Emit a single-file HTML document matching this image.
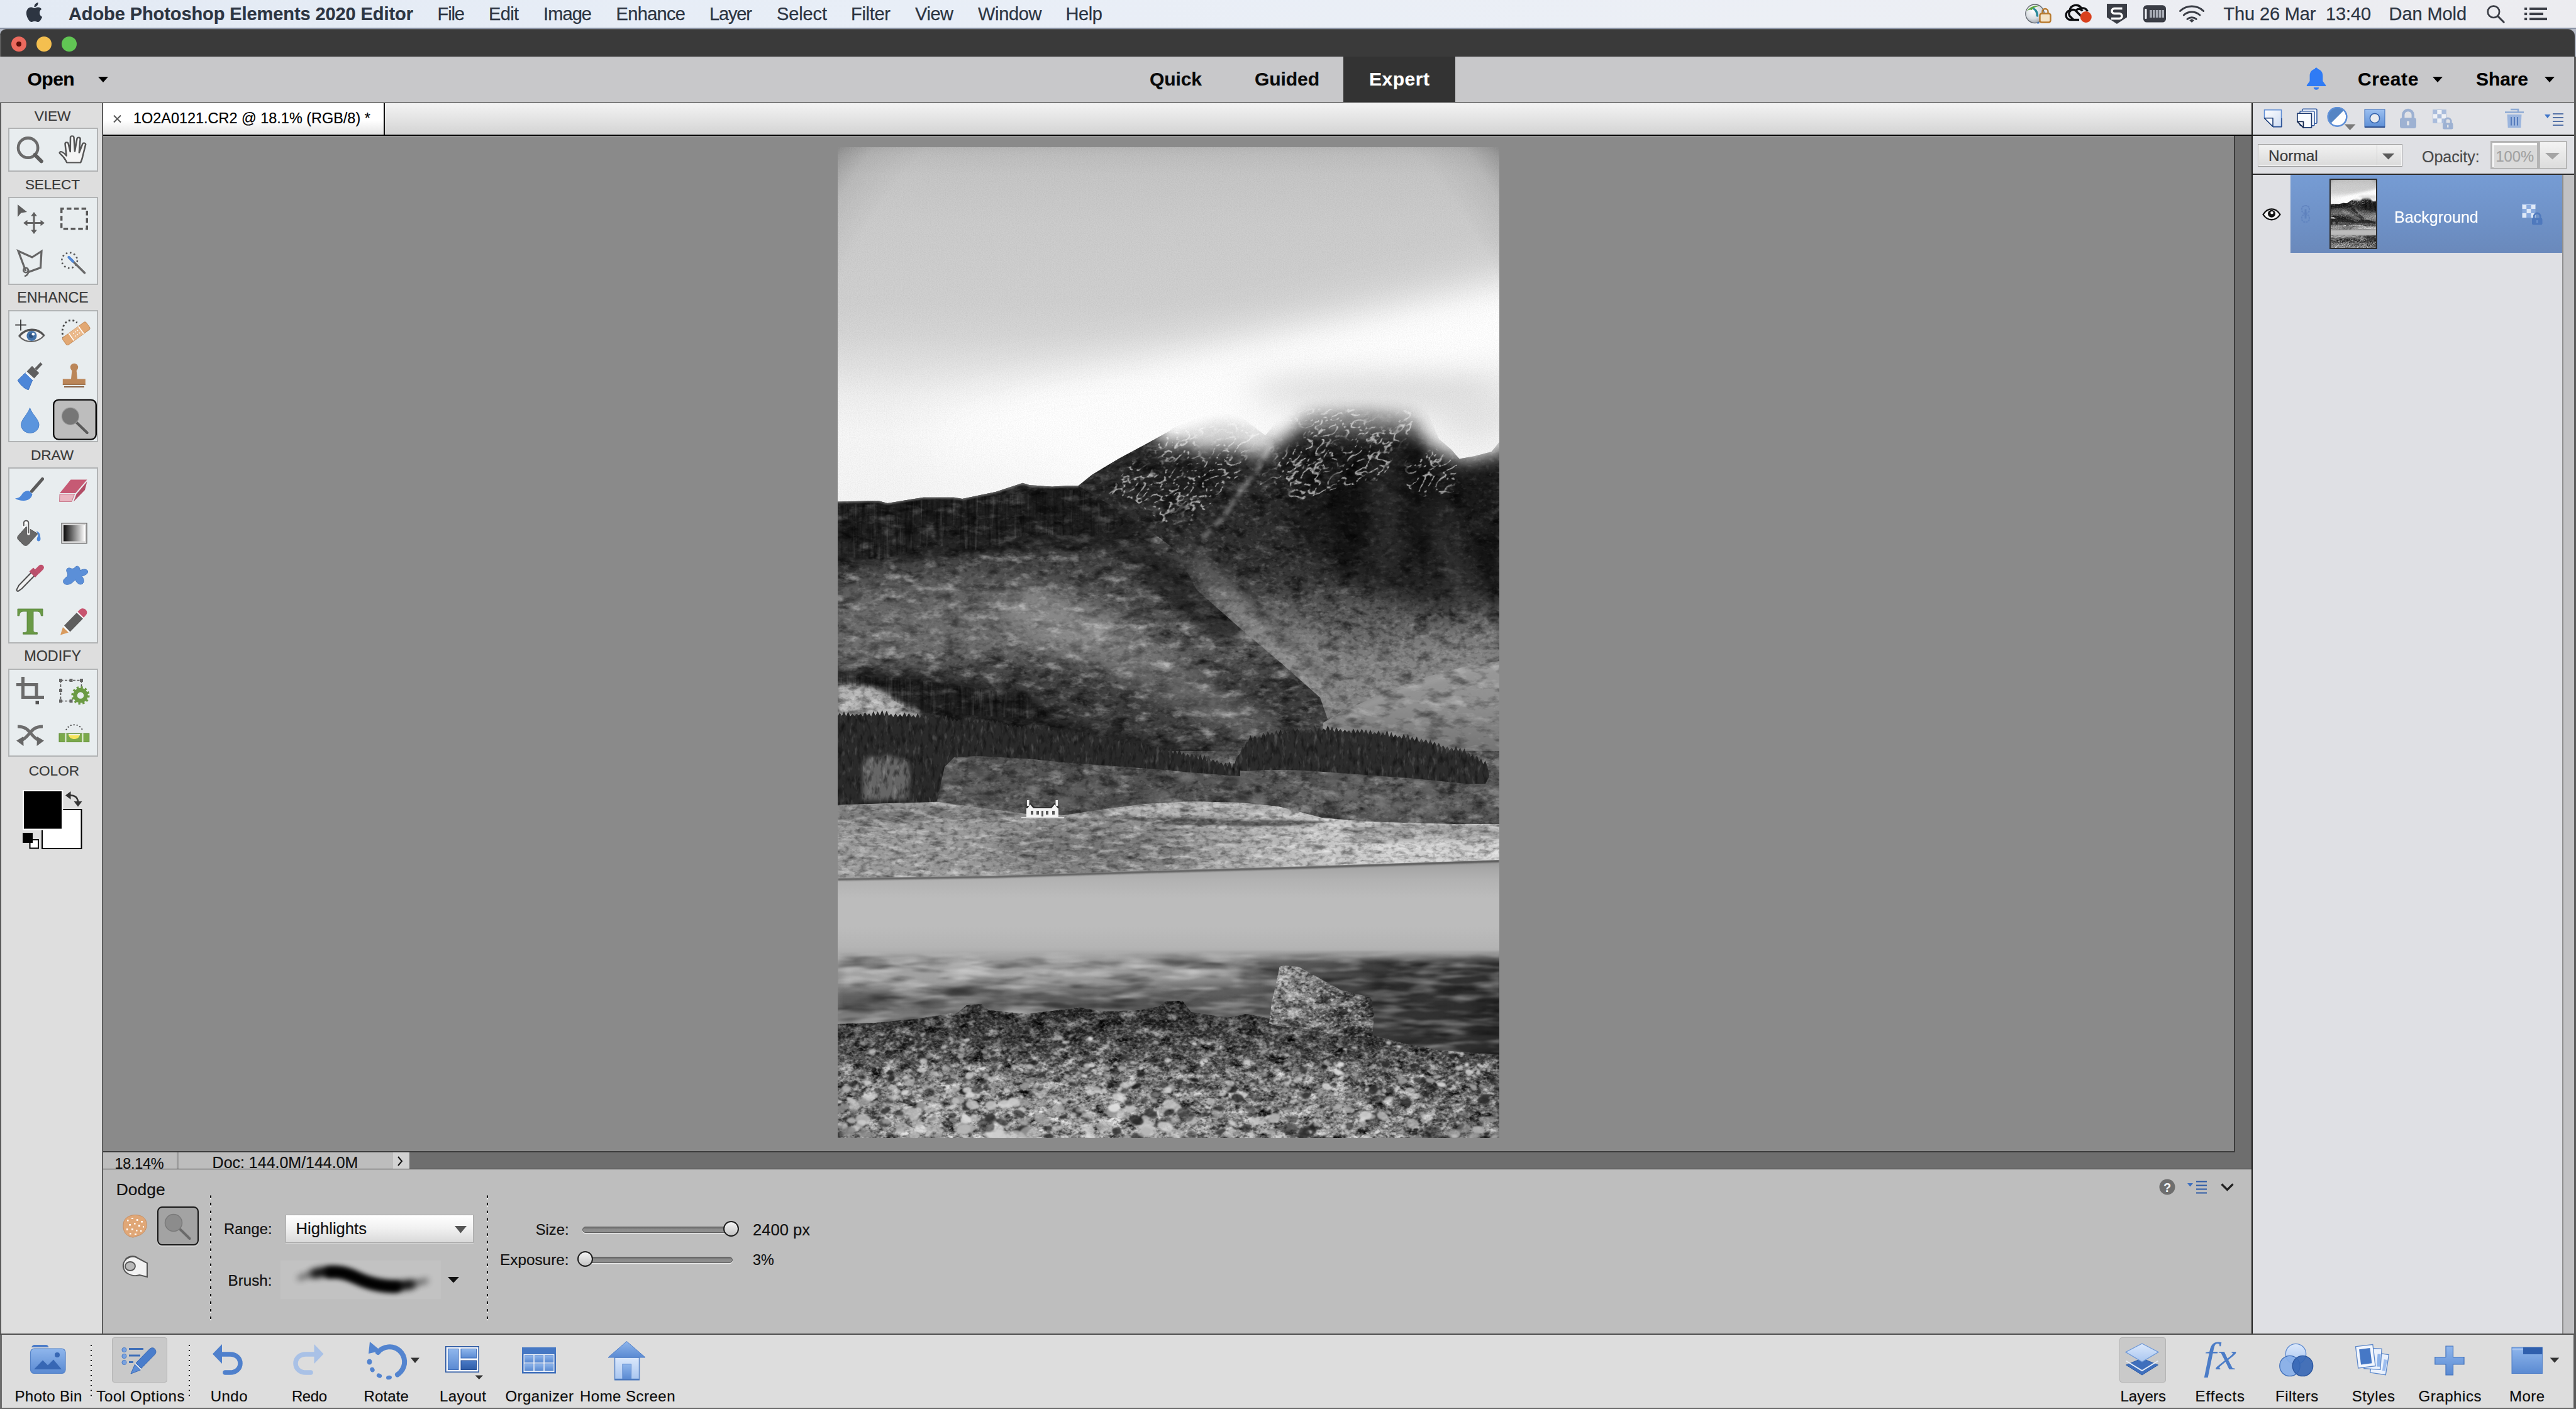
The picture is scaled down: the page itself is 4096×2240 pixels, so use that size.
<!DOCTYPE html>
<html><head><meta charset="utf-8"><title>Photoshop Elements</title>
<style>
html,body{margin:0;padding:0;}
body{width:4096px;height:2240px;overflow:hidden;position:relative;background:#dcdcdc;font-family:"Liberation Sans",sans-serif;}
.a{position:absolute;display:block;}
.t{position:absolute;white-space:nowrap;-webkit-text-stroke:0.2px;}
</style></head><body>
<!-- chrome -->
<div class="a" style="left:0px;top:0px;width:4096px;height:44px;background:linear-gradient(90deg,#e3eaf4 0%,#e8eef7 35%,#eceff5 70%,#ececf0 100%);"></div>
<svg class="a" style="left:38.9px;top:4px;" width="31" height="31" viewBox="0 0 24 24"><path fill="#2d3542" d="M12.152 6.896c-.948 0-2.415-1.078-3.960-1.040-2.040.027-3.910 1.183-4.961 3.014-2.117 3.675-.546 9.103 1.519 12.090 1.013 1.454 2.208 3.090 3.792 3.039 1.520-.065 2.090-.987 3.935-.987 1.831 0 2.350.987 3.960.948 1.637-.026 2.676-1.480 3.676-2.948 1.156-1.688 1.636-3.325 1.662-3.415-.039-.013-3.182-1.221-3.220-4.857-.026-3.040 2.480-4.494 2.597-4.559-1.429-2.090-3.623-2.324-4.390-2.376-2-.156-3.675 1.090-4.610 1.090zM15.530 3.830c.843-1.012 1.400-2.427 1.245-3.830-1.207.052-2.662.805-3.532 1.818-.780.896-1.454 2.338-1.273 3.714 1.338.104 2.715-.688 3.559-1.701"/></svg>
<div class="t" style="left:109.0px;top:7.9px;font-size:29.00px;line-height:29.00px;font-weight:700;color:#2d3542;letter-spacing:-0.09px;">Adobe Photoshop Elements 2020 Editor</div>
<div class="t" style="left:695.6px;top:7.8px;font-size:29.00px;line-height:29.00px;font-weight:400;color:#2d3542;letter-spacing:-1.11px;-webkit-text-stroke:0.25px #2d3542;">File</div>
<div class="t" style="left:777.0px;top:7.8px;font-size:29.00px;line-height:29.00px;font-weight:400;color:#2d3542;letter-spacing:-0.66px;-webkit-text-stroke:0.25px #2d3542;">Edit</div>
<div class="t" style="left:864.0px;top:7.8px;font-size:29.00px;line-height:29.00px;font-weight:400;color:#2d3542;letter-spacing:-0.90px;-webkit-text-stroke:0.25px #2d3542;">Image</div>
<div class="t" style="left:979.6px;top:7.8px;font-size:29.00px;line-height:29.00px;font-weight:400;color:#2d3542;letter-spacing:-0.68px;-webkit-text-stroke:0.25px #2d3542;">Enhance</div>
<div class="t" style="left:1128.0px;top:7.8px;font-size:29.00px;line-height:29.00px;font-weight:400;color:#2d3542;letter-spacing:-1.14px;-webkit-text-stroke:0.25px #2d3542;">Layer</div>
<div class="t" style="left:1235.0px;top:7.8px;font-size:29.00px;line-height:29.00px;font-weight:400;color:#2d3542;letter-spacing:-0.12px;-webkit-text-stroke:0.25px #2d3542;">Select</div>
<div class="t" style="left:1353.0px;top:7.8px;font-size:29.00px;line-height:29.00px;font-weight:400;color:#2d3542;letter-spacing:-0.29px;-webkit-text-stroke:0.25px #2d3542;">Filter</div>
<div class="t" style="left:1455.0px;top:7.8px;font-size:29.00px;line-height:29.00px;font-weight:400;color:#2d3542;letter-spacing:-0.44px;-webkit-text-stroke:0.25px #2d3542;">View</div>
<div class="t" style="left:1555.0px;top:7.8px;font-size:29.00px;line-height:29.00px;font-weight:400;color:#2d3542;letter-spacing:-0.33px;-webkit-text-stroke:0.25px #2d3542;">Window</div>
<div class="t" style="left:1694.5px;top:7.8px;font-size:29.00px;line-height:29.00px;font-weight:400;color:#2d3542;letter-spacing:-0.38px;-webkit-text-stroke:0.25px #2d3542;">Help</div>
<div class="t" style="left:3535.5px;top:7.8px;font-size:29.00px;line-height:29.00px;font-weight:400;color:#2d3542;letter-spacing:-0.15px;-webkit-text-stroke:0.25px #2d3542;">Thu 26 Mar  13:40</div>
<div class="t" style="left:3798.6px;top:7.8px;font-size:29.00px;line-height:29.00px;font-weight:400;color:#2d3542;letter-spacing:-0.10px;-webkit-text-stroke:0.25px #2d3542;">Dan Mold</div>
<svg class="a" style="left:3200px;top:0px;" width="896" height="46" viewBox="3200 0 896 46"><defs><radialGradient id="glb" cx=".4" cy=".35" r=".7"><stop offset="0" stop-color="#ffffff"/><stop offset=".6" stop-color="#d9dde2"/><stop offset="1" stop-color="#9aa0a8"/></radialGradient></defs><circle cx="3235.600" cy="21.800" r="14.800" fill="url(#glb)" stroke="#5f646b" stroke-width="1.300"/><path d="M3222.500 18c5-7 14-11 22-8-6-.5-11 2-14 6-3-1-6 0-8 2z" fill="#5aa63a"/><path d="M3233 12c6 2 9 8 8 15l-3.500-1c.5-5-1.500-9-5-11z" fill="#2b8a9a"/><path d="M3240 34l3 3-3.500 1z" fill="#3b7fd6"/><rect x="3243.500" y="21.500" width="17" height="14" rx="3" fill="#f3e3c8" stroke="#b87a2e" stroke-width="2.400"/><path d="M3247.500 21v-2.500a4.500 4.500 0 0 1 9 0V21" fill="none" stroke="#b87a2e" stroke-width="2.400"/><path d="M3292 31.500a7.500 7.500 0 0 1-1-14.800 10 10 0 0 1 18.500-3.500 8.500 8.500 0 0 1 10 5" fill="none" stroke="#0c0d10" stroke-width="3.400"/><path d="M3297 31.500l-6-6a6.500 6.500 0 0 1 9-9l10 10M3301 16.500a6 6 0 0 1 10 1" fill="none" stroke="#0c0d10" stroke-width="3.400" stroke-linejoin="round"/><path d="M3292 31.500h14" stroke="#0c0d10" stroke-width="3.400"/><circle cx="3316.800" cy="27" r="9" fill="#d9411e"/><path d="M3350 6h32v21.500l-16 10.500-16-10.500z" fill="#3a3d45"/><path d="M3374.500 13.500h-12.500a4 4 0 0 0 0 8h8a4 4 0 0 1 0 8h-13" fill="none" stroke="#fff" stroke-width="3.600"/><rect x="3408" y="8.200" width="36" height="27.400" rx="5.500" fill="#3a3d45"/><rect x="3410.500" y="14" width="3" height="16" rx="1" fill="#f2f4f8"/><rect x="3418.2" y="16" width="3.600" height="12" fill="#a9adb6"/><rect x="3423" y="16" width="3.600" height="12" fill="#a9adb6"/><rect x="3427.8" y="16" width="3.600" height="12" fill="#a9adb6"/><rect x="3432.6" y="16" width="3.600" height="12" fill="#a9adb6"/><rect x="3437.4" y="16" width="3.600" height="12" fill="#a9adb6"/><g fill="none" stroke="#3a3d45" stroke-width="3" stroke-linecap="round"><path d="M3466.500 17.500a27 27 0 0 1 37.200 0"/><path d="M3472.300 24a19 19 0 0 1 25.600 0"/><path d="M3478 30.300a11 11 0 0 1 14.200 0"/></g><path d="M3481.200 32.300l3.900-2.300 3.900 2.300-3.900 3.700z" fill="#3a3d45"/><circle cx="3964.900" cy="18.800" r="9.200" fill="none" stroke="#3a3d45" stroke-width="2.700"/><path d="M3971.600 25.600l9.600 9.700" stroke="#3a3d45" stroke-width="3" stroke-linecap="round"/><rect x="4014" y="12" width="4.200" height="3.900" fill="#3a3d45"/><rect x="4022" y="12" width="28" height="3.900" fill="#3a3d45"/><rect x="4014" y="20.2" width="4.200" height="3.900" fill="#3a3d45"/><rect x="4022" y="20.2" width="22" height="3.900" fill="#3a3d45"/><rect x="4014" y="28.2" width="4.200" height="3.900" fill="#3a3d45"/><rect x="4022" y="28.2" width="28" height="3.900" fill="#3a3d45"/></svg>
<div class="a" style="left:0px;top:44px;width:4096px;height:46px;background:linear-gradient(#8b94a5 0,#8b94a5 2px,#b4b9c6 2px);"></div>
<div class="a" style="left:0px;top:46px;width:4094px;height:44px;background:#3a3a3a;border-radius:10px 11px 0 0;border-top:1px solid #5a5a5a;box-sizing:border-box;"></div>
<div class="a" style="left:4093px;top:90px;width:3px;height:2150px;background:#5c5c5c;"></div>
<div class="a" style="left:18px;top:58px;width:24px;height:24px;border-radius:50%;background:#ec6a5e;"></div>
<div class="a" style="left:26px;top:66px;width:8px;height:8px;border-radius:50%;background:#5c0f0a;"></div>
<div class="a" style="left:58px;top:58px;width:24px;height:24px;border-radius:50%;background:#f4bf4f;"></div>
<div class="a" style="left:98px;top:58px;width:24px;height:24px;border-radius:50%;background:#61c554;"></div>
<div class="a" style="left:0px;top:56px;width:2px;height:2184px;background:#5c5c5c;"></div>
<div class="a" style="left:0px;top:90px;width:4093px;height:72px;background:#c8c8ca;"></div>
<div class="a" style="left:0px;top:162px;width:4093px;height:2px;background:#7c7c7c;"></div>
<div class="t" style="left:43.4px;top:111.1px;font-size:30.00px;line-height:30.00px;font-weight:700;color:#000;letter-spacing:-0.46px;">Open</div>
<svg class="a" style="left:156px;top:121.5px;" width="16" height="9" viewBox="0 0 16 9"><path d="M0 0h16l-8 9z" fill="#000"/></svg>
<div class="t" style="left:1828.0px;top:111.1px;font-size:30.00px;line-height:30.00px;font-weight:700;color:#0a0a0a;letter-spacing:-0.09px;">Quick</div>
<div class="t" style="left:1995.0px;top:111.1px;font-size:30.00px;line-height:30.00px;font-weight:700;color:#0a0a0a;letter-spacing:-0.07px;">Guided</div>
<div class="a" style="left:2136px;top:90px;width:178px;height:72px;background:#333333;"></div>
<div class="t" style="left:2177.0px;top:111.1px;font-size:30.00px;line-height:30.00px;font-weight:700;color:#fff;letter-spacing:0.53px;">Expert</div>
<div class="t" style="left:3749.0px;top:111.1px;font-size:30.00px;line-height:30.00px;font-weight:700;color:#000;letter-spacing:0.60px;">Create</div>
<svg class="a" style="left:3868px;top:121.5px;" width="16" height="9" viewBox="0 0 16 9"><path d="M0 0h16l-8 9z" fill="#000"/></svg>
<div class="t" style="left:3937.0px;top:111.1px;font-size:30.00px;line-height:30.00px;font-weight:700;color:#000;letter-spacing:-0.09px;">Share</div>
<svg class="a" style="left:4046px;top:121.5px;" width="16" height="9" viewBox="0 0 16 9"><path d="M0 0h16l-8 9z" fill="#000"/></svg>
<svg class="a" style="left:3664px;top:106px;" width="38" height="38" viewBox="0 0 38 38"><path fill="#2f7bf5" d="M19 1.500c1.400 0 2.400 1 2.400 2.300 5 1.200 8 5.200 8 10.700v8.500l4.600 6.200c.6.800.1 1.800-.9 1.800H4.900c-1 0-1.500-1-.9-1.800L8.600 23v-8.500c0-5.500 3-9.500 8-10.700C16.600 2.500 17.600 1.500 19 1.500zM14.800 33h8.400c0 2.200-1.900 3.800-4.200 3.800s-4.200-1.600-4.200-3.800z"/></svg>
<div class="a" style="left:164px;top:164px;width:3416px;height:50px;background:linear-gradient(#f3f3f3,#e2e2e2 55%,#d3d3d3);"></div>
<div class="a" style="left:164px;top:164px;width:446px;height:50px;background:linear-gradient(#ffffff 0%,#ffffff 55%,#e4e4e4 100%);"></div>
<div class="a" style="left:610px;top:164px;width:2px;height:50px;background:#111;"></div>
<div class="a" style="left:164px;top:214px;width:3416px;height:2px;background:#000;"></div>
<svg class="a" style="left:179.5px;top:182.5px;" width="13" height="12" viewBox="0 0 13 12"><path d="M1 .5l11 11M12 .5L1 11.500" stroke="#555" stroke-width="2" fill="none"/></svg>
<div class="t" style="left:212.0px;top:176.8px;font-size:23.45px;line-height:23.45px;font-weight:400;color:#000;letter-spacing:0.00px;">1O2A0121.CR2 @ 18.1% (RGB/8) *</div>
<div class="a" style="left:164px;top:216px;width:3388px;height:1614px;background:#8a8a8a;"></div>
<div class="a" style="left:164px;top:216px;width:3388px;height:2px;background:#969696;"></div>
<div class="a" style="left:3552px;top:216px;width:2px;height:1616px;background:#3c3c3c;"></div>
<div class="a" style="left:3554px;top:216px;width:26px;height:1642px;background:#6e6e6e;"></div>
<div class="a" style="left:164px;top:1830px;width:3390px;height:2px;background:#3c3c3c;"></div>
<div class="a" style="left:164px;top:1832px;width:3416px;height:26px;background:#6e6e6e;"></div>
<div class="a" style="left:164px;top:1858px;width:3416px;height:1px;background:#2e2e2e;"></div>
<!-- left -->
<div class="a" style="left:2px;top:164px;width:160px;height:1956px;background:#dedede;"></div>
<div class="a" style="left:162px;top:164px;width:2px;height:1956px;background:#5e5e5e;"></div>
<div class="t" style="left:54.7px;top:173.2px;font-size:22.74px;line-height:22.74px;font-weight:400;color:#3a3a3a;letter-spacing:-0.08px;">VIEW</div>
<div class="t" style="left:39.9px;top:283.4px;font-size:22.61px;line-height:22.61px;font-weight:400;color:#3a3a3a;letter-spacing:-0.17px;">SELECT</div>
<div class="t" style="left:27.3px;top:462.4px;font-size:23.19px;line-height:23.19px;font-weight:400;color:#3a3a3a;letter-spacing:-0.00px;">ENHANCE</div>
<div class="t" style="left:49.0px;top:713.3px;font-size:22.61px;line-height:22.61px;font-weight:400;color:#3a3a3a;letter-spacing:-0.07px;">DRAW</div>
<div class="t" style="left:38.3px;top:1032.4px;font-size:23.32px;line-height:23.32px;font-weight:400;color:#3a3a3a;letter-spacing:0.00px;">MODIFY</div>
<div class="t" style="left:45.8px;top:1215.2px;font-size:22.55px;line-height:22.55px;font-weight:400;color:#3a3a3a;letter-spacing:-0.00px;">COLOR</div>
<div class="a" style="left:12.5px;top:202.5px;width:143px;height:70.5px;box-sizing:border-box;background:#e8edef;border:2px solid #b2b4b5;"></div>
<div class="a" style="left:12.5px;top:312.5px;width:143px;height:140.1px;box-sizing:border-box;background:#e8edef;border:2px solid #b2b4b5;"></div>
<div class="a" style="left:12.5px;top:493.2px;width:143px;height:209.6px;box-sizing:border-box;background:#e8edef;border:2px solid #b2b4b5;"></div>
<div class="a" style="left:12.5px;top:742.7px;width:143px;height:280.2px;box-sizing:border-box;background:#e8edef;border:2px solid #b2b4b5;"></div>
<div class="a" style="left:12.5px;top:1062.8px;width:143px;height:140.5px;box-sizing:border-box;background:#e8edef;border:2px solid #b2b4b5;"></div>
<svg class="a" style="left:0px;top:164px;" width="164" height="1236" viewBox="0 164 164 1236"><circle cx="44.6" cy="235" r="15.6" fill="none" stroke="#6b6b6b" stroke-width="4.6"/><path d="M55.500 246.200L65.800 256.300" stroke="#5d5d5d" stroke-width="6" stroke-linecap="round"/><g transform="translate(116 0) scale(1.15 1) translate(-112.500 0)"><path d="M104 258.500c-1.500-4.500-5-10-9.500-14.500-1.300-1.600.600-3.600 2.600-2.600 2.400 1.300 4.600 3.600 6.400 6.200l-1.800-18.500c-.3-3.200 3.700-3.700 4.400-.6l2.700 12.700.2-22.400c0-3.300 4.500-3.400 4.800-.1l1.300 21.900 3-19.900c.5-3.100 4.700-2.600 4.500.6l-1.500 21.400 4.600-13.600c1-2.900 4.900-1.800 4.200 1.200-1.500 7-3.200 14.500-4.300 19.900-.6 3-1.500 5.700-2.600 8.300z" fill="#f4f4f4" stroke="#555" stroke-width="2.200" stroke-linejoin="round"/></g><path d="M28 325v20l5.500-6.500 9.500-1.500z" fill="#5e5e5e"/><path d="M54 340v29M39.500 354.500h29" stroke="#666" stroke-width="3.200"/><path d="M54 337l-4.800 6.500h9.600zM54 372l-4.800-6.500h9.600zM37 354.500l6.500-4.800v9.600zM71 354.500l-6.500-4.800v9.600z" fill="#5e5e5e"/><rect x="97.700" y="331.800" width="40.600" height="32" fill="none" stroke="#585858" stroke-width="3.400" stroke-dasharray="7.500 4.300" stroke-dashoffset="3.500"/><path d="M41 431l-12-32 22 10 15-9.500-1.500 26-20.500 7.500" fill="none" stroke="#666" stroke-width="3.200" stroke-linejoin="miter"/><circle cx="41" cy="429.500" r="3.800" fill="none" stroke="#666" stroke-width="2.600"/><path d="M44.500 427.500c2.500 5-1 11-5.500 11.500" fill="none" stroke="#666" stroke-width="2.600"/><circle cx="110.600" cy="414" r="12.300" fill="none" stroke="#555" stroke-width="2.600" stroke-dasharray="2.600 3.840"/><path d="M113 412.500L134.500 433.800" stroke="#6a6a6a" stroke-width="3.600" stroke-linecap="round"/><path d="M109.500 409l6.500 6.500" stroke="#4f86d6" stroke-width="4.200" stroke-linecap="round"/><path d="M33 508v17.500M24.200 516.700h17.600" stroke="#333" stroke-width="1.800"/><path d="M30.600 534.500c10-13 29-14 39.400-1-10.500 12-29 13-39.400 1z" fill="#f3f3f3" stroke="#666" stroke-width="2.200"/><path d="M30.600 534.500c10-13 29-14 39.400-1" fill="none" stroke="#555" stroke-width="3.400"/><circle cx="50.400" cy="534" r="8" fill="#4272a8"/><circle cx="49.500" cy="533.800" r="3.500" fill="#2c4f7d"/><circle cx="52.800" cy="531.300" r="2.300" fill="#fff"/><path d="M101.500 538c-4-8-3-20 4-26 5-4 12-3.500 17 1" fill="none" stroke="#444" stroke-width="2.800" stroke-dasharray="2.800 3.600"/><g transform="rotate(-36 121.200 530.200)"><rect x="98.200" y="523" width="46" height="14.400" rx="3" fill="#e2a873" stroke="#c68e5a" stroke-width="1"/><rect x="112.200" y="523" width="18" height="14.400" fill="#eab98b"/><path d="M111.700 523v14.400M130.700 523v14.400" stroke="#fff" stroke-width="1.600"/><path d="M117 527.500h1.600M121 527.500h1.600M125 527.500h1.600M117 532.500h1.600M121 532.500h1.600M125 532.500h1.600" stroke="#fff" stroke-width="1.600"/></g><path d="M28.200 604.500l12.200-11.800 11.500 11-6.700 16c-7-2-13-8-17-15.200z" fill="#4c86d8" stroke="#3a6fbd" stroke-width="1"/><path d="M42.600 590.500l8.400-8.700 11.200 11.200-7.800 8.600z" fill="#5f5f5f"/><path d="M55.300 585.500l9-9.500 3.200 3.200-9 9.500z" fill="#5f5f5f"/><path d="M40.800 592.500l11.400 11" stroke="#fff" stroke-width="1.600"/><circle cx="118" cy="584" r="6.200" fill="#bb8658"/><path d="M114.500 588h7l1.500 14.500h12.800v9h-36v-9h13.200z" fill="#bb8658"/><path d="M102 615h32" stroke="#7b5230" stroke-width="1.800"/><path d="M99.800 611.200h36" stroke="#8e6138" stroke-width="1.200"/><path d="M47.500 648.500c4 11 14.500 18.500 14.500 27a14.200 13 0 0 1-28.400 0c0-8.500 10-16 13.900-27z" fill="#5b95dd" stroke="#4a80c8" stroke-width="1"/><rect x="85.200" y="635.600" width="67.600" height="63" rx="8" fill="#bdbdbd" stroke="#0c0c0c" stroke-width="2.400"/><path d="M121 671l17.600 17" stroke="#5a5a5a" stroke-width="4.200" stroke-linecap="round"/><circle cx="111.900" cy="661.800" r="13.600" fill="#767676" stroke="#9a9a9a" stroke-width="1.200"/><defs><linearGradient id="lgGrad" x1="0" x2="1"><stop offset="0" stop-color="#0a0a0a"/><stop offset="1" stop-color="#fff"/></linearGradient></defs><path d="M67.500 761.500L50.500 781" stroke="#5b5b5b" stroke-width="5" stroke-linecap="round"/><path d="M46.500 780.500l5 5c-1 7-8 11-14.500 10.500-5 0-9.500-1.500-13-3.500 5-.5 8.500-2.500 10.500-6 2.500-4.500 7-7 12-6z" fill="#4e88d9"/><path d="M112.500 762.500h26L120 784h-25z" fill="#c65a74"/><path d="M95 785.500h23.500L114 797.500H94.500z" fill="#eab6c1" stroke="#c87b8e" stroke-width="1"/><path d="M121.500 785.500L138.500 765.500l-3.500 13.500-18 18.500z" fill="#b24d66"/><path d="M41.600 837.500L60 848.500 45.500 865c-2.500 2.800-5.500 3.200-8.500 1l-7.500-7.500c-2.500-2.500-2.300-5 0-7.500z" fill="#686868" stroke="#585858" stroke-width="1"/><path d="M45.400 848.500v-14.500a3.800 3.800 0 0 0-7.600 0v3" fill="none" stroke="#fff" stroke-width="4.600" stroke-linecap="round"/><path d="M45.400 847v-15.500a3.800 3.800 0 0 0-7.600 0v4" fill="none" stroke="#595959" stroke-width="2" stroke-linecap="round"/><path d="M57.400 844.200c4.500 1.300 6.500 4.200 6.500 8 .3 2.800 1.400 5.300-.4 7.300-1.800 1.700-4.600.9-4.900-1.800-.3-2.500 1.700-4.200 1.800-6.700.1-2.600-1-4.800-3-6.800z" fill="#4e88d9"/><rect x="98" y="831.700" width="40" height="32" fill="#d8d8d8" stroke="#6f6f6f" stroke-width="1.400"/><rect x="101" y="835" width="34" height="25.500" fill="url(#lgGrad)"/><path d="M27 936.500c-1.500 1.500.5 4.500 2.500 3l5.500-4 20.500-21-5-5-20.500 21z" fill="#f2f2f2" stroke="#4e4e4e" stroke-width="2"/><path d="M46.500 908.500l6.500-6 9 9-6 6.500z" fill="#b8506b"/><path d="M55.500 905.500l6.500-6.500a4.500 4.500 0 0 1 6.500 6.500L62 912z" fill="#c0506c"/><path d="M121 900.500c4-1.500 6 2 6.500 6.500 4-2.500 10.500-3 12 1 1 4-4 6.500-9.500 8 3.500 4 4.500 9.500 1 12-4.500 3-9-1.500-11.500-6.500-3.500 4.500-9 9-15 7.500-5-1.500-5.500-7 .5-11 3-2.500 3.500-5 1.500-8.500-2.500-4.500 1.500-8 6-6 2.500 1.500 4.500 1 8.500-3z" fill="#5b8fd8" stroke="#4a7cc4" stroke-width="1"/><path d="M28 968h40v11h-2.600c-.8-5-2.400-7-7.400-7h-5v30c0 2.600 1.400 3.600 6.400 3.600v2.600H36.600v-2.600c5 0 6.400-1 6.400-3.600v-30h-5c-5 0-6.600 2-7.400 7H28z" fill="#6a9a46" stroke="#55803a" stroke-width=".8"/><path d="M96 1009.500l4-12.500 9 8.500z" fill="#d99b5e"/><path d="M102 994.500l20-20.500 10 9.500-20.500 21z" fill="#5e5e5e"/><path d="M123.500 972.500l3.500-3.500c3-2.500 7-2 9.500.5s2.500 6 0 8.500l-3.500 4z" fill="#c8546f"/><path d="M100.800 996l9.700 9.200M122.600 973.200l10.200 9.800" stroke="#fff" stroke-width="1.500"/><path d="M36.500 1076v32.500H70M26 1088.500h32v19" fill="none" stroke="#6a6a6a" stroke-width="5"/><rect x="56.500" y="1114" width="5.500" height="5.500" fill="#555"/><path d="M96.500 1081.500h33M96.500 1081.500v33M96.500 1114.500h18M129.500 1081.500v10" stroke="#555" stroke-width="1.600" stroke-dasharray="4 2.500" fill="none"/><g fill="#666"><rect x="94" y="1079" width="5" height="5"/><rect x="110.500" y="1079" width="5" height="5"/><rect x="127" y="1079" width="5" height="5"/><rect x="94" y="1095" width="5" height="5"/><rect x="94" y="1112" width="5" height="5"/><rect x="110.500" y="1112" width="5" height="5"/></g><circle cx="128" cy="1105.600" r="8.500" fill="none" stroke="#6b9a44" stroke-width="6.500"/><circle cx="128" cy="1105.600" r="12.600" fill="none" stroke="#6b9a44" stroke-width="4" stroke-dasharray="3.300 3.300"/><path d="M28 1155c13 0 17 6 22 12s8 9 14 11" fill="none" stroke="#6d6d6d" stroke-width="5"/><path d="M68 1155c-13 0-17 6-22 12s-8 9-14 11" fill="none" stroke="#6d6d6d" stroke-width="5"/><path d="M70 1177.500l-11.500 8.500.5-15zM26 1177.500l11.500 8.500-.5-15z" fill="#666"/><rect x="94" y="1166" width="47.800" height="13.400" fill="#7aa94b" stroke="#5e8a38" stroke-width="1"/><path d="M104.500 1165.500v14.500M131.500 1165.500v14.500" stroke="#e6eedd" stroke-width="2"/><path d="M109 1168h18c-1 5-5 7-9 7s-8-2-9-7z" fill="#f6e45a"/><path d="M109 1168h18" stroke="#fff" stroke-width="1.600"/><path d="M105 1160.500c5-11 21-11 26 0" fill="none" stroke="#333" stroke-width="1.800" stroke-dasharray="1.800 3.200"/><rect x="67" y="1287" width="62.500" height="62" fill="#fff" stroke="#000" stroke-width="2"/><rect x="36" y="1256" width="64.300" height="63.700" fill="#fff"/><rect x="38" y="1258" width="60" height="59.500" fill="#000"/><rect x="47.500" y="1335" width="13.500" height="13.500" fill="#fff" stroke="#000" stroke-width="2"/><rect x="36" y="1324" width="16" height="16" fill="#000"/><path d="M109.500 1264.500c9-1 14.500 3 14.500 11" fill="none" stroke="#333" stroke-width="2.600"/><path d="M104 1264.500l8.500-6.500v13zM124 1282.500l-6.500-8.500h13z" fill="#333"/></svg>
<!-- photo -->
<svg class="a" style="left:1332px;top:234px" width="1052" height="1575" viewBox="0 0 1052 1575"><symbol id="photo" viewBox="0 0 1052 1575" preserveAspectRatio="none"><defs><clipPath id="pclip"><rect x="0" y="0" width="1052" height="1575"/></clipPath><linearGradient id="skyg" x1="0" y1="0" x2="0" y2="620" gradientUnits="userSpaceOnUse"><stop offset="0" stop-color="#b6b6b6"/><stop offset="0.02" stop-color="#bebebe"/><stop offset="0.07" stop-color="#c6c6c6"/><stop offset="0.2" stop-color="#cccccc"/><stop offset="0.4" stop-color="#d0d0d0"/><stop offset="0.48" stop-color="#d6d6d6"/><stop offset="0.56" stop-color="#e2e2e2"/><stop offset="0.64" stop-color="#f0f0f0"/><stop offset="0.74" stop-color="#f8f8f8"/><stop offset="0.88" stop-color="#f6f6f6"/><stop offset="1" stop-color="#f0f0f0"/></linearGradient><filter id="b40" filterUnits="userSpaceOnUse" x="-300" y="-300" width="1652" height="2175"><feGaussianBlur stdDeviation="40"/></filter><filter id="b25" filterUnits="userSpaceOnUse" x="-300" y="-300" width="1652" height="2175"><feGaussianBlur stdDeviation="25"/></filter><filter id="b14" filterUnits="userSpaceOnUse" x="-300" y="-300" width="1652" height="2175"><feGaussianBlur stdDeviation="14"/></filter><filter id="b6" filterUnits="userSpaceOnUse" x="-300" y="-300" width="1652" height="2175"><feGaussianBlur stdDeviation="6"/></filter><filter id="b3" filterUnits="userSpaceOnUse" x="-300" y="-300" width="1652" height="2175"><feGaussianBlur stdDeviation="3"/></filter><filter id="b1" filterUnits="userSpaceOnUse" x="-300" y="-300" width="1652" height="2175"><feGaussianBlur stdDeviation="1.2"/></filter><radialGradient id="vig" cx="0.5" cy="0.5" r="0.72"><stop offset="0.86" stop-color="#000" stop-opacity="0"/><stop offset="0.93" stop-color="#000" stop-opacity="0.060"/><stop offset="0.97" stop-color="#000" stop-opacity="0.180"/><stop offset="1" stop-color="#000" stop-opacity="0.320"/></radialGradient><mask id="fogm" maskUnits="userSpaceOnUse" x="0" y="0" width="1052" height="1575"><rect width="1052" height="1575" fill="#fff"/><path d="M505 436L538 428 575 416 613 408 650 416 690 428 710 408 731 388 800 384 860 385 902 389 945 396 965 440 1000 455 1060 440" fill="none" stroke="#000" stroke-width="84" stroke-linejoin="round" filter="url(#b14)"/><path d="M560 466L620 458 690 476" fill="none" stroke="#000" stroke-width="40" filter="url(#b14)" opacity=".8"/><path d="M740 440L920 440" fill="none" stroke="#000" stroke-width="30" filter="url(#b14)" opacity=".45"/></mask><filter id="nzMtn" x="0" y="0" width="100%" height="100%" color-interpolation-filters="sRGB"><feTurbulence type="fractalNoise" baseFrequency="0.035 0.060" numOctaves="5" seed="3" result="n"/><feColorMatrix in="n" type="matrix" values="0 0 0 0 0  0 0 0 0 0  0 0 0 0 0  1.8 0 0 0 -0.9" result="d"/><feColorMatrix in="n" type="matrix" values="0 0 0 0 1  0 0 0 0 1  0 0 0 0 1  0 0.8 0 0 -0.5" result="l"/><feMerge result="m"><feMergeNode in="d"/><feMergeNode in="l"/></feMerge><feComposite in="m" in2="SourceGraphic" operator="in"/></filter><filter id="nzMtnF" x="0" y="0" width="100%" height="100%" color-interpolation-filters="sRGB"><feTurbulence type="fractalNoise" baseFrequency="0.11 0.16" numOctaves="3" seed="8" result="n"/><feColorMatrix in="n" type="matrix" values="0 0 0 0 0  0 0 0 0 0  0 0 0 0 0  1.4 0 0 0 -0.66" result="d"/><feColorMatrix in="n" type="matrix" values="0 0 0 0 1  0 0 0 0 1  0 0 0 0 1  0 0.8 0 0 -0.44" result="l"/><feMerge result="m"><feMergeNode in="d"/><feMergeNode in="l"/></feMerge><feComposite in="m" in2="SourceGraphic" operator="in"/></filter><filter id="nzSnow" x="0" y="0" width="100%" height="100%" color-interpolation-filters="sRGB"><feTurbulence type="turbulence" baseFrequency="0.05 0.085" numOctaves="2" seed="11" result="n"/><feColorMatrix in="n" type="matrix" values="0 0 0 0 1  0 0 0 0 1  0 0 0 0 1  0 -9 0 0 1.55" result="v"/><feTurbulence type="fractalNoise" baseFrequency="0.02" numOctaves="2" seed="4" result="m"/><feColorMatrix in="m" type="matrix" values="0 0 0 0 1  0 0 0 0 1  0 0 0 0 1  5 0 0 0 -1.5" result="mm"/><feComposite in="v" in2="mm" operator="in" result="vv"/><feComposite in="vv" in2="SourceGraphic" operator="in"/></filter><filter id="nzHill" x="0" y="0" width="100%" height="100%" color-interpolation-filters="sRGB"><feTurbulence type="fractalNoise" baseFrequency="0.030 0.065" numOctaves="5" seed="21" result="n"/><feColorMatrix in="n" type="matrix" values="0 0 0 0 0  0 0 0 0 0  0 0 0 0 0  1.8 0 0 0 -0.88" result="d"/><feColorMatrix in="n" type="matrix" values="0 0 0 0 1  0 0 0 0 1  0 0 0 0 1  0 1.3 0 0 -0.7" result="l"/><feMerge result="m"><feMergeNode in="d"/><feMergeNode in="l"/></feMerge><feComposite in="m" in2="SourceGraphic" operator="in"/></filter><filter id="nzForest" x="0" y="0" width="100%" height="100%" color-interpolation-filters="sRGB"><feTurbulence type="fractalNoise" baseFrequency="0.16 0.06" numOctaves="3" seed="5" result="n"/><feColorMatrix in="n" type="matrix" values="0 0 0 0 0  0 0 0 0 0  0 0 0 0 0  1.5 0 0 0 -0.7" result="d"/><feColorMatrix in="n" type="matrix" values="0 0 0 0 1  0 0 0 0 1  0 0 0 0 1  0 0.7 0 0 -0.4" result="l"/><feMerge result="m"><feMergeNode in="d"/><feMergeNode in="l"/></feMerge><feComposite in="m" in2="SourceGraphic" operator="in"/></filter><filter id="nzGrass" x="0" y="0" width="100%" height="100%" color-interpolation-filters="sRGB"><feTurbulence type="fractalNoise" baseFrequency="0.035 0.12" numOctaves="4" seed="31" result="n"/><feColorMatrix in="n" type="matrix" values="0 0 0 0 0  0 0 0 0 0  0 0 0 0 0  1.3 0 0 0 -0.7" result="d"/><feColorMatrix in="n" type="matrix" values="0 0 0 0 1  0 0 0 0 1  0 0 0 0 1  0 1.3 0 0 -0.64" result="l"/><feMerge result="m"><feMergeNode in="d"/><feMergeNode in="l"/></feMerge><feComposite in="m" in2="SourceGraphic" operator="in"/></filter><filter id="nzWater" x="0" y="0" width="100%" height="100%" color-interpolation-filters="sRGB"><feTurbulence type="fractalNoise" baseFrequency="0.012 0.075" numOctaves="3" seed="41" result="n"/><feColorMatrix in="n" type="matrix" values="0 0 0 0 0  0 0 0 0 0  0 0 0 0 0  1.3 0 0 0 -0.62" result="d"/><feColorMatrix in="n" type="matrix" values="0 0 0 0 1  0 0 0 0 1  0 0 0 0 1  0 1.2 0 0 -0.56" result="l"/><feMerge result="m"><feMergeNode in="d"/><feMergeNode in="l"/></feMerge><feGaussianBlur in="m" stdDeviation="1.2" result="m"/><feComposite in="m" in2="SourceGraphic" operator="in"/></filter><filter id="nzRock" x="0" y="0" width="100%" height="100%" color-interpolation-filters="sRGB"><feTurbulence type="fractalNoise" baseFrequency="0.042 0.070" numOctaves="4" seed="52" result="n"/><feColorMatrix in="n" type="matrix" values="0 0 0 0 0  0 0 0 0 0  0 0 0 0 0  2.6 0 0 0 -1.2" result="d"/><feColorMatrix in="n" type="matrix" values="0 0 0 0 1  0 0 0 0 1  0 0 0 0 1  0 2.5 0 0 -1.2" result="l"/><feMerge result="m"><feMergeNode in="d"/><feMergeNode in="l"/></feMerge><feComposite in="m" in2="SourceGraphic" operator="in"/></filter><filter id="nzRockF" x="0" y="0" width="100%" height="100%" color-interpolation-filters="sRGB"><feTurbulence type="fractalNoise" baseFrequency="0.18 0.24" numOctaves="2" seed="57" result="n"/><feColorMatrix in="n" type="matrix" values="0 0 0 0 0  0 0 0 0 0  0 0 0 0 0  1.6 0 0 0 -0.7" result="d"/><feColorMatrix in="n" type="matrix" values="0 0 0 0 1  0 0 0 0 1  0 0 0 0 1  0 1.5 0 0 -0.68" result="l"/><feMerge result="m"><feMergeNode in="d"/><feMergeNode in="l"/></feMerge><feComposite in="m" in2="SourceGraphic" operator="in"/></filter><filter id="nzCliff" x="0" y="0" width="100%" height="100%" color-interpolation-filters="sRGB"><feTurbulence type="fractalNoise" baseFrequency="0.16 0.012" numOctaves="3" seed="77" result="n"/><feColorMatrix in="n" type="matrix" values="0 0 0 0 0  0 0 0 0 0  0 0 0 0 0  2.6 0 0 0 -1.2" result="d"/><feColorMatrix in="n" type="matrix" values="0 0 0 0 1  0 0 0 0 1  0 0 0 0 1  0 1 0 0 -0.6" result="l"/><feMerge result="m"><feMergeNode in="d"/><feMergeNode in="l"/></feMerge><feComposite in="m" in2="SourceGraphic" operator="in"/></filter><filter id="nzSky" x="0" y="0" width="100%" height="100%" color-interpolation-filters="sRGB"><feTurbulence type="fractalNoise" baseFrequency="0.7" numOctaves="1" seed="61" result="n"/><feColorMatrix in="n" type="matrix" values="0 0 0 0 0  0 0 0 0 0  0 0 0 0 0  0.1 0 0 0 -0.035" result="d"/><feColorMatrix in="n" type="matrix" values="0 0 0 0 1  0 0 0 0 1  0 0 0 0 1  0 0.1 0 0 -0.035" result="l"/><feMerge result="m"><feMergeNode in="d"/><feMergeNode in="l"/></feMerge><feComposite in="m" in2="SourceGraphic" operator="in"/></filter></defs><g clip-path="url(#pclip)"><rect x="0" y="0" width="1052" height="640" fill="url(#skyg)"/><path d="M150 500L1150 270" stroke="#fff" stroke-width="150" filter="url(#b40)" fill="none"/><path d="M280 462L1150 262" stroke="#fff" stroke-width="84" filter="url(#b25)" fill="none"/><ellipse cx="420" cy="490" rx="230" ry="70" fill="#fff" filter="url(#b40)" opacity=".95"/><ellipse cx="120" cy="545" rx="260" ry="60" fill="#f6f6f6" filter="url(#b40)" opacity=".7"/><ellipse cx="850" cy="388" rx="200" ry="26" fill="#c4c4c4" filter="url(#b25)" opacity=".6"/><ellipse cx="1015" cy="430" rx="60" ry="40" fill="#dcdcdc" filter="url(#b25)" opacity=".6"/><rect x="0" y="0" width="1052" height="640" filter="url(#nzSky)" fill="#000"/><defs><linearGradient id="mtng" x1="0" y1="415" x2="0" y2="960" gradientUnits="userSpaceOnUse"><stop offset="0" stop-color="#2a2a2a"/><stop offset="0.25" stop-color="#2c2c2c"/><stop offset="0.42" stop-color="#323232"/><stop offset="0.51" stop-color="#3c3c3c"/><stop offset="0.57" stop-color="#565656"/><stop offset="0.66" stop-color="#6a6a6a"/><stop offset="0.8" stop-color="#747474"/><stop offset="1" stop-color="#686868"/></linearGradient><linearGradient id="ridgeg" x1="0" y1="535" x2="0" y2="960" gradientUnits="userSpaceOnUse"><stop offset="0" stop-color="#343434"/><stop offset="0.16" stop-color="#383838"/><stop offset="0.27" stop-color="#444"/><stop offset="0.45" stop-color="#525252"/><stop offset="0.62" stop-color="#5c5c5c"/><stop offset="0.72" stop-color="#444"/><stop offset="0.84" stop-color="#3c3c3c"/><stop offset="1" stop-color="#4a4a4a"/></linearGradient><linearGradient id="rhillg" x1="0" y1="817" x2="0" y2="960" gradientUnits="userSpaceOnUse"><stop offset="0" stop-color="#9a9a9a"/><stop offset="0.5" stop-color="#8e8e8e"/><stop offset="1" stop-color="#747474"/></linearGradient><clipPath id="cMtn"><path d="M379 541L404.600 520.500 447 495 490 472 526 452 538 444 575 430 613 420 640 428 680 458 690 446 708.700 420 731 398 800 393 860 394 902 398 932 404 944 436 956 464 975 480 988.500 495.500 1013 491 1039.600 484 1052 468.800V1000H379Z"/></clipPath><clipPath id="cRidge"><path d="M0 563.600L64 562 79 566 136 556.700 185 556.700 198 559 251 548 283 537.600 294 533.700 304.500 537 341 539.700 366 538 383 538.600 481 598 537 640 571 704 639 764 705 820 767 875 779 909 779 1000H0Z"/></clipPath><clipPath id="cSnow"><path d="M478 486L540 452 640 436 672 452 640 520 600 560 560 600 520 600 470 560 430 550Z"/><path d="M690 462L725 415 920 418 900 480 860 530 800 540 740 560 700 560 670 540Z"/><path d="M900 500L950 478 985 505 980 548 930 556 905 540Z"/></clipPath></defs><g mask="url(#fogm)"><path d="M379 541L404.600 520.500 447 495 490 472 526 452 538 444 575 430 613 420 640 428 680 458 690 446 708.700 420 731 398 800 393 860 394 902 398 932 404 944 436 956 464 975 480 988.500 495.500 1013 491 1039.600 484 1052 468.800V1000H379Z" fill="url(#mtng)"/><g clip-path="url(#cMtn)"><rect x="379" y="400" width="673" height="600" fill="#000" filter="url(#nzMtn)"/><rect x="379" y="400" width="673" height="600" fill="#000" filter="url(#nzMtnF)" opacity=".7"/><path d="M690 470L760 425 935 420 990 500 1052 475V730L960 745 840 705 740 640Z" fill="#000" opacity=".38" filter="url(#b14)"/><path d="M780 560L830 470 850 600 800 700ZM880 520L920 450 960 560 930 680Z" fill="#000" opacity=".32" filter="url(#b6)"/><path d="M842 520L900 470 905 620 862 720Z" fill="#fff" opacity=".06" filter="url(#b14)"/><path d="M470 500L560 470 640 470 600 560 520 600Z" fill="#000" opacity=".25" filter="url(#b14)"/><path d="M560 650L700 740 820 800 960 770 1052 780V870L900 885 790 910 700 835 600 745Z" fill="#fff" opacity=".14" filter="url(#b14)"/><path d="M548 634C590 680 640 740 700 800S760 870 790 900" fill="none" stroke="#fff" stroke-width="26" opacity=".13" filter="url(#b14)"/><path d="M640 700L770 842" fill="none" stroke="#000" stroke-width="14" opacity=".22" filter="url(#b6)"/><path d="M940 560L990 700 1052 800" fill="none" stroke="#fff" stroke-width="40" opacity=".07" filter="url(#b14)"/><path d="M1015 640L1052 590V770Z" fill="#000" opacity=".35" filter="url(#b6)"/><g clip-path="url(#cSnow)" opacity=".62"><g transform="rotate(-30 700 500)"><rect x="300" y="200" width="800" height="600" fill="#fff" filter="url(#nzSnow)"/></g></g><path d="M690 470L668 512 640 548 612 590 580 622" fill="none" stroke="#e8e8e8" stroke-width="6" opacity=".45" filter="url(#b3)" stroke-dasharray="30 6 18 8 40 5"/></g></g><path d="M0 563.600L64 562 79 566 136 556.700 185 556.700 198 559 251 548 283 537.600 294 533.700 304.500 537 341 539.700 366 538 383 538.600 481 598 537 640 571 704 639 764 705 820 767 875 779 909 779 1000H0Z" fill="url(#ridgeg)"/><g clip-path="url(#cRidge)"><path d="M0 850L60 858 130 897 128 910 0 910Z" fill="#b4b4b4" filter="url(#b3)"/><rect x="0" y="530" width="790" height="470" fill="#000" filter="url(#nzHill)"/><rect x="0" y="530" width="790" height="470" fill="#000" filter="url(#nzMtnF)" opacity=".6"/><path d="M0 555L300 538 383 534 500 606 440 640 300 636 150 655 0 668Z" fill="#000" opacity=".42" filter="url(#b6)"/><path d="M0 700L200 680 380 700 470 760 380 800 200 805 0 815Z" fill="#fff" opacity=".13" filter="url(#b14)"/><path d="M0 828L120 838 300 866 345 905 600 960 640 990 200 990 140 900 60 858 0 848Z" fill="#000" opacity=".46" filter="url(#b6)"/><path d="M300 690L440 750 580 840 720 930 620 930 470 860 330 790 250 740Z" fill="#fff" opacity=".2" filter="url(#b14)"/><path d="M440 640L520 646 655 772 600 782 520 720Z" fill="#000" opacity=".42" filter="url(#b6)"/><path d="M0 570L300 550 383 544 460 596 420 618 300 616 220 640 150 632 70 656 0 650Z" fill="#000" filter="url(#nzCliff)" opacity=".5"/><path d="M0 838L120 846 300 872 340 905 300 908 120 898 60 862 0 852Z" fill="#000" filter="url(#nzCliff)" opacity=".5"/><path d="M0 563.600L64 562 79 566 136 556.700 185 556.700 198 559 251 548 283 537.600 294 533.700 304.500 537 341 539.700 366 538 383 538.600" fill="none" stroke="#8c8c8c" stroke-width="5" opacity=".55" filter="url(#b1)"/></g><path d="M772 915L800 898 850 876 900 855 940 841 1000 825 1052 817V1000H772Z" fill="url(#rhillg)"/><path d="M800 905L900 862 1000 832 1052 826" fill="none" stroke="#a8a8a8" stroke-width="5" opacity=".6" filter="url(#b3)"/><path d="M772 915L800 898 850 876 900 855 940 841 1000 825 1052 817V1000H772Z" fill="#000" filter="url(#nzHill)" opacity=".7"/><path d="M0 960H1052V1080H0Z" fill="#545454"/><path d="M170 1018L230 1010 290 1022 292 1062 170 1060Z" fill="#666" opacity=".8" filter="url(#b3)"/><path d="M700 1010L900 1016 1052 1030V1060L700 1050Z" fill="#6a6a6a" opacity=".6" filter="url(#b6)"/><path d="M0 960H1052V1080H0Z" fill="#000" filter="url(#nzHill)" opacity=".8"/><path d="M0 960H1052V1080H0Z" fill="#000" filter="url(#nzMtnF)" opacity=".7"/><g filter="url(#b3)"><ellipse cx="455.6" cy="1034.6" rx="6.1" ry="5.4" fill="rgb(108,108,108)" opacity="0.39"/><ellipse cx="345.9" cy="993.9" rx="8.1" ry="4.1" fill="rgb(129,129,129)" opacity="0.43"/><ellipse cx="889.3" cy="1044.8" rx="9.8" ry="5.6" fill="rgb(118,118,118)" opacity="0.51"/><ellipse cx="512.6" cy="1032.0" rx="16.6" ry="10.4" fill="rgb(123,123,123)" opacity="0.46"/><ellipse cx="255.9" cy="1055.9" rx="6.2" ry="4.6" fill="rgb(105,105,105)" opacity="0.39"/><ellipse cx="819.7" cy="1026.9" rx="9.3" ry="4.7" fill="rgb(118,118,118)" opacity="0.37"/><ellipse cx="195.8" cy="997.0" rx="7.1" ry="3.9" fill="rgb(126,126,126)" opacity="0.47"/><ellipse cx="668.9" cy="1051.2" rx="9.2" ry="5.0" fill="rgb(115,115,115)" opacity="0.52"/><ellipse cx="311.7" cy="1021.8" rx="12.0" ry="7.3" fill="rgb(135,135,135)" opacity="0.57"/><ellipse cx="397.4" cy="1043.7" rx="6.3" ry="5.3" fill="rgb(110,110,110)" opacity="0.47"/><ellipse cx="788.2" cy="1026.3" rx="11.6" ry="7.2" fill="rgb(111,111,111)" opacity="0.39"/><ellipse cx="295.4" cy="993.9" rx="11.9" ry="7.1" fill="rgb(134,134,134)" opacity="0.33"/><ellipse cx="1046.8" cy="1021.7" rx="15.0" ry="10.1" fill="rgb(112,112,112)" opacity="0.41"/><ellipse cx="641.8" cy="1012.9" rx="11.3" ry="9.6" fill="rgb(127,127,127)" opacity="0.30"/><ellipse cx="918.1" cy="1005.6" rx="9.3" ry="6.8" fill="rgb(114,114,114)" opacity="0.54"/><ellipse cx="214.3" cy="1020.6" rx="9.6" ry="6.1" fill="rgb(105,105,105)" opacity="0.62"/><ellipse cx="768.4" cy="1030.0" rx="9.8" ry="6.8" fill="rgb(114,114,114)" opacity="0.43"/><ellipse cx="670.6" cy="1042.8" rx="9.1" ry="7.7" fill="rgb(131,131,131)" opacity="0.49"/><ellipse cx="442.8" cy="1051.3" rx="6.2" ry="3.8" fill="rgb(116,116,116)" opacity="0.44"/><ellipse cx="936.5" cy="1016.2" rx="12.3" ry="9.0" fill="rgb(134,134,134)" opacity="0.46"/><ellipse cx="826.6" cy="1008.3" rx="7.8" ry="6.2" fill="rgb(132,132,132)" opacity="0.58"/><ellipse cx="555.4" cy="1003.2" rx="13.3" ry="9.0" fill="rgb(135,135,135)" opacity="0.59"/><ellipse cx="224.5" cy="995.6" rx="16.0" ry="10.9" fill="rgb(105,105,105)" opacity="0.53"/><ellipse cx="319.8" cy="1060.6" rx="14.3" ry="9.2" fill="rgb(96,96,96)" opacity="0.47"/><ellipse cx="788.2" cy="999.3" rx="14.4" ry="10.9" fill="rgb(96,96,96)" opacity="0.64"/><ellipse cx="593.7" cy="990.3" rx="6.6" ry="5.6" fill="rgb(102,102,102)" opacity="0.52"/><ellipse cx="939.8" cy="1052.3" rx="16.6" ry="10.1" fill="rgb(116,116,116)" opacity="0.58"/><ellipse cx="866.6" cy="1041.1" rx="10.0" ry="6.1" fill="rgb(134,134,134)" opacity="0.57"/><ellipse cx="937.5" cy="1028.5" rx="9.2" ry="4.8" fill="rgb(114,114,114)" opacity="0.44"/><ellipse cx="667.1" cy="1036.5" rx="13.5" ry="9.9" fill="rgb(134,134,134)" opacity="0.32"/><ellipse cx="397.9" cy="1040.0" rx="9.7" ry="6.5" fill="rgb(115,115,115)" opacity="0.37"/><ellipse cx="812.3" cy="1025.4" rx="6.7" ry="5.8" fill="rgb(129,129,129)" opacity="0.46"/><ellipse cx="357.5" cy="1038.7" rx="12.1" ry="6.6" fill="rgb(114,114,114)" opacity="0.63"/><ellipse cx="877.1" cy="1058.9" rx="12.3" ry="8.8" fill="rgb(115,115,115)" opacity="0.47"/><ellipse cx="626.1" cy="1058.1" rx="14.1" ry="9.5" fill="rgb(112,112,112)" opacity="0.40"/><ellipse cx="823.2" cy="1001.7" rx="10.3" ry="5.5" fill="rgb(108,108,108)" opacity="0.49"/><ellipse cx="380.8" cy="1020.4" rx="14.3" ry="7.7" fill="rgb(104,104,104)" opacity="0.53"/><ellipse cx="636.4" cy="1003.8" rx="12.9" ry="7.6" fill="rgb(100,100,100)" opacity="0.37"/><ellipse cx="601.6" cy="1005.2" rx="12.9" ry="6.7" fill="rgb(107,107,107)" opacity="0.44"/><ellipse cx="892.8" cy="1046.2" rx="10.3" ry="7.4" fill="rgb(113,113,113)" opacity="0.39"/><ellipse cx="370.8" cy="1042.9" rx="11.3" ry="7.0" fill="rgb(108,108,108)" opacity="0.42"/><ellipse cx="856.0" cy="1032.4" rx="8.7" ry="4.9" fill="rgb(137,137,137)" opacity="0.58"/><ellipse cx="950.3" cy="1002.7" rx="12.0" ry="8.1" fill="rgb(123,123,123)" opacity="0.59"/><ellipse cx="943.4" cy="1026.6" rx="11.4" ry="10.1" fill="rgb(107,107,107)" opacity="0.36"/><ellipse cx="409.3" cy="1013.5" rx="9.7" ry="8.2" fill="rgb(115,115,115)" opacity="0.52"/><ellipse cx="321.5" cy="1059.1" rx="16.1" ry="8.3" fill="rgb(112,112,112)" opacity="0.30"/><ellipse cx="785.5" cy="1010.0" rx="12.4" ry="6.6" fill="rgb(130,130,130)" opacity="0.46"/><ellipse cx="627.1" cy="1058.0" rx="15.3" ry="7.8" fill="rgb(118,118,118)" opacity="0.62"/><ellipse cx="644.4" cy="994.0" rx="12.3" ry="10.7" fill="rgb(126,126,126)" opacity="0.51"/><ellipse cx="171.6" cy="1002.4" rx="15.5" ry="12.1" fill="rgb(100,100,100)" opacity="0.46"/><ellipse cx="872.4" cy="1043.3" rx="6.3" ry="3.7" fill="rgb(100,100,100)" opacity="0.34"/><ellipse cx="978.4" cy="995.8" rx="7.2" ry="4.5" fill="rgb(120,120,120)" opacity="0.59"/><ellipse cx="306.7" cy="1007.7" rx="7.3" ry="4.0" fill="rgb(97,97,97)" opacity="0.61"/><ellipse cx="1025.7" cy="1003.3" rx="10.7" ry="7.7" fill="rgb(100,100,100)" opacity="0.56"/><ellipse cx="851.7" cy="1060.7" rx="6.9" ry="5.6" fill="rgb(109,109,109)" opacity="0.52"/><ellipse cx="634.9" cy="1044.0" rx="7.8" ry="6.2" fill="rgb(135,135,135)" opacity="0.56"/><ellipse cx="663.0" cy="1002.0" rx="9.2" ry="5.9" fill="rgb(103,103,103)" opacity="0.46"/><ellipse cx="1018.9" cy="1012.9" rx="14.4" ry="10.1" fill="rgb(98,98,98)" opacity="0.48"/><ellipse cx="865.5" cy="1049.1" rx="8.4" ry="5.5" fill="rgb(135,135,135)" opacity="0.48"/><ellipse cx="985.1" cy="992.7" rx="8.1" ry="6.2" fill="rgb(119,119,119)" opacity="0.58"/><ellipse cx="234.8" cy="1032.8" rx="13.9" ry="8.9" fill="rgb(47,47,47)" opacity="0.49"/><ellipse cx="440.7" cy="1041.7" rx="13.9" ry="7.7" fill="rgb(52,52,52)" opacity="0.51"/><ellipse cx="375.1" cy="1000.3" rx="6.2" ry="5.1" fill="rgb(44,44,44)" opacity="0.54"/><ellipse cx="564.3" cy="1045.6" rx="6.7" ry="4.2" fill="rgb(30,30,30)" opacity="0.56"/><ellipse cx="948.8" cy="1009.4" rx="9.0" ry="5.8" fill="rgb(45,45,45)" opacity="0.49"/><ellipse cx="478.5" cy="1025.8" rx="7.5" ry="6.6" fill="rgb(48,48,48)" opacity="0.40"/><ellipse cx="570.0" cy="1053.0" rx="6.3" ry="4.0" fill="rgb(31,31,31)" opacity="0.41"/><ellipse cx="919.9" cy="1000.6" rx="6.5" ry="4.4" fill="rgb(31,31,31)" opacity="0.56"/><ellipse cx="646.9" cy="1029.8" rx="13.3" ry="8.7" fill="rgb(33,33,33)" opacity="0.54"/><ellipse cx="610.5" cy="1058.4" rx="6.6" ry="4.5" fill="rgb(45,45,45)" opacity="0.32"/><ellipse cx="438.5" cy="1012.3" rx="8.9" ry="8.0" fill="rgb(36,36,36)" opacity="0.53"/><ellipse cx="612.7" cy="1054.1" rx="13.7" ry="11.1" fill="rgb(43,43,43)" opacity="0.60"/><ellipse cx="181.7" cy="1036.2" rx="7.6" ry="5.6" fill="rgb(40,40,40)" opacity="0.36"/><ellipse cx="920.7" cy="1051.2" rx="7.7" ry="4.8" fill="rgb(44,44,44)" opacity="0.37"/><ellipse cx="693.4" cy="1048.3" rx="12.2" ry="8.7" fill="rgb(45,45,45)" opacity="0.57"/><ellipse cx="506.6" cy="997.4" rx="13.0" ry="9.8" fill="rgb(40,40,40)" opacity="0.51"/><ellipse cx="434.8" cy="1024.6" rx="7.4" ry="4.5" fill="rgb(51,51,51)" opacity="0.44"/><ellipse cx="962.4" cy="1027.1" rx="9.1" ry="7.2" fill="rgb(30,30,30)" opacity="0.41"/><ellipse cx="243.4" cy="1003.5" rx="10.5" ry="6.8" fill="rgb(31,31,31)" opacity="0.46"/><ellipse cx="361.5" cy="1061.0" rx="11.8" ry="9.3" fill="rgb(51,51,51)" opacity="0.48"/><ellipse cx="226.0" cy="997.7" rx="6.3" ry="3.2" fill="rgb(49,49,49)" opacity="0.57"/><ellipse cx="644.4" cy="1042.6" rx="12.9" ry="10.2" fill="rgb(48,48,48)" opacity="0.54"/><ellipse cx="636.1" cy="1003.7" rx="6.9" ry="4.2" fill="rgb(42,42,42)" opacity="0.32"/><ellipse cx="1017.3" cy="1050.5" rx="8.4" ry="7.0" fill="rgb(30,30,30)" opacity="0.49"/><ellipse cx="300.6" cy="1061.1" rx="11.4" ry="9.1" fill="rgb(47,47,47)" opacity="0.40"/><ellipse cx="921.4" cy="996.6" rx="11.4" ry="7.8" fill="rgb(32,32,32)" opacity="0.60"/><ellipse cx="385.5" cy="1040.4" rx="6.9" ry="5.7" fill="rgb(47,47,47)" opacity="0.43"/><ellipse cx="782.6" cy="1048.1" rx="12.3" ry="7.6" fill="rgb(43,43,43)" opacity="0.39"/><ellipse cx="936.6" cy="999.0" rx="12.0" ry="8.0" fill="rgb(33,33,33)" opacity="0.47"/><ellipse cx="626.6" cy="1009.4" rx="12.0" ry="7.4" fill="rgb(46,46,46)" opacity="0.52"/></g><path d="M0 904L0.0 904.3 3.3 899.3 6.7 904.0 10.0 897.1 13.3 904.5 16.7 897.7 20.0 904.7 23.3 900.7 26.7 904.4 30.0 900.8 33.3 903.6 36.7 900.4 40.0 905.0 43.3 898.0 46.7 903.7 50.0 899.9 53.3 905.0 56.7 896.5 60.0 903.8 63.6 896.9 67.1 903.4 70.7 894.7 74.2 904.2 77.8 895.8 81.3 904.2 84.9 900.7 88.4 906.0 92.0 900.0 95.6 905.8 99.1 901.2 102.7 905.7 106.2 898.5 109.8 905.5 113.3 899.4 116.9 906.1 120.4 902.9 124.0 906.9 127.2 899.4 130.5 907.8 133.8 902.4 137.0 907.8 140.2 902.1 143.5 909.3 146.8 900.5 150.0 909.6 153.2 904.7 156.5 910.9 159.8 903.5 163.0 910.3 166.2 902.8 169.5 910.6 172.8 901.8 176.0 912.5 179.3 906.0 182.7 912.4 186.0 908.2 189.3 913.2 192.7 909.4 196.0 913.5 199.3 905.1 202.7 913.4 206.0 904.8 209.3 914.4 212.7 906.4 216.0 914.6 219.3 907.6 222.7 916.0 226.0 906.4 229.3 915.9 232.7 909.2 236.0 916.4 239.6 912.6 243.1 918.0 246.7 909.8 250.2 917.6 253.8 909.7 257.3 919.3 260.9 913.5 264.4 919.9 268.0 916.9 271.6 920.2 275.1 916.9 278.7 922.5 282.2 918.6 285.8 922.5 289.3 919.2 292.9 924.7 296.4 918.5 300.0 924.9 303.3 921.3 306.5 926.5 309.8 919.0 313.1 927.2 316.4 918.0 319.6 927.0 322.9 922.2 326.2 928.7 329.5 922.4 332.7 927.9 336.0 919.3 339.3 928.8 342.5 925.1 345.8 930.1 349.1 925.4 352.4 930.3 355.6 923.9 358.9 931.4 362.2 928.4 365.5 932.4 368.7 926.7 372.0 933.4 375.3 923.9 378.7 934.4 382.0 927.9 385.3 934.4 388.7 928.0 392.0 937.1 395.3 927.7 398.7 938.3 402.0 929.1 405.3 938.6 408.7 933.4 412.0 940.3 415.3 936.4 418.7 940.3 422.0 937.8 425.3 941.7 428.7 938.1 432.0 942.6 435.3 938.4 438.7 944.0 442.0 941.7 445.3 945.6 448.7 942.3 452.0 947.7 455.4 944.0 458.8 947.7 462.2 941.6 465.5 949.5 468.9 945.3 472.3 950.4 475.7 946.0 479.1 953.5 482.5 944.2 485.8 953.9 489.2 948.1 492.6 954.5 496.0 951.9 499.4 956.2 502.8 951.7 506.2 957.4 509.5 949.9 512.9 960.4 516.3 956.5 519.7 960.1 523.1 954.6 526.5 961.3 529.8 955.9 533.2 964.6 536.6 957.4 540.0 965.4 543.3 956.7 546.7 966.3 550.0 962.1 553.3 968.7 556.7 964.3 560.0 970.2 563.3 963.5 566.7 970.7 570.0 966.4 573.3 973.7 576.7 964.8 580.0 974.9 583.3 966.1 586.7 976.4 590.0 967.8 593.3 977.5 596.7 973.2 600.0 978.1 603.3 974.2 606.7 980.6 610.0 978.3 613.3 983.4 616.7 978.8 620.0 984.9 623.3 976.3 626.7 988.0 630.0 978.4 633.3 988.7 636.7 980.3 640.0 990.0L640 1000 600 997 560 994 520 990 480 987 440 984 400 981 360 978 330 975 300 972 260 970 220 968 185 970 170 985 164 1012 158 1040 120 1043 0 1045Z" fill="#2a2a2a"/><path d="M628 990L628.0 990.7 634.0 970.5 640.0 963.7 643.2 954.1 646.5 954.0 649.8 946.0 653.0 944.2 656.4 934.7 659.8 943.4 663.2 935.1 666.7 941.1 670.1 936.7 673.5 939.4 676.9 930.5 680.3 937.0 683.8 928.5 687.2 935.1 690.6 929.9 694.0 934.8 697.3 926.9 700.7 933.9 704.0 925.7 707.3 933.2 710.7 926.3 714.0 931.6 717.3 927.5 720.7 931.8 724.0 923.1 727.3 929.8 730.7 924.1 734.0 929.4 737.5 924.6 741.0 930.3 744.5 924.2 748.0 930.1 751.5 924.4 755.0 928.1 758.5 919.6 762.0 928.7 765.5 922.5 769.0 928.2 772.5 924.5 776.0 927.2 779.4 918.9 782.8 927.7 786.1 921.4 789.5 929.8 792.9 922.0 796.2 928.5 799.6 924.9 803.0 930.1 806.4 926.2 809.8 929.7 813.1 927.1 816.5 931.8 819.9 924.5 823.2 931.3 826.6 925.5 830.0 931.2 833.4 924.6 836.8 931.8 840.1 925.5 843.5 933.9 846.9 925.8 850.2 933.6 853.6 929.9 857.0 933.3 860.3 927.1 863.6 936.0 866.9 930.3 870.2 935.2 873.6 926.5 876.9 937.9 880.2 929.4 883.5 938.2 886.8 933.5 890.1 938.7 893.4 935.7 896.8 940.2 900.1 932.6 903.4 940.2 906.7 933.0 910.0 942.7 913.6 937.1 917.2 943.7 920.9 937.3 924.5 946.5 928.1 940.3 931.8 946.3 935.4 940.9 939.0 948.7 942.4 941.2 945.8 950.2 949.2 945.3 952.6 952.2 955.9 947.1 959.3 954.6 962.7 951.1 966.1 956.7 969.5 952.8 972.9 958.5 976.3 955.1 979.7 959.7 983.1 951.8 986.4 960.9 989.8 954.2 993.2 963.1 996.6 955.8 1000.0 965.9 1003.3 962.1 1006.6 968.9 1009.9 965.2 1013.2 973.1 1016.5 966.4 1019.8 976.9 1023.1 971.9 1026.4 981.3 1029.7 974.9 1033.0 985.0L1036 1000 1030 1012 1000 1012 960 1008 920 1004 880 1001 840 998 800 995 760 992 720 990 680 990 650 992Z" fill="#2c2c2c"/><path d="M0 904L0.0 904.3 3.3 899.3 6.7 904.0 10.0 897.1 13.3 904.5 16.7 897.7 20.0 904.7 23.3 900.7 26.7 904.4 30.0 900.8 33.3 903.6 36.7 900.4 40.0 905.0 43.3 898.0 46.7 903.7 50.0 899.9 53.3 905.0 56.7 896.5 60.0 903.8 63.6 896.9 67.1 903.4 70.7 894.7 74.2 904.2 77.8 895.8 81.3 904.2 84.9 900.7 88.4 906.0 92.0 900.0 95.6 905.8 99.1 901.2 102.7 905.7 106.2 898.5 109.8 905.5 113.3 899.4 116.9 906.1 120.4 902.9 124.0 906.9 127.2 899.4 130.5 907.8 133.8 902.4 137.0 907.8 140.2 902.1 143.5 909.3 146.8 900.5 150.0 909.6 153.2 904.7 156.5 910.9 159.8 903.5 163.0 910.3 166.2 902.8 169.5 910.6 172.8 901.8 176.0 912.5 179.3 906.0 182.7 912.4 186.0 908.2 189.3 913.2 192.7 909.4 196.0 913.5 199.3 905.1 202.7 913.4 206.0 904.8 209.3 914.4 212.7 906.4 216.0 914.6 219.3 907.6 222.7 916.0 226.0 906.4 229.3 915.9 232.7 909.2 236.0 916.4 239.6 912.6 243.1 918.0 246.7 909.8 250.2 917.6 253.8 909.7 257.3 919.3 260.9 913.5 264.4 919.9 268.0 916.9 271.6 920.2 275.1 916.9 278.7 922.5 282.2 918.6 285.8 922.5 289.3 919.2 292.9 924.7 296.4 918.5 300.0 924.9 303.3 921.3 306.5 926.5 309.8 919.0 313.1 927.2 316.4 918.0 319.6 927.0 322.9 922.2 326.2 928.7 329.5 922.4 332.7 927.9 336.0 919.3 339.3 928.8 342.5 925.1 345.8 930.1 349.1 925.4 352.4 930.3 355.6 923.9 358.9 931.4 362.2 928.4 365.5 932.4 368.7 926.7 372.0 933.4 375.3 923.9 378.7 934.4 382.0 927.9 385.3 934.4 388.7 928.0 392.0 937.1 395.3 927.7 398.7 938.3 402.0 929.1 405.3 938.6 408.7 933.4 412.0 940.3 415.3 936.4 418.7 940.3 422.0 937.8 425.3 941.7 428.7 938.1 432.0 942.6 435.3 938.4 438.7 944.0 442.0 941.7 445.3 945.6 448.7 942.3 452.0 947.7 455.4 944.0 458.8 947.7 462.2 941.6 465.5 949.5 468.9 945.3 472.3 950.4 475.7 946.0 479.1 953.5 482.5 944.2 485.8 953.9 489.2 948.1 492.6 954.5 496.0 951.9 499.4 956.2 502.8 951.7 506.2 957.4 509.5 949.9 512.9 960.4 516.3 956.5 519.7 960.1 523.1 954.6 526.5 961.3 529.8 955.9 533.2 964.6 536.6 957.4 540.0 965.4 543.3 956.7 546.7 966.3 550.0 962.1 553.3 968.7 556.7 964.3 560.0 970.2 563.3 963.5 566.7 970.7 570.0 966.4 573.3 973.7 576.7 964.8 580.0 974.9 583.3 966.1 586.7 976.4 590.0 967.8 593.3 977.5 596.7 973.2 600.0 978.1 603.3 974.2 606.7 980.6 610.0 978.3 613.3 983.4 616.7 978.8 620.0 984.9 623.3 976.3 626.7 988.0 630.0 978.4 633.3 988.7 636.7 980.3 640.0 990.0L640 1000 600 997 560 994 520 990 480 987 440 984 400 981 360 978 330 975 300 972 260 970 220 968 185 970 170 985 164 1012 158 1040 120 1043 0 1045Z" fill="#000" filter="url(#nzForest)" opacity=".8"/><path d="M628 990L628.0 990.7 634.0 970.5 640.0 963.7 643.2 954.1 646.5 954.0 649.8 946.0 653.0 944.2 656.4 934.7 659.8 943.4 663.2 935.1 666.7 941.1 670.1 936.7 673.5 939.4 676.9 930.5 680.3 937.0 683.8 928.5 687.2 935.1 690.6 929.9 694.0 934.8 697.3 926.9 700.7 933.9 704.0 925.7 707.3 933.2 710.7 926.3 714.0 931.6 717.3 927.5 720.7 931.8 724.0 923.1 727.3 929.8 730.7 924.1 734.0 929.4 737.5 924.6 741.0 930.3 744.5 924.2 748.0 930.1 751.5 924.4 755.0 928.1 758.5 919.6 762.0 928.7 765.5 922.5 769.0 928.2 772.5 924.5 776.0 927.2 779.4 918.9 782.8 927.7 786.1 921.4 789.5 929.8 792.9 922.0 796.2 928.5 799.6 924.9 803.0 930.1 806.4 926.2 809.8 929.7 813.1 927.1 816.5 931.8 819.9 924.5 823.2 931.3 826.6 925.5 830.0 931.2 833.4 924.6 836.8 931.8 840.1 925.5 843.5 933.9 846.9 925.8 850.2 933.6 853.6 929.9 857.0 933.3 860.3 927.1 863.6 936.0 866.9 930.3 870.2 935.2 873.6 926.5 876.9 937.9 880.2 929.4 883.5 938.2 886.8 933.5 890.1 938.7 893.4 935.7 896.8 940.2 900.1 932.6 903.4 940.2 906.7 933.0 910.0 942.7 913.6 937.1 917.2 943.7 920.9 937.3 924.5 946.5 928.1 940.3 931.8 946.3 935.4 940.9 939.0 948.7 942.4 941.2 945.8 950.2 949.2 945.3 952.6 952.2 955.9 947.1 959.3 954.6 962.7 951.1 966.1 956.7 969.5 952.8 972.9 958.5 976.3 955.1 979.7 959.7 983.1 951.8 986.4 960.9 989.8 954.2 993.2 963.1 996.6 955.8 1000.0 965.9 1003.3 962.1 1006.6 968.9 1009.9 965.2 1013.2 973.1 1016.5 966.4 1019.8 976.9 1023.1 971.9 1026.4 981.3 1029.7 974.9 1033.0 985.0L1036 1000 1030 1012 1000 1012 960 1008 920 1004 880 1001 840 998 800 995 760 992 720 990 680 990 650 992Z" fill="#000" filter="url(#nzForest)" opacity=".8"/><path d="M40 978L52 968 66 972 80 966 96 972 112 975 114 1000 112 1036 40 1038Z" fill="#666" filter="url(#b3)"/><path d="M40 978L52 968 66 972 80 966 96 972 112 975 114 1000 112 1036 40 1038Z" fill="#000" filter="url(#nzForest)" opacity=".9"/><defs><linearGradient id="grassg" x1="0" y1="0" x2="1052" y2="0" gradientUnits="userSpaceOnUse"><stop offset="0" stop-color="#9c9c9c"/><stop offset="0.22" stop-color="#989898"/><stop offset="0.4" stop-color="#8c8c8c"/><stop offset="0.55" stop-color="#9e9e9e"/><stop offset="0.7" stop-color="#bebebe"/><stop offset="0.84" stop-color="#d2d2d2"/><stop offset="1" stop-color="#cecece"/></linearGradient><linearGradient id="waterg" x1="0" y1="1135" x2="0" y2="1460" gradientUnits="userSpaceOnUse"><stop offset="0" stop-color="#989898"/><stop offset="0.03" stop-color="#a6a6a6"/><stop offset="0.09" stop-color="#b2b2b2"/><stop offset="0.18" stop-color="#bcbcbc"/><stop offset="0.32" stop-color="#bcbcbc"/><stop offset="0.42" stop-color="#b4b4b4"/><stop offset="0.47" stop-color="#a8a8a8"/><stop offset="0.51" stop-color="#969696"/><stop offset="0.58" stop-color="#909090"/><stop offset="0.66" stop-color="#808080"/><stop offset="0.72" stop-color="#767676"/><stop offset="0.8" stop-color="#868686"/><stop offset="1" stop-color="#767676"/></linearGradient><linearGradient id="wdarkR" x1="0" y1="0" x2="1052" y2="0" gradientUnits="userSpaceOnUse"><stop offset="0" stop-color="#2a2a2a" stop-opacity="0"/><stop offset="0.4" stop-color="#2a2a2a" stop-opacity="0.12"/><stop offset="0.68" stop-color="#2a2a2a" stop-opacity="0.55"/><stop offset="0.85" stop-color="#262626" stop-opacity="0.85"/><stop offset="1" stop-color="#242424" stop-opacity="0.92"/></linearGradient><linearGradient id="wdarkV" x1="0" y1="1276" x2="0" y2="1460" gradientUnits="userSpaceOnUse"><stop offset="0" stop-color="#fff" stop-opacity="0"/><stop offset="0.12" stop-color="#fff" stop-opacity="1"/><stop offset="1" stop-color="#fff" stop-opacity="1"/></linearGradient><linearGradient id="rockg" x1="0" y1="1360" x2="0" y2="1575" gradientUnits="userSpaceOnUse"><stop offset="0" stop-color="#484848"/><stop offset="0.25" stop-color="#545454"/><stop offset="0.5" stop-color="#707070"/><stop offset="0.75" stop-color="#8c8c8c"/><stop offset="1" stop-color="#969696"/></linearGradient><linearGradient id="rockshade" x1="0" y1="1360" x2="0" y2="1575" gradientUnits="userSpaceOnUse"><stop offset="0" stop-color="#000" stop-opacity="0.4"/><stop offset="0.3" stop-color="#000" stop-opacity="0.26"/><stop offset="0.5" stop-color="#000" stop-opacity="0.06"/><stop offset="1" stop-color="#000" stop-opacity="0"/></linearGradient><linearGradient id="brockg" x1="700" y1="1305" x2="850" y2="1415" gradientUnits="userSpaceOnUse"><stop offset="0" stop-color="#a8a8a8"/><stop offset="0.3" stop-color="#868686"/><stop offset="0.6" stop-color="#555"/><stop offset="1" stop-color="#2f2f2f"/></linearGradient><mask id="wdm" maskUnits="userSpaceOnUse" x="0" y="1130" width="1052" height="340"><rect x="0" y="1130" width="1052" height="340" fill="url(#wdarkV)"/></mask><clipPath id="cGrass"><path d="M0 1046L80 1043 160 1041 240 1052 300 1060 360 1062 426 1052 490 1044 560 1040 640 1042 700 1048 770 1066 840 1072 900 1074 980 1076 1052 1076V1136L750 1146 500 1153 250 1161 0 1165Z"/></clipPath><clipPath id="cWater"><path d="M0 1162L250 1158 500 1150 750 1143 1052 1133V1460H0Z"/></clipPath><clipPath id="cRocks"><path d="M0 1394L60 1392 130 1385 192 1375 205 1364 228 1362 240 1372 300 1378 350 1372 383 1367 420 1374 480 1372 511 1366 522 1358 548 1357 562 1375 620 1384 650 1378 681 1384 700 1390 852 1412 900 1425 960 1436 1052 1443V1575H0Z"/></clipPath></defs><path d="M0 1046L80 1043 160 1041 240 1052 300 1060 360 1062 426 1052 490 1044 560 1040 640 1042 700 1048 770 1066 840 1072 900 1074 980 1076 1052 1076V1136L750 1146 500 1153 250 1161 0 1165Z" fill="url(#grassg)"/><g clip-path="url(#cGrass)"><path d="M426 1052L490 1044 560 1040 640 1042 700 1048 770 1066 700 1066 560 1062 440 1062Z" fill="#b4b4b4" opacity=".9" filter="url(#b1)"/><path d="M440 1066L560 1066 700 1070 790 1072 700 1080 540 1078Z" fill="#484848" opacity=".8" filter="url(#b1)"/><path d="M250 1092L400 1085 560 1095 560 1140 400 1148 260 1140Z" fill="#5e5e5e" opacity=".5" filter="url(#b14)"/><path d="M0 1046L240 1052 300 1062 200 1072 0 1074Z" fill="#6a6a6a" opacity=".6" filter="url(#b3)"/><path d="M820 1076L1052 1078V1098L820 1104Z" fill="#6c6c6c" opacity=".5" filter="url(#b3)"/><rect x="0" y="1030" width="1052" height="140" fill="#000" filter="url(#nzGrass)"/><rect x="0" y="1030" width="1052" height="140" fill="#000" filter="url(#nzMtnF)" opacity=".6"/></g><path d="M299 1050L306 1042 313 1049 338 1049 345 1042 352 1050V1053H299Z" fill="#303030"/><rect x="300" y="1051" width="51" height="14" fill="#f2f2f2"/><path d="M302 1051L306 1045 311 1051ZM340 1051L345 1045 350 1051Z" fill="#f2f2f2"/><rect x="301" y="1038" width="3.500" height="9" fill="#eee"/><rect x="346.500" y="1038" width="3.500" height="9" fill="#eee"/><path d="M307 1055h4v6h-4zM316 1055h4v6h-4zM324 1055h3v9h-3zM331 1055h4v6h-4zM341 1055h4v6h-4z" fill="#555"/><path d="M292 1066H360" stroke="#dcdcdc" stroke-width="2"/><path d="M0 1162L250 1158 500 1150 750 1143 1052 1133V1460H0Z" fill="url(#waterg)"/><g clip-path="url(#cWater)"><g mask="url(#wdm)"><rect x="0" y="1130" width="1052" height="340" fill="url(#wdarkR)"/><path d="M0 1342L200 1340 520 1346 640 1356 520 1368 200 1364 0 1368Z" fill="#3e3e3e" opacity=".5" filter="url(#b6)"/><path d="M10 1302L300 1296 640 1300 640 1330 300 1328 10 1336Z" fill="#b4b4b4" opacity=".5" filter="url(#b6)"/><path d="M860 1272L1052 1250V1276L890 1296Z" fill="#b0b0b0" opacity=".5" filter="url(#b6)"/><rect x="0" y="1280" width="1052" height="182" fill="#000" filter="url(#nzWater)"/></g><path d="M0 1164L250 1160 500 1152 750 1145 1052 1135" fill="none" stroke="#3f3f3f" stroke-width="3.500" opacity=".75" filter="url(#b1)"/></g><path d="M0 1394L60 1392 130 1385 192 1375 205 1364 228 1362 240 1372 300 1378 350 1372 383 1367 420 1374 480 1372 511 1366 522 1358 548 1357 562 1375 620 1384 650 1378 681 1384 700 1390 852 1412 900 1425 960 1436 1052 1443V1575H0Z" fill="url(#rockg)"/><g clip-path="url(#cRocks)"><path d="M0 1490L300 1470 520 1500 520 1575H0Z" fill="#a6a6a6" opacity=".5" filter="url(#b14)"/><path d="M820 1420L1052 1445V1575H860Z" fill="#3e3e3e" opacity=".45" filter="url(#b14)"/><rect x="0" y="1350" width="1052" height="225" fill="#000" filter="url(#nzRock)"/><rect x="0" y="1350" width="1052" height="225" fill="#000" filter="url(#nzRockF)" opacity=".85"/><rect x="0" y="1350" width="1052" height="225" fill="url(#rockshade)"/><g filter="url(#b1)"><ellipse cx="655.3" cy="1528.5" rx="8.6" ry="6.7" fill="rgb(57,57,57)" opacity="0.51" transform="rotate(12 655.3 1528.5)"/><ellipse cx="489.8" cy="1564.8" rx="8.7" ry="6.6" fill="rgb(54,54,54)" opacity="0.85" transform="rotate(-19 489.8 1564.8)"/><ellipse cx="400.6" cy="1413.4" rx="2.8" ry="2.0" fill="rgb(35,35,35)" opacity="0.87" transform="rotate(-5 400.6 1413.4)"/><ellipse cx="805.5" cy="1423.7" rx="5.2" ry="2.6" fill="rgb(32,32,32)" opacity="0.55" transform="rotate(6 805.5 1423.7)"/><ellipse cx="1022.9" cy="1396.0" rx="4.2" ry="3.3" fill="rgb(34,34,34)" opacity="0.62" transform="rotate(-17 1022.9 1396.0)"/><ellipse cx="1011.5" cy="1492.1" rx="6.7" ry="3.5" fill="rgb(36,36,36)" opacity="0.89" transform="rotate(22 1011.5 1492.1)"/><ellipse cx="940.2" cy="1448.8" rx="4.0" ry="2.0" fill="rgb(28,28,28)" opacity="0.63" transform="rotate(-18 940.2 1448.8)"/><ellipse cx="859.9" cy="1500.5" rx="6.5" ry="4.5" fill="rgb(46,46,46)" opacity="0.83" transform="rotate(-22 859.9 1500.5)"/><ellipse cx="505.7" cy="1451.8" rx="4.6" ry="3.2" fill="rgb(25,25,25)" opacity="0.88" transform="rotate(-22 505.7 1451.8)"/><ellipse cx="376.2" cy="1467.8" rx="5.4" ry="3.2" fill="rgb(24,24,24)" opacity="0.68" transform="rotate(-6 376.2 1467.8)"/><ellipse cx="744.6" cy="1507.3" rx="8.9" ry="4.4" fill="rgb(53,53,53)" opacity="0.64" transform="rotate(-13 744.6 1507.3)"/><ellipse cx="373.2" cy="1489.4" rx="7.2" ry="3.5" fill="rgb(47,47,47)" opacity="0.84" transform="rotate(12 373.2 1489.4)"/><ellipse cx="38.5" cy="1565.2" rx="4.5" ry="2.5" fill="rgb(33,33,33)" opacity="0.64" transform="rotate(6 38.5 1565.2)"/><ellipse cx="972.3" cy="1493.1" rx="4.7" ry="2.6" fill="rgb(29,29,29)" opacity="0.75" transform="rotate(-16 972.3 1493.1)"/><ellipse cx="758.6" cy="1450.7" rx="4.6" ry="3.2" fill="rgb(62,62,62)" opacity="0.71" transform="rotate(-21 758.6 1450.7)"/><ellipse cx="427.0" cy="1437.7" rx="4.8" ry="3.5" fill="rgb(50,50,50)" opacity="0.56" transform="rotate(-2 427.0 1437.7)"/><ellipse cx="1030.0" cy="1509.9" rx="8.0" ry="4.6" fill="rgb(60,60,60)" opacity="0.88" transform="rotate(-15 1030.0 1509.9)"/><ellipse cx="663.2" cy="1536.8" rx="4.2" ry="2.5" fill="rgb(50,50,50)" opacity="0.62" transform="rotate(-18 663.2 1536.8)"/><ellipse cx="476.7" cy="1574.9" rx="10.5" ry="8.3" fill="rgb(55,55,55)" opacity="0.78" transform="rotate(-2 476.7 1574.9)"/><ellipse cx="334.2" cy="1444.3" rx="4.4" ry="3.4" fill="rgb(58,58,58)" opacity="0.88" transform="rotate(-19 334.2 1444.3)"/><ellipse cx="659.6" cy="1484.9" rx="4.7" ry="2.2" fill="rgb(59,59,59)" opacity="0.85" transform="rotate(-11 659.6 1484.9)"/><ellipse cx="380.1" cy="1536.5" rx="8.7" ry="6.0" fill="rgb(43,43,43)" opacity="0.65" transform="rotate(8 380.1 1536.5)"/><ellipse cx="741.1" cy="1445.6" rx="4.5" ry="3.2" fill="rgb(42,42,42)" opacity="0.88" transform="rotate(10 741.1 1445.6)"/><ellipse cx="357.8" cy="1427.2" rx="5.5" ry="3.4" fill="rgb(44,44,44)" opacity="0.77" transform="rotate(14 357.8 1427.2)"/><ellipse cx="487.0" cy="1542.0" rx="8.0" ry="5.8" fill="rgb(46,46,46)" opacity="0.80" transform="rotate(-8 487.0 1542.0)"/><ellipse cx="871.3" cy="1458.0" rx="6.5" ry="4.9" fill="rgb(47,47,47)" opacity="0.88" transform="rotate(9 871.3 1458.0)"/><ellipse cx="545.1" cy="1490.3" rx="3.8" ry="2.8" fill="rgb(54,54,54)" opacity="0.61" transform="rotate(22 545.1 1490.3)"/><ellipse cx="82.9" cy="1515.8" rx="5.8" ry="3.9" fill="rgb(57,57,57)" opacity="0.77" transform="rotate(22 82.9 1515.8)"/><ellipse cx="442.7" cy="1507.3" rx="7.8" ry="5.2" fill="rgb(25,25,25)" opacity="0.58" transform="rotate(11 442.7 1507.3)"/><ellipse cx="616.9" cy="1507.3" rx="4.2" ry="3.0" fill="rgb(26,26,26)" opacity="0.89" transform="rotate(-16 616.9 1507.3)"/><ellipse cx="1030.7" cy="1424.8" rx="5.6" ry="2.8" fill="rgb(54,54,54)" opacity="0.58" transform="rotate(23 1030.7 1424.8)"/><ellipse cx="37.5" cy="1478.8" rx="4.7" ry="3.2" fill="rgb(39,39,39)" opacity="0.79" transform="rotate(5 37.5 1478.8)"/><ellipse cx="393.5" cy="1458.1" rx="7.1" ry="5.3" fill="rgb(59,59,59)" opacity="0.65" transform="rotate(18 393.5 1458.1)"/><ellipse cx="37.9" cy="1505.4" rx="3.6" ry="2.3" fill="rgb(61,61,61)" opacity="0.62" transform="rotate(-8 37.9 1505.4)"/><ellipse cx="369.9" cy="1418.2" rx="3.5" ry="2.3" fill="rgb(53,53,53)" opacity="0.56" transform="rotate(2 369.9 1418.2)"/><ellipse cx="626.9" cy="1496.5" rx="8.5" ry="6.7" fill="rgb(46,46,46)" opacity="0.83" transform="rotate(5 626.9 1496.5)"/><ellipse cx="696.1" cy="1463.7" rx="4.1" ry="3.2" fill="rgb(44,44,44)" opacity="0.75" transform="rotate(2 696.1 1463.7)"/><ellipse cx="937.6" cy="1462.7" rx="4.7" ry="2.5" fill="rgb(48,48,48)" opacity="0.65" transform="rotate(-10 937.6 1462.7)"/><ellipse cx="899.4" cy="1423.6" rx="4.4" ry="3.1" fill="rgb(40,40,40)" opacity="0.67" transform="rotate(-10 899.4 1423.6)"/><ellipse cx="335.7" cy="1572.2" rx="7.7" ry="4.2" fill="rgb(31,31,31)" opacity="0.76" transform="rotate(-1 335.7 1572.2)"/><ellipse cx="1010.8" cy="1439.2" rx="2.4" ry="1.2" fill="rgb(54,54,54)" opacity="0.71" transform="rotate(-5 1010.8 1439.2)"/><ellipse cx="288.0" cy="1563.3" rx="9.6" ry="5.2" fill="rgb(33,33,33)" opacity="0.79" transform="rotate(-12 288.0 1563.3)"/><ellipse cx="300.6" cy="1483.6" rx="8.2" ry="5.2" fill="rgb(31,31,31)" opacity="0.51" transform="rotate(18 300.6 1483.6)"/><ellipse cx="132.6" cy="1445.8" rx="5.5" ry="3.7" fill="rgb(25,25,25)" opacity="0.69" transform="rotate(12 132.6 1445.8)"/><ellipse cx="379.8" cy="1529.1" rx="7.3" ry="3.4" fill="rgb(53,53,53)" opacity="0.77" transform="rotate(-12 379.8 1529.1)"/><ellipse cx="113.2" cy="1518.7" rx="4.4" ry="2.7" fill="rgb(62,62,62)" opacity="0.73" transform="rotate(15 113.2 1518.7)"/><ellipse cx="745.0" cy="1508.8" rx="6.0" ry="4.6" fill="rgb(49,49,49)" opacity="0.77" transform="rotate(-6 745.0 1508.8)"/><ellipse cx="757.0" cy="1556.8" rx="7.1" ry="5.1" fill="rgb(24,24,24)" opacity="0.78" transform="rotate(-10 757.0 1556.8)"/><ellipse cx="455.3" cy="1446.5" rx="5.9" ry="4.5" fill="rgb(54,54,54)" opacity="0.78" transform="rotate(-18 455.3 1446.5)"/><ellipse cx="934.9" cy="1570.1" rx="8.0" ry="4.8" fill="rgb(27,27,27)" opacity="0.53" transform="rotate(2 934.9 1570.1)"/><ellipse cx="242.0" cy="1542.5" rx="9.0" ry="6.2" fill="rgb(51,51,51)" opacity="0.89" transform="rotate(-24 242.0 1542.5)"/><ellipse cx="1050.2" cy="1521.2" rx="3.5" ry="2.6" fill="rgb(31,31,31)" opacity="0.78" transform="rotate(-14 1050.2 1521.2)"/><ellipse cx="141.6" cy="1447.6" rx="6.5" ry="3.3" fill="rgb(50,50,50)" opacity="0.82" transform="rotate(6 141.6 1447.6)"/><ellipse cx="70.7" cy="1433.4" rx="4.5" ry="3.1" fill="rgb(41,41,41)" opacity="0.52" transform="rotate(12 70.7 1433.4)"/><ellipse cx="605.2" cy="1528.6" rx="9.2" ry="4.5" fill="rgb(44,44,44)" opacity="0.77" transform="rotate(-3 605.2 1528.6)"/><ellipse cx="514.9" cy="1458.6" rx="5.7" ry="4.4" fill="rgb(42,42,42)" opacity="0.56" transform="rotate(-18 514.9 1458.6)"/><ellipse cx="664.2" cy="1486.1" rx="7.9" ry="5.1" fill="rgb(40,40,40)" opacity="0.53" transform="rotate(6 664.2 1486.1)"/><ellipse cx="247.9" cy="1544.9" rx="5.5" ry="4.4" fill="rgb(47,47,47)" opacity="0.68" transform="rotate(15 247.9 1544.9)"/><ellipse cx="409.1" cy="1418.6" rx="2.0" ry="1.1" fill="rgb(26,26,26)" opacity="0.54" transform="rotate(4 409.1 1418.6)"/><ellipse cx="131.3" cy="1501.9" rx="4.4" ry="3.3" fill="rgb(44,44,44)" opacity="0.54" transform="rotate(-1 131.3 1501.9)"/><ellipse cx="558.3" cy="1492.6" rx="5.1" ry="3.8" fill="rgb(51,51,51)" opacity="0.77" transform="rotate(22 558.3 1492.6)"/><ellipse cx="234.7" cy="1415.9" rx="5.6" ry="3.8" fill="rgb(32,32,32)" opacity="0.78" transform="rotate(16 234.7 1415.9)"/><ellipse cx="395.4" cy="1545.4" rx="5.6" ry="4.3" fill="rgb(48,48,48)" opacity="0.65" transform="rotate(10 395.4 1545.4)"/><ellipse cx="760.3" cy="1459.5" rx="3.9" ry="2.6" fill="rgb(47,47,47)" opacity="0.71" transform="rotate(23 760.3 1459.5)"/><ellipse cx="623.4" cy="1498.2" rx="7.3" ry="4.3" fill="rgb(26,26,26)" opacity="0.57" transform="rotate(-20 623.4 1498.2)"/><ellipse cx="205.8" cy="1483.2" rx="7.9" ry="5.4" fill="rgb(51,51,51)" opacity="0.69" transform="rotate(-8 205.8 1483.2)"/><ellipse cx="936.0" cy="1506.5" rx="5.7" ry="3.5" fill="rgb(33,33,33)" opacity="0.76" transform="rotate(-20 936.0 1506.5)"/><ellipse cx="74.9" cy="1551.4" rx="9.9" ry="6.1" fill="rgb(31,31,31)" opacity="0.61" transform="rotate(3 74.9 1551.4)"/><ellipse cx="169.9" cy="1446.7" rx="3.4" ry="2.1" fill="rgb(47,47,47)" opacity="0.63" transform="rotate(-23 169.9 1446.7)"/><ellipse cx="62.0" cy="1398.9" rx="3.3" ry="2.4" fill="rgb(44,44,44)" opacity="0.62" transform="rotate(-17 62.0 1398.9)"/><ellipse cx="709.5" cy="1526.3" rx="4.4" ry="2.3" fill="rgb(38,38,38)" opacity="0.76" transform="rotate(-24 709.5 1526.3)"/><ellipse cx="649.7" cy="1559.1" rx="8.9" ry="6.1" fill="rgb(47,47,47)" opacity="0.61" transform="rotate(-16 649.7 1559.1)"/><ellipse cx="770.4" cy="1524.2" rx="4.3" ry="2.3" fill="rgb(26,26,26)" opacity="0.76" transform="rotate(9 770.4 1524.2)"/><ellipse cx="453.0" cy="1570.6" rx="3.9" ry="1.8" fill="rgb(50,50,50)" opacity="0.57" transform="rotate(14 453.0 1570.6)"/><ellipse cx="35.0" cy="1545.4" rx="9.4" ry="6.1" fill="rgb(28,28,28)" opacity="0.59" transform="rotate(22 35.0 1545.4)"/><ellipse cx="845.0" cy="1411.6" rx="3.6" ry="2.5" fill="rgb(55,55,55)" opacity="0.66" transform="rotate(7 845.0 1411.6)"/><ellipse cx="63.3" cy="1441.0" rx="4.0" ry="2.2" fill="rgb(26,26,26)" opacity="0.88" transform="rotate(-22 63.3 1441.0)"/><ellipse cx="204.6" cy="1520.2" rx="7.3" ry="3.8" fill="rgb(44,44,44)" opacity="0.82" transform="rotate(-13 204.6 1520.2)"/><ellipse cx="91.3" cy="1572.3" rx="5.1" ry="2.4" fill="rgb(63,63,63)" opacity="0.51" transform="rotate(12 91.3 1572.3)"/><ellipse cx="567.7" cy="1482.6" rx="5.9" ry="3.4" fill="rgb(24,24,24)" opacity="0.87" transform="rotate(6 567.7 1482.6)"/><ellipse cx="323.6" cy="1475.8" rx="7.1" ry="3.7" fill="rgb(43,43,43)" opacity="0.69" transform="rotate(-19 323.6 1475.8)"/><ellipse cx="820.5" cy="1442.4" rx="4.0" ry="2.0" fill="rgb(54,54,54)" opacity="0.60" transform="rotate(2 820.5 1442.4)"/><ellipse cx="88.7" cy="1472.2" rx="5.6" ry="3.0" fill="rgb(39,39,39)" opacity="0.52" transform="rotate(-22 88.7 1472.2)"/><ellipse cx="210.2" cy="1446.5" rx="4.0" ry="1.9" fill="rgb(44,44,44)" opacity="0.65" transform="rotate(-4 210.2 1446.5)"/><ellipse cx="809.3" cy="1395.0" rx="2.6" ry="2.0" fill="rgb(25,25,25)" opacity="0.68" transform="rotate(-18 809.3 1395.0)"/><ellipse cx="859.3" cy="1513.0" rx="9.1" ry="6.4" fill="rgb(41,41,41)" opacity="0.54" transform="rotate(10 859.3 1513.0)"/><ellipse cx="847.1" cy="1496.1" rx="4.8" ry="2.7" fill="rgb(55,55,55)" opacity="0.77" transform="rotate(-18 847.1 1496.1)"/><ellipse cx="300.4" cy="1406.4" rx="4.5" ry="2.9" fill="rgb(27,27,27)" opacity="0.89" transform="rotate(-24 300.4 1406.4)"/><ellipse cx="869.5" cy="1473.5" rx="4.0" ry="3.1" fill="rgb(57,57,57)" opacity="0.67" transform="rotate(-24 869.5 1473.5)"/><ellipse cx="381.3" cy="1454.5" rx="2.5" ry="1.6" fill="rgb(30,30,30)" opacity="0.61" transform="rotate(16 381.3 1454.5)"/><ellipse cx="637.4" cy="1508.5" rx="4.0" ry="2.8" fill="rgb(51,51,51)" opacity="0.55" transform="rotate(-3 637.4 1508.5)"/><ellipse cx="333.6" cy="1559.7" rx="7.1" ry="4.3" fill="rgb(34,34,34)" opacity="0.71" transform="rotate(-3 333.6 1559.7)"/><ellipse cx="1020.1" cy="1502.3" rx="3.6" ry="2.7" fill="rgb(27,27,27)" opacity="0.58" transform="rotate(-4 1020.1 1502.3)"/><ellipse cx="1.1" cy="1558.6" rx="5.4" ry="3.8" fill="rgb(53,53,53)" opacity="0.59" transform="rotate(-7 1.1 1558.6)"/><ellipse cx="291.5" cy="1431.2" rx="4.5" ry="2.6" fill="rgb(39,39,39)" opacity="0.65" transform="rotate(13 291.5 1431.2)"/><ellipse cx="850.9" cy="1541.6" rx="8.1" ry="6.2" fill="rgb(55,55,55)" opacity="0.66" transform="rotate(-22 850.9 1541.6)"/><ellipse cx="150.5" cy="1544.7" rx="7.0" ry="3.2" fill="rgb(30,30,30)" opacity="0.80" transform="rotate(-17 150.5 1544.7)"/><ellipse cx="296.1" cy="1560.8" rx="9.7" ry="6.9" fill="rgb(54,54,54)" opacity="0.85" transform="rotate(-1 296.1 1560.8)"/><ellipse cx="655.5" cy="1539.1" rx="6.0" ry="2.7" fill="rgb(61,61,61)" opacity="0.75" transform="rotate(1 655.5 1539.1)"/><ellipse cx="855.6" cy="1399.0" rx="4.0" ry="2.7" fill="rgb(56,56,56)" opacity="0.69" transform="rotate(1 855.6 1399.0)"/><ellipse cx="739.9" cy="1466.8" rx="7.6" ry="5.6" fill="rgb(59,59,59)" opacity="0.77" transform="rotate(21 739.9 1466.8)"/><ellipse cx="564.6" cy="1538.8" rx="5.9" ry="3.9" fill="rgb(57,57,57)" opacity="0.58" transform="rotate(9 564.6 1538.8)"/><ellipse cx="301.3" cy="1399.9" rx="4.4" ry="2.9" fill="rgb(50,50,50)" opacity="0.62" transform="rotate(18 301.3 1399.9)"/><ellipse cx="977.5" cy="1444.4" rx="5.5" ry="2.6" fill="rgb(43,43,43)" opacity="0.86" transform="rotate(13 977.5 1444.4)"/><ellipse cx="723.4" cy="1545.9" rx="8.8" ry="5.8" fill="rgb(57,57,57)" opacity="0.54" transform="rotate(-15 723.4 1545.9)"/><ellipse cx="127.4" cy="1456.6" rx="6.2" ry="3.7" fill="rgb(48,48,48)" opacity="0.65" transform="rotate(23 127.4 1456.6)"/><ellipse cx="789.8" cy="1490.1" rx="4.0" ry="2.8" fill="rgb(44,44,44)" opacity="0.54" transform="rotate(-9 789.8 1490.1)"/><ellipse cx="724.6" cy="1494.6" rx="7.0" ry="4.1" fill="rgb(37,37,37)" opacity="0.62" transform="rotate(19 724.6 1494.6)"/><ellipse cx="838.9" cy="1538.5" rx="4.0" ry="3.1" fill="rgb(50,50,50)" opacity="0.81" transform="rotate(-21 838.9 1538.5)"/><ellipse cx="236.3" cy="1406.3" rx="3.8" ry="2.8" fill="rgb(50,50,50)" opacity="0.67" transform="rotate(19 236.3 1406.3)"/><ellipse cx="447.5" cy="1490.2" rx="8.0" ry="4.4" fill="rgb(62,62,62)" opacity="0.86" transform="rotate(-11 447.5 1490.2)"/><ellipse cx="347.9" cy="1470.9" rx="3.4" ry="1.9" fill="rgb(60,60,60)" opacity="0.57" transform="rotate(3 347.9 1470.9)"/><ellipse cx="200.2" cy="1502.0" rx="6.8" ry="4.7" fill="rgb(27,27,27)" opacity="0.88" transform="rotate(11 200.2 1502.0)"/><ellipse cx="144.9" cy="1488.5" rx="3.2" ry="1.7" fill="rgb(48,48,48)" opacity="0.87" transform="rotate(-2 144.9 1488.5)"/><ellipse cx="241.0" cy="1520.4" rx="8.6" ry="5.3" fill="rgb(36,36,36)" opacity="0.77" transform="rotate(-20 241.0 1520.4)"/><ellipse cx="117.4" cy="1455.4" rx="4.2" ry="3.0" fill="rgb(52,52,52)" opacity="0.79" transform="rotate(4 117.4 1455.4)"/><ellipse cx="858.8" cy="1539.7" rx="8.4" ry="6.5" fill="rgb(64,64,64)" opacity="0.85" transform="rotate(23 858.8 1539.7)"/><ellipse cx="915.7" cy="1460.8" rx="6.5" ry="3.4" fill="rgb(35,35,35)" opacity="0.68" transform="rotate(-9 915.7 1460.8)"/><ellipse cx="715.9" cy="1528.7" rx="3.9" ry="2.3" fill="rgb(48,48,48)" opacity="0.50" transform="rotate(2 715.9 1528.7)"/><ellipse cx="1031.3" cy="1568.2" rx="4.8" ry="2.2" fill="rgb(45,45,45)" opacity="0.88" transform="rotate(-6 1031.3 1568.2)"/><ellipse cx="75.9" cy="1531.8" rx="8.2" ry="4.5" fill="rgb(54,54,54)" opacity="0.90" transform="rotate(-19 75.9 1531.8)"/><ellipse cx="790.0" cy="1430.2" rx="3.5" ry="1.8" fill="rgb(29,29,29)" opacity="0.73" transform="rotate(20 790.0 1430.2)"/><ellipse cx="311.4" cy="1455.7" rx="6.5" ry="4.1" fill="rgb(50,50,50)" opacity="0.89" transform="rotate(-22 311.4 1455.7)"/><ellipse cx="285.2" cy="1524.6" rx="4.2" ry="3.3" fill="rgb(51,51,51)" opacity="0.89" transform="rotate(3 285.2 1524.6)"/><ellipse cx="569.5" cy="1464.5" rx="7.2" ry="3.5" fill="rgb(29,29,29)" opacity="0.50" transform="rotate(-7 569.5 1464.5)"/><ellipse cx="805.7" cy="1460.0" rx="2.5" ry="1.4" fill="rgb(48,48,48)" opacity="0.85" transform="rotate(-2 805.7 1460.0)"/><ellipse cx="82.5" cy="1569.9" rx="5.3" ry="3.9" fill="rgb(57,57,57)" opacity="0.53" transform="rotate(-24 82.5 1569.9)"/><ellipse cx="293.7" cy="1566.9" rx="9.0" ry="5.7" fill="rgb(49,49,49)" opacity="0.81" transform="rotate(-22 293.7 1566.9)"/><ellipse cx="526.2" cy="1549.8" rx="10.3" ry="7.0" fill="rgb(61,61,61)" opacity="0.51" transform="rotate(6 526.2 1549.8)"/><ellipse cx="25.1" cy="1533.5" rx="6.2" ry="4.7" fill="rgb(48,48,48)" opacity="0.51" transform="rotate(16 25.1 1533.5)"/><ellipse cx="858.1" cy="1425.0" rx="3.4" ry="1.9" fill="rgb(28,28,28)" opacity="0.90" transform="rotate(-15 858.1 1425.0)"/><ellipse cx="228.0" cy="1470.9" rx="4.0" ry="2.5" fill="rgb(64,64,64)" opacity="0.55" transform="rotate(-11 228.0 1470.9)"/><ellipse cx="178.0" cy="1477.4" rx="3.1" ry="1.8" fill="rgb(33,33,33)" opacity="0.58" transform="rotate(20 178.0 1477.4)"/><ellipse cx="19.4" cy="1544.1" rx="10.3" ry="6.8" fill="rgb(39,39,39)" opacity="0.53" transform="rotate(-18 19.4 1544.1)"/><ellipse cx="383.8" cy="1506.4" rx="3.1" ry="2.3" fill="rgb(32,32,32)" opacity="0.80" transform="rotate(-21 383.8 1506.4)"/><ellipse cx="392.3" cy="1534.5" rx="4.4" ry="2.8" fill="rgb(59,59,59)" opacity="0.54" transform="rotate(24 392.3 1534.5)"/><ellipse cx="116.8" cy="1510.8" rx="5.4" ry="3.1" fill="rgb(61,61,61)" opacity="0.68" transform="rotate(-1 116.8 1510.8)"/><ellipse cx="916.1" cy="1568.7" rx="4.9" ry="2.2" fill="rgb(48,48,48)" opacity="0.55" transform="rotate(-24 916.1 1568.7)"/><ellipse cx="506.2" cy="1522.0" rx="3.3" ry="2.4" fill="rgb(56,56,56)" opacity="0.79" transform="rotate(-4 506.2 1522.0)"/><ellipse cx="248.3" cy="1450.2" rx="6.1" ry="3.3" fill="rgb(46,46,46)" opacity="0.81" transform="rotate(10 248.3 1450.2)"/><ellipse cx="586.8" cy="1474.1" rx="3.2" ry="1.6" fill="rgb(60,60,60)" opacity="0.71" transform="rotate(20 586.8 1474.1)"/><ellipse cx="750.3" cy="1563.7" rx="10.9" ry="8.7" fill="rgb(34,34,34)" opacity="0.74" transform="rotate(-10 750.3 1563.7)"/><ellipse cx="717.9" cy="1511.0" rx="3.4" ry="1.8" fill="rgb(30,30,30)" opacity="0.87" transform="rotate(6 717.9 1511.0)"/><ellipse cx="314.8" cy="1494.3" rx="7.7" ry="3.8" fill="rgb(55,55,55)" opacity="0.50" transform="rotate(-7 314.8 1494.3)"/><ellipse cx="594.1" cy="1497.0" rx="3.2" ry="2.3" fill="rgb(33,33,33)" opacity="0.65" transform="rotate(-19 594.1 1497.0)"/><ellipse cx="358.5" cy="1541.7" rx="6.9" ry="3.4" fill="rgb(40,40,40)" opacity="0.83" transform="rotate(-19 358.5 1541.7)"/><ellipse cx="658.3" cy="1465.0" rx="5.7" ry="3.1" fill="rgb(52,52,52)" opacity="0.87" transform="rotate(-12 658.3 1465.0)"/><ellipse cx="879.8" cy="1501.9" rx="6.4" ry="4.9" fill="rgb(31,31,31)" opacity="0.50" transform="rotate(-7 879.8 1501.9)"/><ellipse cx="45.5" cy="1543.3" rx="7.0" ry="5.3" fill="rgb(61,61,61)" opacity="0.66" transform="rotate(-23 45.5 1543.3)"/><ellipse cx="434.1" cy="1490.6" rx="5.4" ry="3.5" fill="rgb(31,31,31)" opacity="0.78" transform="rotate(2 434.1 1490.6)"/><ellipse cx="756.6" cy="1501.5" rx="3.2" ry="2.3" fill="rgb(57,57,57)" opacity="0.86" transform="rotate(-10 756.6 1501.5)"/><ellipse cx="758.3" cy="1407.5" rx="4.1" ry="3.1" fill="rgb(43,43,43)" opacity="0.60" transform="rotate(-19 758.3 1407.5)"/><ellipse cx="314.2" cy="1395.3" rx="4.2" ry="2.6" fill="rgb(53,53,53)" opacity="0.65" transform="rotate(20 314.2 1395.3)"/><ellipse cx="690.1" cy="1564.8" rx="6.1" ry="4.1" fill="rgb(33,33,33)" opacity="0.64" transform="rotate(-2 690.1 1564.8)"/><ellipse cx="83.2" cy="1471.5" rx="5.8" ry="4.0" fill="rgb(32,32,32)" opacity="0.87" transform="rotate(-16 83.2 1471.5)"/><ellipse cx="178.6" cy="1485.4" rx="8.0" ry="4.6" fill="rgb(51,51,51)" opacity="0.61" transform="rotate(-24 178.6 1485.4)"/><ellipse cx="519.4" cy="1491.5" rx="8.0" ry="5.2" fill="rgb(50,50,50)" opacity="0.72" transform="rotate(8 519.4 1491.5)"/><ellipse cx="264.4" cy="1451.4" rx="5.3" ry="2.7" fill="rgb(57,57,57)" opacity="0.61" transform="rotate(-4 264.4 1451.4)"/><ellipse cx="662.1" cy="1510.3" rx="9.0" ry="4.4" fill="rgb(45,45,45)" opacity="0.54" transform="rotate(13 662.1 1510.3)"/><ellipse cx="916.0" cy="1446.2" rx="5.8" ry="2.9" fill="rgb(58,58,58)" opacity="0.65" transform="rotate(14 916.0 1446.2)"/><ellipse cx="669.4" cy="1525.3" rx="5.0" ry="3.0" fill="rgb(30,30,30)" opacity="0.62" transform="rotate(-9 669.4 1525.3)"/><ellipse cx="307.9" cy="1455.7" rx="7.2" ry="4.3" fill="rgb(28,28,28)" opacity="0.57" transform="rotate(-22 307.9 1455.7)"/><ellipse cx="992.5" cy="1537.3" rx="9.6" ry="6.0" fill="rgb(50,50,50)" opacity="0.53" transform="rotate(-20 992.5 1537.3)"/><ellipse cx="443.6" cy="1564.1" rx="7.8" ry="5.3" fill="rgb(44,44,44)" opacity="0.87" transform="rotate(9 443.6 1564.1)"/><ellipse cx="995.2" cy="1478.9" rx="3.3" ry="2.3" fill="rgb(58,58,58)" opacity="0.54" transform="rotate(-19 995.2 1478.9)"/><ellipse cx="688.7" cy="1514.5" rx="5.5" ry="2.7" fill="rgb(53,53,53)" opacity="0.89" transform="rotate(-10 688.7 1514.5)"/><ellipse cx="450.1" cy="1432.7" rx="4.3" ry="3.3" fill="rgb(64,64,64)" opacity="0.57" transform="rotate(-6 450.1 1432.7)"/><ellipse cx="201.9" cy="1553.7" rx="8.8" ry="4.2" fill="rgb(53,53,53)" opacity="0.62" transform="rotate(-10 201.9 1553.7)"/><ellipse cx="581.7" cy="1538.6" rx="7.8" ry="4.2" fill="rgb(64,64,64)" opacity="0.60" transform="rotate(-17 581.7 1538.6)"/><ellipse cx="495.0" cy="1531.5" rx="7.4" ry="3.7" fill="rgb(30,30,30)" opacity="0.68" transform="rotate(-15 495.0 1531.5)"/><ellipse cx="246.2" cy="1440.0" rx="5.1" ry="3.5" fill="rgb(53,53,53)" opacity="0.84" transform="rotate(-12 246.2 1440.0)"/><ellipse cx="171.7" cy="1520.8" rx="3.9" ry="2.5" fill="rgb(46,46,46)" opacity="0.78" transform="rotate(-12 171.7 1520.8)"/><ellipse cx="570.7" cy="1495.0" rx="4.1" ry="1.9" fill="rgb(54,54,54)" opacity="0.76" transform="rotate(4 570.7 1495.0)"/><ellipse cx="514.1" cy="1552.3" rx="10.3" ry="5.6" fill="rgb(42,42,42)" opacity="0.55" transform="rotate(-8 514.1 1552.3)"/><ellipse cx="441.9" cy="1469.6" rx="7.6" ry="3.8" fill="rgb(26,26,26)" opacity="0.50" transform="rotate(8 441.9 1469.6)"/><ellipse cx="992.7" cy="1451.2" rx="6.4" ry="4.3" fill="rgb(61,61,61)" opacity="0.77" transform="rotate(-4 992.7 1451.2)"/><ellipse cx="357.5" cy="1526.7" rx="6.6" ry="4.6" fill="rgb(24,24,24)" opacity="0.56" transform="rotate(6 357.5 1526.7)"/><ellipse cx="520.3" cy="1395.2" rx="4.3" ry="3.1" fill="rgb(26,26,26)" opacity="0.59" transform="rotate(17 520.3 1395.2)"/><ellipse cx="2.2" cy="1569.8" rx="9.5" ry="4.8" fill="rgb(56,56,56)" opacity="0.60" transform="rotate(-16 2.2 1569.8)"/><ellipse cx="872.2" cy="1512.2" rx="5.5" ry="3.7" fill="rgb(41,41,41)" opacity="0.87" transform="rotate(-14 872.2 1512.2)"/><ellipse cx="215.7" cy="1437.5" rx="2.5" ry="1.9" fill="rgb(61,61,61)" opacity="0.62" transform="rotate(-6 215.7 1437.5)"/><ellipse cx="773.5" cy="1462.1" rx="5.5" ry="3.9" fill="rgb(27,27,27)" opacity="0.86" transform="rotate(-3 773.5 1462.1)"/><ellipse cx="558.2" cy="1395.5" rx="3.1" ry="1.9" fill="rgb(36,36,36)" opacity="0.54" transform="rotate(-16 558.2 1395.5)"/><ellipse cx="481.9" cy="1473.9" rx="6.9" ry="4.2" fill="rgb(25,25,25)" opacity="0.81" transform="rotate(1 481.9 1473.9)"/><ellipse cx="735.4" cy="1505.3" rx="5.8" ry="3.9" fill="rgb(63,63,63)" opacity="0.58" transform="rotate(5 735.4 1505.3)"/><ellipse cx="685.3" cy="1474.9" rx="5.3" ry="4.2" fill="rgb(36,36,36)" opacity="0.54" transform="rotate(10 685.3 1474.9)"/><ellipse cx="388.6" cy="1411.1" rx="2.7" ry="1.2" fill="rgb(43,43,43)" opacity="0.58" transform="rotate(-4 388.6 1411.1)"/><ellipse cx="916.8" cy="1465.5" rx="6.4" ry="3.2" fill="rgb(36,36,36)" opacity="0.59" transform="rotate(-6 916.8 1465.5)"/><ellipse cx="423.6" cy="1476.2" rx="4.8" ry="2.2" fill="rgb(36,36,36)" opacity="0.78" transform="rotate(-2 423.6 1476.2)"/><ellipse cx="905.0" cy="1517.9" rx="8.0" ry="6.1" fill="rgb(50,50,50)" opacity="0.83" transform="rotate(21 905.0 1517.9)"/><ellipse cx="946.5" cy="1495.9" rx="7.7" ry="5.5" fill="rgb(36,36,36)" opacity="0.63" transform="rotate(12 946.5 1495.9)"/><ellipse cx="263.4" cy="1517.7" rx="8.1" ry="4.2" fill="rgb(34,34,34)" opacity="0.65" transform="rotate(2 263.4 1517.7)"/><ellipse cx="99.6" cy="1504.0" rx="5.2" ry="2.6" fill="rgb(24,24,24)" opacity="0.72" transform="rotate(-11 99.6 1504.0)"/><ellipse cx="742.1" cy="1565.7" rx="9.4" ry="6.5" fill="rgb(44,44,44)" opacity="0.79" transform="rotate(-2 742.1 1565.7)"/><ellipse cx="931.6" cy="1482.8" rx="4.8" ry="3.8" fill="rgb(47,47,47)" opacity="0.80" transform="rotate(11 931.6 1482.8)"/><ellipse cx="502.5" cy="1539.6" rx="6.6" ry="5.1" fill="rgb(58,58,58)" opacity="0.66" transform="rotate(5 502.5 1539.6)"/><ellipse cx="413.7" cy="1495.6" rx="8.6" ry="3.9" fill="rgb(30,30,30)" opacity="0.83" transform="rotate(-1 413.7 1495.6)"/><ellipse cx="74.6" cy="1491.7" rx="4.1" ry="2.8" fill="rgb(30,30,30)" opacity="0.53" transform="rotate(5 74.6 1491.7)"/><ellipse cx="342.2" cy="1426.3" rx="3.5" ry="2.5" fill="rgb(64,64,64)" opacity="0.77" transform="rotate(-23 342.2 1426.3)"/><ellipse cx="129.9" cy="1488.4" rx="3.3" ry="2.2" fill="rgb(64,64,64)" opacity="0.53" transform="rotate(21 129.9 1488.4)"/><ellipse cx="512.4" cy="1553.3" rx="5.2" ry="2.9" fill="rgb(63,63,63)" opacity="0.68" transform="rotate(-4 512.4 1553.3)"/><ellipse cx="74.8" cy="1516.4" rx="4.7" ry="2.6" fill="rgb(43,43,43)" opacity="0.53" transform="rotate(-20 74.8 1516.4)"/><ellipse cx="396.1" cy="1469.5" rx="3.4" ry="2.3" fill="rgb(45,45,45)" opacity="0.85" transform="rotate(-4 396.1 1469.5)"/><ellipse cx="374.7" cy="1413.7" rx="3.1" ry="2.3" fill="rgb(26,26,26)" opacity="0.77" transform="rotate(-0 374.7 1413.7)"/><ellipse cx="476.4" cy="1551.9" rx="4.0" ry="2.1" fill="rgb(40,40,40)" opacity="0.68" transform="rotate(-11 476.4 1551.9)"/><ellipse cx="935.8" cy="1489.7" rx="5.7" ry="2.8" fill="rgb(52,52,52)" opacity="0.67" transform="rotate(1 935.8 1489.7)"/><ellipse cx="206.5" cy="1526.1" rx="9.4" ry="4.7" fill="rgb(44,44,44)" opacity="0.85" transform="rotate(-22 206.5 1526.1)"/><ellipse cx="321.9" cy="1460.7" rx="5.5" ry="3.6" fill="rgb(52,52,52)" opacity="0.56" transform="rotate(-16 321.9 1460.7)"/><ellipse cx="321.2" cy="1497.2" rx="6.4" ry="4.4" fill="rgb(29,29,29)" opacity="0.62" transform="rotate(-23 321.2 1497.2)"/><ellipse cx="307.4" cy="1472.8" rx="3.8" ry="2.3" fill="rgb(45,45,45)" opacity="0.71" transform="rotate(-10 307.4 1472.8)"/><ellipse cx="1048.6" cy="1496.5" rx="5.2" ry="3.2" fill="rgb(26,26,26)" opacity="0.57" transform="rotate(-2 1048.6 1496.5)"/><ellipse cx="499.2" cy="1452.5" rx="5.3" ry="2.6" fill="rgb(47,47,47)" opacity="0.87" transform="rotate(19 499.2 1452.5)"/><ellipse cx="357.7" cy="1508.0" rx="3.8" ry="2.2" fill="rgb(40,40,40)" opacity="0.55" transform="rotate(-3 357.7 1508.0)"/><ellipse cx="786.3" cy="1525.9" rx="6.3" ry="3.4" fill="rgb(50,50,50)" opacity="0.50" transform="rotate(-16 786.3 1525.9)"/><ellipse cx="719.0" cy="1451.8" rx="3.3" ry="1.7" fill="rgb(57,57,57)" opacity="0.68" transform="rotate(21 719.0 1451.8)"/><ellipse cx="301.3" cy="1401.4" rx="4.6" ry="3.1" fill="rgb(55,55,55)" opacity="0.85" transform="rotate(-13 301.3 1401.4)"/><ellipse cx="702.6" cy="1399.7" rx="2.1" ry="1.4" fill="rgb(45,45,45)" opacity="0.74" transform="rotate(-20 702.6 1399.7)"/><ellipse cx="170.8" cy="1563.1" rx="4.1" ry="2.6" fill="rgb(57,57,57)" opacity="0.58" transform="rotate(-11 170.8 1563.1)"/><ellipse cx="969.1" cy="1573.7" rx="6.4" ry="3.6" fill="rgb(25,25,25)" opacity="0.51" transform="rotate(-7 969.1 1573.7)"/><ellipse cx="128.4" cy="1429.5" rx="6.2" ry="3.5" fill="rgb(28,28,28)" opacity="0.75" transform="rotate(-13 128.4 1429.5)"/><ellipse cx="812.4" cy="1556.1" rx="7.9" ry="6.1" fill="rgb(45,45,45)" opacity="0.60" transform="rotate(-7 812.4 1556.1)"/><ellipse cx="177.9" cy="1443.6" rx="2.6" ry="1.3" fill="rgb(55,55,55)" opacity="0.84" transform="rotate(11 177.9 1443.6)"/><ellipse cx="807.0" cy="1479.6" rx="4.0" ry="1.9" fill="rgb(59,59,59)" opacity="0.59" transform="rotate(12 807.0 1479.6)"/><ellipse cx="699.7" cy="1412.5" rx="3.7" ry="2.5" fill="rgb(33,33,33)" opacity="0.55" transform="rotate(-25 699.7 1412.5)"/><ellipse cx="84.8" cy="1439.5" rx="3.8" ry="3.0" fill="rgb(24,24,24)" opacity="0.74" transform="rotate(-1 84.8 1439.5)"/><ellipse cx="339.0" cy="1465.7" rx="4.1" ry="2.8" fill="rgb(61,61,61)" opacity="0.62" transform="rotate(18 339.0 1465.7)"/><ellipse cx="157.3" cy="1396.6" rx="3.6" ry="1.9" fill="rgb(43,43,43)" opacity="0.54" transform="rotate(-25 157.3 1396.6)"/><ellipse cx="249.3" cy="1463.9" rx="5.8" ry="3.0" fill="rgb(32,32,32)" opacity="0.58" transform="rotate(17 249.3 1463.9)"/><ellipse cx="969.1" cy="1416.4" rx="4.2" ry="2.9" fill="rgb(55,55,55)" opacity="0.59" transform="rotate(12 969.1 1416.4)"/><ellipse cx="462.0" cy="1450.1" rx="3.5" ry="2.3" fill="rgb(58,58,58)" opacity="0.76" transform="rotate(4 462.0 1450.1)"/><ellipse cx="834.6" cy="1545.6" rx="6.9" ry="3.7" fill="rgb(225,225,225)" opacity="0.74" transform="rotate(-25 834.6 1545.6)"/><ellipse cx="799.2" cy="1471.6" rx="6.3" ry="3.4" fill="rgb(202,202,202)" opacity="0.91" transform="rotate(15 799.2 1471.6)"/><ellipse cx="567.3" cy="1425.5" rx="4.0" ry="2.8" fill="rgb(228,228,228)" opacity="0.82" transform="rotate(11 567.3 1425.5)"/><ellipse cx="888.2" cy="1465.4" rx="2.9" ry="2.1" fill="rgb(206,206,206)" opacity="0.83" transform="rotate(15 888.2 1465.4)"/><ellipse cx="794.9" cy="1525.6" rx="8.4" ry="4.1" fill="rgb(175,175,175)" opacity="0.88" transform="rotate(-23 794.9 1525.6)"/><ellipse cx="960.1" cy="1490.3" rx="7.3" ry="3.8" fill="rgb(214,214,214)" opacity="0.94" transform="rotate(4 960.1 1490.3)"/><ellipse cx="29.9" cy="1469.6" rx="5.4" ry="3.0" fill="rgb(161,161,161)" opacity="0.75" transform="rotate(4 29.9 1469.6)"/><ellipse cx="713.9" cy="1442.9" rx="4.7" ry="2.5" fill="rgb(198,198,198)" opacity="0.74" transform="rotate(11 713.9 1442.9)"/><ellipse cx="145.3" cy="1444.6" rx="5.8" ry="4.0" fill="rgb(171,171,171)" opacity="0.56" transform="rotate(-24 145.3 1444.6)"/><ellipse cx="350.2" cy="1559.2" rx="8.3" ry="4.6" fill="rgb(199,199,199)" opacity="0.67" transform="rotate(-6 350.2 1559.2)"/><ellipse cx="714.0" cy="1490.6" rx="3.8" ry="2.5" fill="rgb(162,162,162)" opacity="0.94" transform="rotate(25 714.0 1490.6)"/><ellipse cx="258.1" cy="1571.6" rx="10.7" ry="7.3" fill="rgb(207,207,207)" opacity="0.86" transform="rotate(19 258.1 1571.6)"/><ellipse cx="399.8" cy="1422.6" rx="3.4" ry="1.9" fill="rgb(160,160,160)" opacity="0.63" transform="rotate(16 399.8 1422.6)"/><ellipse cx="715.5" cy="1484.5" rx="6.5" ry="5.1" fill="rgb(218,218,218)" opacity="0.60" transform="rotate(-24 715.5 1484.5)"/><ellipse cx="620.1" cy="1469.6" rx="3.7" ry="2.3" fill="rgb(182,182,182)" opacity="0.94" transform="rotate(21 620.1 1469.6)"/><ellipse cx="975.1" cy="1479.6" rx="5.1" ry="3.4" fill="rgb(212,212,212)" opacity="0.61" transform="rotate(8 975.1 1479.6)"/><ellipse cx="397.1" cy="1460.4" rx="6.1" ry="3.4" fill="rgb(198,198,198)" opacity="0.83" transform="rotate(8 397.1 1460.4)"/><ellipse cx="279.6" cy="1516.6" rx="9.2" ry="6.5" fill="rgb(187,187,187)" opacity="0.77" transform="rotate(-17 279.6 1516.6)"/><ellipse cx="656.2" cy="1569.2" rx="5.2" ry="3.5" fill="rgb(197,197,197)" opacity="0.69" transform="rotate(3 656.2 1569.2)"/><ellipse cx="987.2" cy="1550.8" rx="4.0" ry="2.1" fill="rgb(228,228,228)" opacity="0.56" transform="rotate(22 987.2 1550.8)"/><ellipse cx="848.1" cy="1542.0" rx="7.1" ry="3.4" fill="rgb(197,197,197)" opacity="0.69" transform="rotate(-13 848.1 1542.0)"/><ellipse cx="152.5" cy="1513.2" rx="6.8" ry="3.4" fill="rgb(162,162,162)" opacity="0.84" transform="rotate(6 152.5 1513.2)"/><ellipse cx="47.6" cy="1488.8" rx="6.7" ry="3.2" fill="rgb(220,220,220)" opacity="0.60" transform="rotate(-23 47.6 1488.8)"/><ellipse cx="876.0" cy="1423.8" rx="4.1" ry="3.2" fill="rgb(207,207,207)" opacity="0.75" transform="rotate(20 876.0 1423.8)"/><ellipse cx="21.3" cy="1515.2" rx="8.1" ry="4.2" fill="rgb(211,211,211)" opacity="0.86" transform="rotate(22 21.3 1515.2)"/><ellipse cx="470.3" cy="1455.6" rx="5.5" ry="2.6" fill="rgb(196,196,196)" opacity="0.66" transform="rotate(15 470.3 1455.6)"/><ellipse cx="988.5" cy="1423.8" rx="5.0" ry="2.7" fill="rgb(205,205,205)" opacity="0.73" transform="rotate(23 988.5 1423.8)"/><ellipse cx="390.8" cy="1527.8" rx="4.9" ry="3.2" fill="rgb(154,154,154)" opacity="0.85" transform="rotate(-13 390.8 1527.8)"/><ellipse cx="353.9" cy="1415.3" rx="5.0" ry="3.5" fill="rgb(176,176,176)" opacity="0.83" transform="rotate(13 353.9 1415.3)"/><ellipse cx="361.3" cy="1422.8" rx="4.5" ry="2.2" fill="rgb(209,209,209)" opacity="0.85" transform="rotate(2 361.3 1422.8)"/><ellipse cx="672.7" cy="1431.1" rx="3.3" ry="2.6" fill="rgb(169,169,169)" opacity="0.62" transform="rotate(-16 672.7 1431.1)"/><ellipse cx="777.4" cy="1493.7" rx="7.5" ry="5.5" fill="rgb(222,222,222)" opacity="0.84" transform="rotate(22 777.4 1493.7)"/><ellipse cx="132.4" cy="1524.0" rx="8.1" ry="6.4" fill="rgb(150,150,150)" opacity="0.86" transform="rotate(3 132.4 1524.0)"/><ellipse cx="598.5" cy="1441.0" rx="3.4" ry="2.0" fill="rgb(200,200,200)" opacity="0.89" transform="rotate(-3 598.5 1441.0)"/><ellipse cx="558.4" cy="1550.3" rx="4.5" ry="2.4" fill="rgb(197,197,197)" opacity="0.66" transform="rotate(2 558.4 1550.3)"/><ellipse cx="194.8" cy="1434.7" rx="4.7" ry="2.3" fill="rgb(151,151,151)" opacity="0.57" transform="rotate(-21 194.8 1434.7)"/><ellipse cx="798.4" cy="1428.9" rx="4.6" ry="2.2" fill="rgb(154,154,154)" opacity="0.57" transform="rotate(-7 798.4 1428.9)"/><ellipse cx="236.5" cy="1477.1" rx="6.5" ry="4.5" fill="rgb(161,161,161)" opacity="0.74" transform="rotate(23 236.5 1477.1)"/><ellipse cx="761.8" cy="1552.6" rx="4.8" ry="3.3" fill="rgb(164,164,164)" opacity="0.83" transform="rotate(-19 761.8 1552.6)"/><ellipse cx="187.0" cy="1522.9" rx="3.4" ry="2.5" fill="rgb(204,204,204)" opacity="0.81" transform="rotate(25 187.0 1522.9)"/><ellipse cx="302.0" cy="1483.2" rx="3.7" ry="2.8" fill="rgb(177,177,177)" opacity="0.66" transform="rotate(14 302.0 1483.2)"/><ellipse cx="13.8" cy="1497.0" rx="7.0" ry="5.5" fill="rgb(192,192,192)" opacity="0.86" transform="rotate(23 13.8 1497.0)"/><ellipse cx="98.6" cy="1508.2" rx="3.2" ry="1.8" fill="rgb(153,153,153)" opacity="0.69" transform="rotate(-19 98.6 1508.2)"/><ellipse cx="728.2" cy="1466.2" rx="5.7" ry="4.5" fill="rgb(153,153,153)" opacity="0.55" transform="rotate(-8 728.2 1466.2)"/><ellipse cx="71.6" cy="1410.4" rx="4.4" ry="2.1" fill="rgb(184,184,184)" opacity="0.64" transform="rotate(5 71.6 1410.4)"/><ellipse cx="132.5" cy="1500.1" rx="4.3" ry="2.9" fill="rgb(204,204,204)" opacity="0.78" transform="rotate(24 132.5 1500.1)"/><ellipse cx="659.5" cy="1489.3" rx="4.2" ry="2.1" fill="rgb(174,174,174)" opacity="0.85" transform="rotate(19 659.5 1489.3)"/><ellipse cx="110.2" cy="1439.1" rx="2.5" ry="1.9" fill="rgb(170,170,170)" opacity="0.60" transform="rotate(-25 110.2 1439.1)"/><ellipse cx="623.5" cy="1488.2" rx="7.4" ry="4.7" fill="rgb(210,210,210)" opacity="0.64" transform="rotate(10 623.5 1488.2)"/><ellipse cx="677.7" cy="1474.1" rx="6.4" ry="3.9" fill="rgb(151,151,151)" opacity="0.69" transform="rotate(21 677.7 1474.1)"/><ellipse cx="264.9" cy="1431.9" rx="3.4" ry="2.5" fill="rgb(150,150,150)" opacity="0.86" transform="rotate(-7 264.9 1431.9)"/><ellipse cx="185.8" cy="1477.3" rx="5.8" ry="3.1" fill="rgb(174,174,174)" opacity="0.70" transform="rotate(7 185.8 1477.3)"/><ellipse cx="132.4" cy="1560.2" rx="9.9" ry="6.2" fill="rgb(216,216,216)" opacity="0.76" transform="rotate(23 132.4 1560.2)"/><ellipse cx="1019.0" cy="1562.0" rx="10.3" ry="5.8" fill="rgb(199,199,199)" opacity="0.90" transform="rotate(11 1019.0 1562.0)"/><ellipse cx="683.2" cy="1541.6" rx="3.9" ry="1.9" fill="rgb(227,227,227)" opacity="0.79" transform="rotate(-20 683.2 1541.6)"/><ellipse cx="1040.7" cy="1545.3" rx="7.0" ry="5.1" fill="rgb(161,161,161)" opacity="0.58" transform="rotate(13 1040.7 1545.3)"/><ellipse cx="876.1" cy="1534.6" rx="4.8" ry="2.7" fill="rgb(181,181,181)" opacity="0.62" transform="rotate(24 876.1 1534.6)"/><ellipse cx="193.6" cy="1513.8" rx="8.3" ry="5.9" fill="rgb(164,164,164)" opacity="0.84" transform="rotate(-2 193.6 1513.8)"/><ellipse cx="143.8" cy="1570.2" rx="5.3" ry="3.1" fill="rgb(192,192,192)" opacity="0.80" transform="rotate(-18 143.8 1570.2)"/><ellipse cx="959.1" cy="1455.2" rx="2.3" ry="1.7" fill="rgb(208,208,208)" opacity="0.68" transform="rotate(-24 959.1 1455.2)"/><ellipse cx="11.9" cy="1557.3" rx="4.4" ry="3.4" fill="rgb(197,197,197)" opacity="0.61" transform="rotate(-8 11.9 1557.3)"/><ellipse cx="795.1" cy="1471.1" rx="6.3" ry="4.5" fill="rgb(218,218,218)" opacity="0.91" transform="rotate(14 795.1 1471.1)"/><ellipse cx="158.7" cy="1572.7" rx="6.8" ry="5.2" fill="rgb(166,166,166)" opacity="0.82" transform="rotate(22 158.7 1572.7)"/><ellipse cx="505.1" cy="1421.6" rx="2.2" ry="1.6" fill="rgb(171,171,171)" opacity="0.73" transform="rotate(15 505.1 1421.6)"/><ellipse cx="268.6" cy="1499.4" rx="4.9" ry="3.1" fill="rgb(207,207,207)" opacity="0.77" transform="rotate(19 268.6 1499.4)"/><ellipse cx="929.6" cy="1537.0" rx="6.8" ry="3.6" fill="rgb(150,150,150)" opacity="0.76" transform="rotate(24 929.6 1537.0)"/><ellipse cx="860.0" cy="1501.9" rx="4.4" ry="3.3" fill="rgb(176,176,176)" opacity="0.78" transform="rotate(-9 860.0 1501.9)"/><ellipse cx="200.6" cy="1455.9" rx="3.5" ry="2.0" fill="rgb(197,197,197)" opacity="0.64" transform="rotate(24 200.6 1455.9)"/><ellipse cx="766.3" cy="1508.1" rx="3.5" ry="2.7" fill="rgb(173,173,173)" opacity="0.69" transform="rotate(-7 766.3 1508.1)"/><ellipse cx="502.3" cy="1515.5" rx="6.0" ry="4.6" fill="rgb(165,165,165)" opacity="0.81" transform="rotate(6 502.3 1515.5)"/><ellipse cx="92.2" cy="1480.9" rx="5.7" ry="3.8" fill="rgb(184,184,184)" opacity="0.64" transform="rotate(5 92.2 1480.9)"/><ellipse cx="1035.1" cy="1419.3" rx="4.1" ry="2.6" fill="rgb(216,216,216)" opacity="0.66" transform="rotate(1 1035.1 1419.3)"/><ellipse cx="1020.7" cy="1459.6" rx="4.3" ry="2.5" fill="rgb(219,219,219)" opacity="0.72" transform="rotate(25 1020.7 1459.6)"/><ellipse cx="676.1" cy="1564.7" rx="4.2" ry="2.6" fill="rgb(214,214,214)" opacity="0.57" transform="rotate(16 676.1 1564.7)"/><ellipse cx="699.5" cy="1420.0" rx="3.3" ry="1.6" fill="rgb(195,195,195)" opacity="0.55" transform="rotate(9 699.5 1420.0)"/><ellipse cx="279.8" cy="1461.0" rx="4.2" ry="2.7" fill="rgb(159,159,159)" opacity="0.85" transform="rotate(18 279.8 1461.0)"/><ellipse cx="297.6" cy="1491.8" rx="6.8" ry="5.2" fill="rgb(151,151,151)" opacity="0.92" transform="rotate(-13 297.6 1491.8)"/><ellipse cx="815.4" cy="1499.4" rx="5.1" ry="2.7" fill="rgb(151,151,151)" opacity="0.59" transform="rotate(-10 815.4 1499.4)"/><ellipse cx="835.0" cy="1432.3" rx="2.4" ry="1.4" fill="rgb(158,158,158)" opacity="0.84" transform="rotate(-1 835.0 1432.3)"/><ellipse cx="803.8" cy="1556.9" rx="4.8" ry="3.6" fill="rgb(226,226,226)" opacity="0.68" transform="rotate(15 803.8 1556.9)"/><ellipse cx="441.7" cy="1524.6" rx="7.1" ry="4.4" fill="rgb(228,228,228)" opacity="0.73" transform="rotate(-9 441.7 1524.6)"/><ellipse cx="842.3" cy="1497.8" rx="4.1" ry="3.0" fill="rgb(225,225,225)" opacity="0.69" transform="rotate(-5 842.3 1497.8)"/><ellipse cx="593.3" cy="1516.8" rx="6.8" ry="4.5" fill="rgb(178,178,178)" opacity="0.84" transform="rotate(-15 593.3 1516.8)"/><ellipse cx="428.0" cy="1475.4" rx="5.5" ry="2.7" fill="rgb(190,190,190)" opacity="0.70" transform="rotate(7 428.0 1475.4)"/><ellipse cx="524.9" cy="1451.8" rx="6.3" ry="3.6" fill="rgb(225,225,225)" opacity="0.70" transform="rotate(-7 524.9 1451.8)"/><ellipse cx="952.0" cy="1477.9" rx="5.6" ry="3.1" fill="rgb(210,210,210)" opacity="0.65" transform="rotate(4 952.0 1477.9)"/><ellipse cx="484.9" cy="1505.1" rx="5.1" ry="3.1" fill="rgb(191,191,191)" opacity="0.58" transform="rotate(23 484.9 1505.1)"/><ellipse cx="455.4" cy="1490.1" rx="7.4" ry="3.6" fill="rgb(205,205,205)" opacity="0.81" transform="rotate(-22 455.4 1490.1)"/><ellipse cx="673.0" cy="1547.0" rx="10.4" ry="6.5" fill="rgb(196,196,196)" opacity="0.61" transform="rotate(-7 673.0 1547.0)"/><ellipse cx="189.0" cy="1497.7" rx="5.2" ry="3.4" fill="rgb(179,179,179)" opacity="0.80" transform="rotate(-24 189.0 1497.7)"/><ellipse cx="564.4" cy="1546.9" rx="7.8" ry="6.2" fill="rgb(183,183,183)" opacity="0.88" transform="rotate(16 564.4 1546.9)"/><ellipse cx="406.3" cy="1527.2" rx="3.3" ry="1.9" fill="rgb(213,213,213)" opacity="0.89" transform="rotate(-10 406.3 1527.2)"/><ellipse cx="371.0" cy="1412.6" rx="4.4" ry="2.0" fill="rgb(153,153,153)" opacity="0.74" transform="rotate(-23 371.0 1412.6)"/><ellipse cx="108.2" cy="1478.5" rx="4.3" ry="3.2" fill="rgb(197,197,197)" opacity="0.95" transform="rotate(-15 108.2 1478.5)"/><ellipse cx="116.0" cy="1418.2" rx="2.5" ry="2.0" fill="rgb(195,195,195)" opacity="0.74" transform="rotate(-4 116.0 1418.2)"/><ellipse cx="157.9" cy="1524.5" rx="8.9" ry="6.3" fill="rgb(221,221,221)" opacity="0.57" transform="rotate(17 157.9 1524.5)"/><ellipse cx="209.7" cy="1476.2" rx="7.2" ry="5.6" fill="rgb(204,204,204)" opacity="0.81" transform="rotate(-23 209.7 1476.2)"/><ellipse cx="25.7" cy="1560.8" rx="10.0" ry="4.8" fill="rgb(227,227,227)" opacity="0.82" transform="rotate(-21 25.7 1560.8)"/><ellipse cx="203.1" cy="1573.5" rx="4.6" ry="3.0" fill="rgb(192,192,192)" opacity="0.90" transform="rotate(-1 203.1 1573.5)"/><ellipse cx="195.7" cy="1444.7" rx="5.8" ry="4.5" fill="rgb(177,177,177)" opacity="0.77" transform="rotate(-14 195.7 1444.7)"/><ellipse cx="311.8" cy="1509.0" rx="3.2" ry="1.5" fill="rgb(177,177,177)" opacity="0.82" transform="rotate(1 311.8 1509.0)"/><ellipse cx="767.1" cy="1501.9" rx="6.1" ry="4.3" fill="rgb(161,161,161)" opacity="0.72" transform="rotate(21 767.1 1501.9)"/><ellipse cx="914.5" cy="1552.5" rx="10.0" ry="7.8" fill="rgb(175,175,175)" opacity="0.80" transform="rotate(9 914.5 1552.5)"/><ellipse cx="893.3" cy="1479.5" rx="6.2" ry="4.2" fill="rgb(177,177,177)" opacity="0.63" transform="rotate(23 893.3 1479.5)"/><ellipse cx="244.9" cy="1481.1" rx="6.6" ry="4.5" fill="rgb(195,195,195)" opacity="0.71" transform="rotate(-9 244.9 1481.1)"/><ellipse cx="376.8" cy="1477.4" rx="4.0" ry="2.0" fill="rgb(226,226,226)" opacity="0.65" transform="rotate(23 376.8 1477.4)"/><ellipse cx="207.9" cy="1487.0" rx="3.6" ry="2.3" fill="rgb(178,178,178)" opacity="0.76" transform="rotate(-18 207.9 1487.0)"/><ellipse cx="488.8" cy="1412.0" rx="2.4" ry="1.3" fill="rgb(221,221,221)" opacity="0.57" transform="rotate(23 488.8 1412.0)"/><ellipse cx="408.9" cy="1467.8" rx="3.1" ry="1.7" fill="rgb(224,224,224)" opacity="0.66" transform="rotate(24 408.9 1467.8)"/><ellipse cx="821.3" cy="1431.4" rx="4.4" ry="2.1" fill="rgb(226,226,226)" opacity="0.69" transform="rotate(7 821.3 1431.4)"/><ellipse cx="126.2" cy="1510.3" rx="3.0" ry="1.7" fill="rgb(176,176,176)" opacity="0.58" transform="rotate(24 126.2 1510.3)"/><ellipse cx="1033.8" cy="1414.5" rx="2.9" ry="1.6" fill="rgb(223,223,223)" opacity="0.85" transform="rotate(-15 1033.8 1414.5)"/><ellipse cx="402.6" cy="1503.0" rx="7.8" ry="3.7" fill="rgb(227,227,227)" opacity="0.64" transform="rotate(8 402.6 1503.0)"/><ellipse cx="1000.2" cy="1458.1" rx="3.5" ry="2.3" fill="rgb(222,222,222)" opacity="0.86" transform="rotate(-7 1000.2 1458.1)"/><ellipse cx="168.4" cy="1430.8" rx="5.0" ry="3.1" fill="rgb(220,220,220)" opacity="0.57" transform="rotate(-19 168.4 1430.8)"/><ellipse cx="392.4" cy="1476.9" rx="5.2" ry="2.8" fill="rgb(224,224,224)" opacity="0.72" transform="rotate(21 392.4 1476.9)"/><ellipse cx="942.1" cy="1483.6" rx="6.9" ry="4.4" fill="rgb(156,156,156)" opacity="0.90" transform="rotate(15 942.1 1483.6)"/><ellipse cx="98.2" cy="1564.0" rx="6.9" ry="4.4" fill="rgb(215,215,215)" opacity="0.73" transform="rotate(-20 98.2 1564.0)"/><ellipse cx="609.5" cy="1562.0" rx="5.0" ry="3.5" fill="rgb(174,174,174)" opacity="0.63" transform="rotate(-20 609.5 1562.0)"/><ellipse cx="713.3" cy="1530.5" rx="8.4" ry="3.8" fill="rgb(155,155,155)" opacity="0.56" transform="rotate(7 713.3 1530.5)"/><ellipse cx="7.6" cy="1555.9" rx="8.7" ry="6.1" fill="rgb(228,228,228)" opacity="0.60" transform="rotate(13 7.6 1555.9)"/><ellipse cx="505.8" cy="1410.6" rx="3.2" ry="2.2" fill="rgb(195,195,195)" opacity="0.65" transform="rotate(23 505.8 1410.6)"/><ellipse cx="152.9" cy="1472.5" rx="7.2" ry="3.8" fill="rgb(177,177,177)" opacity="0.86" transform="rotate(19 152.9 1472.5)"/><ellipse cx="121.4" cy="1542.7" rx="6.2" ry="4.4" fill="rgb(187,187,187)" opacity="0.78" transform="rotate(-23 121.4 1542.7)"/><ellipse cx="662.4" cy="1548.5" rx="8.7" ry="5.7" fill="rgb(192,192,192)" opacity="0.86" transform="rotate(-14 662.4 1548.5)"/><ellipse cx="628.0" cy="1552.0" rx="5.6" ry="3.3" fill="rgb(207,207,207)" opacity="0.94" transform="rotate(21 628.0 1552.0)"/><ellipse cx="210.4" cy="1506.7" rx="8.1" ry="4.4" fill="rgb(215,215,215)" opacity="0.88" transform="rotate(-13 210.4 1506.7)"/><ellipse cx="1028.9" cy="1546.4" rx="10.0" ry="4.6" fill="rgb(164,164,164)" opacity="0.61" transform="rotate(11 1028.9 1546.4)"/><ellipse cx="15.6" cy="1493.4" rx="2.9" ry="1.3" fill="rgb(164,164,164)" opacity="0.66" transform="rotate(-15 15.6 1493.4)"/><ellipse cx="896.1" cy="1565.5" rx="5.4" ry="2.7" fill="rgb(151,151,151)" opacity="0.83" transform="rotate(-14 896.1 1565.5)"/><ellipse cx="340.8" cy="1538.7" rx="3.9" ry="1.8" fill="rgb(170,170,170)" opacity="0.89" transform="rotate(-7 340.8 1538.7)"/><ellipse cx="996.3" cy="1559.8" rx="10.9" ry="7.2" fill="rgb(156,156,156)" opacity="0.78" transform="rotate(-3 996.3 1559.8)"/><ellipse cx="403.8" cy="1459.5" rx="5.1" ry="3.4" fill="rgb(225,225,225)" opacity="0.79" transform="rotate(5 403.8 1459.5)"/><ellipse cx="1013.0" cy="1570.6" rx="8.7" ry="4.8" fill="rgb(177,177,177)" opacity="0.67" transform="rotate(-18 1013.0 1570.6)"/><ellipse cx="135.4" cy="1410.5" rx="4.3" ry="2.5" fill="rgb(220,220,220)" opacity="0.63" transform="rotate(-19 135.4 1410.5)"/><ellipse cx="364.4" cy="1477.2" rx="4.2" ry="3.0" fill="rgb(165,165,165)" opacity="0.73" transform="rotate(-15 364.4 1477.2)"/><ellipse cx="451.9" cy="1464.5" rx="6.8" ry="3.6" fill="rgb(183,183,183)" opacity="0.83" transform="rotate(-4 451.9 1464.5)"/><ellipse cx="181.3" cy="1415.3" rx="1.8" ry="0.8" fill="rgb(156,156,156)" opacity="0.61" transform="rotate(-21 181.3 1415.3)"/><ellipse cx="291.1" cy="1459.1" rx="3.3" ry="1.9" fill="rgb(170,170,170)" opacity="0.94" transform="rotate(4 291.1 1459.1)"/><ellipse cx="809.7" cy="1565.3" rx="4.4" ry="2.7" fill="rgb(200,200,200)" opacity="0.77" transform="rotate(24 809.7 1565.3)"/><ellipse cx="984.5" cy="1473.4" rx="3.2" ry="2.4" fill="rgb(181,181,181)" opacity="0.57" transform="rotate(-18 984.5 1473.4)"/><ellipse cx="761.1" cy="1462.5" rx="2.5" ry="1.4" fill="rgb(172,172,172)" opacity="0.73" transform="rotate(-8 761.1 1462.5)"/><ellipse cx="850.6" cy="1462.0" rx="5.8" ry="3.0" fill="rgb(169,169,169)" opacity="0.58" transform="rotate(-18 850.6 1462.0)"/><ellipse cx="505.9" cy="1506.1" rx="5.4" ry="3.4" fill="rgb(208,208,208)" opacity="0.85" transform="rotate(-3 505.9 1506.1)"/><ellipse cx="701.6" cy="1573.1" rx="4.1" ry="3.0" fill="rgb(192,192,192)" opacity="0.55" transform="rotate(-19 701.6 1573.1)"/><ellipse cx="329.9" cy="1500.9" rx="5.6" ry="4.1" fill="rgb(200,200,200)" opacity="0.56" transform="rotate(-22 329.9 1500.9)"/><ellipse cx="1003.3" cy="1539.7" rx="3.5" ry="1.7" fill="rgb(161,161,161)" opacity="0.58" transform="rotate(-19 1003.3 1539.7)"/><ellipse cx="1025.6" cy="1443.3" rx="2.9" ry="2.0" fill="rgb(162,162,162)" opacity="0.79" transform="rotate(-20 1025.6 1443.3)"/><ellipse cx="537.7" cy="1547.0" rx="7.9" ry="5.9" fill="rgb(195,195,195)" opacity="0.60" transform="rotate(16 537.7 1547.0)"/><ellipse cx="114.4" cy="1487.6" rx="7.4" ry="5.0" fill="rgb(173,173,173)" opacity="0.83" transform="rotate(-13 114.4 1487.6)"/><ellipse cx="812.9" cy="1529.9" rx="9.2" ry="5.0" fill="rgb(179,179,179)" opacity="0.79" transform="rotate(20 812.9 1529.9)"/><ellipse cx="907.4" cy="1463.8" rx="2.9" ry="1.7" fill="rgb(160,160,160)" opacity="0.89" transform="rotate(-8 907.4 1463.8)"/><ellipse cx="128.1" cy="1468.0" rx="2.9" ry="1.7" fill="rgb(201,201,201)" opacity="0.76" transform="rotate(16 128.1 1468.0)"/><ellipse cx="307.6" cy="1484.4" rx="6.7" ry="5.1" fill="rgb(151,151,151)" opacity="0.62" transform="rotate(-24 307.6 1484.4)"/><ellipse cx="117.3" cy="1564.4" rx="6.0" ry="3.6" fill="rgb(202,202,202)" opacity="0.58" transform="rotate(2 117.3 1564.4)"/><ellipse cx="365.5" cy="1422.4" rx="3.8" ry="2.1" fill="rgb(177,177,177)" opacity="0.77" transform="rotate(10 365.5 1422.4)"/><ellipse cx="988.0" cy="1463.4" rx="6.8" ry="3.7" fill="rgb(199,199,199)" opacity="0.82" transform="rotate(-6 988.0 1463.4)"/><ellipse cx="951.3" cy="1511.6" rx="4.8" ry="3.5" fill="rgb(152,152,152)" opacity="0.62" transform="rotate(-12 951.3 1511.6)"/><ellipse cx="441.8" cy="1456.5" rx="4.2" ry="2.3" fill="rgb(228,228,228)" opacity="0.66" transform="rotate(-14 441.8 1456.5)"/><ellipse cx="236.7" cy="1410.1" rx="1.8" ry="1.2" fill="rgb(180,180,180)" opacity="0.72" transform="rotate(-16 236.7 1410.1)"/><ellipse cx="383.0" cy="1471.2" rx="3.5" ry="2.7" fill="rgb(168,168,168)" opacity="0.75" transform="rotate(-24 383.0 1471.2)"/><ellipse cx="673.4" cy="1485.6" rx="3.8" ry="2.9" fill="rgb(197,197,197)" opacity="0.90" transform="rotate(8 673.4 1485.6)"/><ellipse cx="243.8" cy="1571.9" rx="11.5" ry="5.8" fill="rgb(175,175,175)" opacity="0.91" transform="rotate(18 243.8 1571.9)"/><ellipse cx="305.1" cy="1461.5" rx="6.8" ry="3.5" fill="rgb(188,188,188)" opacity="0.88" transform="rotate(5 305.1 1461.5)"/><ellipse cx="101.3" cy="1558.0" rx="9.5" ry="7.5" fill="rgb(177,177,177)" opacity="0.75" transform="rotate(-12 101.3 1558.0)"/><ellipse cx="890.6" cy="1494.7" rx="3.3" ry="2.2" fill="rgb(204,204,204)" opacity="0.88" transform="rotate(19 890.6 1494.7)"/><ellipse cx="291.6" cy="1531.1" rx="6.9" ry="4.9" fill="rgb(228,228,228)" opacity="0.74" transform="rotate(-15 291.6 1531.1)"/><ellipse cx="467.4" cy="1487.7" rx="5.2" ry="3.3" fill="rgb(221,221,221)" opacity="0.72" transform="rotate(14 467.4 1487.7)"/><ellipse cx="712.5" cy="1456.9" rx="3.2" ry="2.0" fill="rgb(189,189,189)" opacity="0.78" transform="rotate(-11 712.5 1456.9)"/><ellipse cx="1010.9" cy="1494.2" rx="5.4" ry="4.2" fill="rgb(182,182,182)" opacity="0.84" transform="rotate(6 1010.9 1494.2)"/><ellipse cx="351.3" cy="1527.7" rx="9.3" ry="7.3" fill="rgb(186,186,186)" opacity="0.75" transform="rotate(17 351.3 1527.7)"/><ellipse cx="580.5" cy="1424.6" rx="2.1" ry="1.0" fill="rgb(195,195,195)" opacity="0.91" transform="rotate(10 580.5 1424.6)"/><ellipse cx="506.1" cy="1424.0" rx="5.3" ry="2.7" fill="rgb(156,156,156)" opacity="0.82" transform="rotate(7 506.1 1424.0)"/><ellipse cx="687.3" cy="1566.3" rx="8.9" ry="4.2" fill="rgb(206,206,206)" opacity="0.67" transform="rotate(3 687.3 1566.3)"/><ellipse cx="528.0" cy="1551.9" rx="5.9" ry="3.7" fill="rgb(151,151,151)" opacity="0.77" transform="rotate(11 528.0 1551.9)"/><ellipse cx="193.5" cy="1447.4" rx="2.3" ry="1.7" fill="rgb(174,174,174)" opacity="0.62" transform="rotate(-25 193.5 1447.4)"/><ellipse cx="136.8" cy="1453.1" rx="6.2" ry="4.2" fill="rgb(211,211,211)" opacity="0.75" transform="rotate(7 136.8 1453.1)"/><ellipse cx="26.5" cy="1503.1" rx="4.3" ry="2.1" fill="rgb(164,164,164)" opacity="0.57" transform="rotate(-4 26.5 1503.1)"/><ellipse cx="823.1" cy="1474.7" rx="5.4" ry="3.5" fill="rgb(163,163,163)" opacity="0.79" transform="rotate(-1 823.1 1474.7)"/><ellipse cx="980.1" cy="1568.4" rx="9.9" ry="7.5" fill="rgb(175,175,175)" opacity="0.76" transform="rotate(0 980.1 1568.4)"/><ellipse cx="243.8" cy="1523.5" rx="9.1" ry="7.2" fill="rgb(197,197,197)" opacity="0.91" transform="rotate(2 243.8 1523.5)"/><ellipse cx="315.8" cy="1492.3" rx="3.8" ry="2.8" fill="rgb(189,189,189)" opacity="0.69" transform="rotate(20 315.8 1492.3)"/><ellipse cx="812.6" cy="1475.1" rx="3.5" ry="2.1" fill="rgb(152,152,152)" opacity="0.76" transform="rotate(-13 812.6 1475.1)"/><ellipse cx="723.7" cy="1516.8" rx="5.9" ry="2.8" fill="rgb(216,216,216)" opacity="0.74" transform="rotate(-23 723.7 1516.8)"/><ellipse cx="472.4" cy="1465.5" rx="3.2" ry="2.5" fill="rgb(159,159,159)" opacity="0.92" transform="rotate(-20 472.4 1465.5)"/><ellipse cx="482.0" cy="1464.3" rx="3.5" ry="2.1" fill="rgb(211,211,211)" opacity="0.90" transform="rotate(0 482.0 1464.3)"/><ellipse cx="992.9" cy="1441.3" rx="3.1" ry="2.4" fill="rgb(199,199,199)" opacity="0.83" transform="rotate(-8 992.9 1441.3)"/><ellipse cx="888.0" cy="1513.0" rx="3.8" ry="1.8" fill="rgb(177,177,177)" opacity="0.61" transform="rotate(-18 888.0 1513.0)"/><ellipse cx="12.0" cy="1459.9" rx="3.6" ry="2.6" fill="rgb(150,150,150)" opacity="0.78" transform="rotate(14 12.0 1459.9)"/><ellipse cx="806.7" cy="1434.0" rx="3.4" ry="1.9" fill="rgb(223,223,223)" opacity="0.67" transform="rotate(10 806.7 1434.0)"/><ellipse cx="980.9" cy="1572.0" rx="5.0" ry="2.6" fill="rgb(202,202,202)" opacity="0.85" transform="rotate(11 980.9 1572.0)"/><ellipse cx="197.7" cy="1418.9" rx="4.3" ry="2.0" fill="rgb(174,174,174)" opacity="0.67" transform="rotate(18 197.7 1418.9)"/><ellipse cx="270.5" cy="1557.8" rx="4.2" ry="2.0" fill="rgb(157,157,157)" opacity="0.64" transform="rotate(-3 270.5 1557.8)"/><ellipse cx="646.8" cy="1412.9" rx="4.5" ry="2.7" fill="rgb(161,161,161)" opacity="0.78" transform="rotate(19 646.8 1412.9)"/><ellipse cx="455.0" cy="1426.3" rx="2.2" ry="1.5" fill="rgb(176,176,176)" opacity="0.81" transform="rotate(9 455.0 1426.3)"/><ellipse cx="185.2" cy="1497.4" rx="3.9" ry="3.0" fill="rgb(162,162,162)" opacity="0.85" transform="rotate(18 185.2 1497.4)"/><ellipse cx="472.7" cy="1412.1" rx="2.1" ry="1.0" fill="rgb(202,202,202)" opacity="0.58" transform="rotate(22 472.7 1412.1)"/><ellipse cx="489.6" cy="1543.3" rx="6.0" ry="3.5" fill="rgb(208,208,208)" opacity="0.75" transform="rotate(16 489.6 1543.3)"/><ellipse cx="392.6" cy="1466.3" rx="5.7" ry="3.2" fill="rgb(161,161,161)" opacity="0.79" transform="rotate(-10 392.6 1466.3)"/><ellipse cx="101.3" cy="1539.4" rx="6.4" ry="3.4" fill="rgb(165,165,165)" opacity="0.63" transform="rotate(-13 101.3 1539.4)"/><ellipse cx="676.1" cy="1438.4" rx="3.6" ry="2.4" fill="rgb(153,153,153)" opacity="0.95" transform="rotate(-14 676.1 1438.4)"/><ellipse cx="39.9" cy="1425.1" rx="4.5" ry="3.2" fill="rgb(158,158,158)" opacity="0.81" transform="rotate(19 39.9 1425.1)"/><ellipse cx="141.4" cy="1494.6" rx="6.5" ry="4.2" fill="rgb(163,163,163)" opacity="0.67" transform="rotate(20 141.4 1494.6)"/><ellipse cx="3.1" cy="1517.9" rx="4.3" ry="2.2" fill="rgb(227,227,227)" opacity="0.89" transform="rotate(-20 3.1 1517.9)"/><ellipse cx="172.2" cy="1465.3" rx="6.9" ry="4.9" fill="rgb(181,181,181)" opacity="0.64" transform="rotate(25 172.2 1465.3)"/><ellipse cx="898.4" cy="1485.0" rx="7.4" ry="4.7" fill="rgb(153,153,153)" opacity="0.84" transform="rotate(-21 898.4 1485.0)"/><ellipse cx="651.7" cy="1454.6" rx="5.6" ry="3.1" fill="rgb(201,201,201)" opacity="0.88" transform="rotate(13 651.7 1454.6)"/><ellipse cx="723.4" cy="1557.5" rx="7.8" ry="3.6" fill="rgb(181,181,181)" opacity="0.89" transform="rotate(16 723.4 1557.5)"/><ellipse cx="293.5" cy="1529.6" rx="6.8" ry="3.3" fill="rgb(184,184,184)" opacity="0.75" transform="rotate(-4 293.5 1529.6)"/><ellipse cx="374.2" cy="1538.2" rx="5.1" ry="3.6" fill="rgb(212,212,212)" opacity="0.67" transform="rotate(14 374.2 1538.2)"/><ellipse cx="1023.7" cy="1491.4" rx="3.6" ry="1.7" fill="rgb(167,167,167)" opacity="0.93" transform="rotate(25 1023.7 1491.4)"/><ellipse cx="21.9" cy="1547.5" rx="7.1" ry="4.5" fill="rgb(208,208,208)" opacity="0.84" transform="rotate(6 21.9 1547.5)"/><ellipse cx="1010.2" cy="1574.8" rx="7.5" ry="5.9" fill="rgb(175,175,175)" opacity="0.71" transform="rotate(1 1010.2 1574.8)"/><ellipse cx="537.6" cy="1526.4" rx="8.6" ry="6.7" fill="rgb(206,206,206)" opacity="0.78" transform="rotate(0 537.6 1526.4)"/><ellipse cx="841.9" cy="1573.1" rx="4.6" ry="3.1" fill="rgb(202,202,202)" opacity="0.84" transform="rotate(-13 841.9 1573.1)"/><ellipse cx="799.8" cy="1458.0" rx="5.5" ry="4.0" fill="rgb(222,222,222)" opacity="0.93" transform="rotate(-8 799.8 1458.0)"/><ellipse cx="126.3" cy="1551.5" rx="9.5" ry="4.4" fill="rgb(176,176,176)" opacity="0.73" transform="rotate(-6 126.3 1551.5)"/><ellipse cx="734.6" cy="1477.9" rx="5.7" ry="3.6" fill="rgb(162,162,162)" opacity="0.70" transform="rotate(-23 734.6 1477.9)"/><ellipse cx="866.4" cy="1540.1" rx="8.9" ry="6.3" fill="rgb(192,192,192)" opacity="0.80" transform="rotate(21 866.4 1540.1)"/><ellipse cx="950.7" cy="1447.5" rx="2.6" ry="1.9" fill="rgb(201,201,201)" opacity="0.55" transform="rotate(2 950.7 1447.5)"/><ellipse cx="199.6" cy="1538.1" rx="4.5" ry="3.4" fill="rgb(220,220,220)" opacity="0.60" transform="rotate(22 199.6 1538.1)"/><ellipse cx="717.1" cy="1561.2" rx="4.0" ry="2.4" fill="rgb(170,170,170)" opacity="0.86" transform="rotate(-21 717.1 1561.2)"/><ellipse cx="216.7" cy="1542.8" rx="6.2" ry="4.8" fill="rgb(192,192,192)" opacity="0.81" transform="rotate(6 216.7 1542.8)"/><ellipse cx="205.6" cy="1419.4" rx="4.7" ry="2.7" fill="rgb(206,206,206)" opacity="0.86" transform="rotate(-18 205.6 1419.4)"/><ellipse cx="302.7" cy="1546.7" rx="4.9" ry="3.8" fill="rgb(159,159,159)" opacity="0.68" transform="rotate(-2 302.7 1546.7)"/><ellipse cx="179.8" cy="1501.4" rx="5.6" ry="3.1" fill="rgb(202,202,202)" opacity="0.58" transform="rotate(0 179.8 1501.4)"/><ellipse cx="491.6" cy="1564.3" rx="9.8" ry="7.5" fill="rgb(168,168,168)" opacity="0.74" transform="rotate(-0 491.6 1564.3)"/><ellipse cx="268.2" cy="1524.2" rx="7.5" ry="3.5" fill="rgb(185,185,185)" opacity="0.73" transform="rotate(-20 268.2 1524.2)"/><ellipse cx="319.5" cy="1426.4" rx="4.1" ry="2.3" fill="rgb(156,156,156)" opacity="0.69" transform="rotate(7 319.5 1426.4)"/><ellipse cx="590.0" cy="1425.3" rx="3.0" ry="2.0" fill="rgb(212,212,212)" opacity="0.93" transform="rotate(-6 590.0 1425.3)"/><ellipse cx="1046.1" cy="1570.0" rx="6.5" ry="4.2" fill="rgb(170,170,170)" opacity="0.68" transform="rotate(-7 1046.1 1570.0)"/><ellipse cx="425.5" cy="1464.3" rx="6.7" ry="3.8" fill="rgb(156,156,156)" opacity="0.65" transform="rotate(-3 425.5 1464.3)"/><ellipse cx="936.6" cy="1543.9" rx="10.2" ry="6.4" fill="rgb(224,224,224)" opacity="0.59" transform="rotate(-15 936.6 1543.9)"/><ellipse cx="445.3" cy="1432.5" rx="3.7" ry="1.7" fill="rgb(175,175,175)" opacity="0.89" transform="rotate(18 445.3 1432.5)"/><ellipse cx="890.3" cy="1435.8" rx="2.3" ry="1.4" fill="rgb(213,213,213)" opacity="0.63" transform="rotate(-16 890.3 1435.8)"/><ellipse cx="690.3" cy="1424.3" rx="4.1" ry="2.3" fill="rgb(210,210,210)" opacity="0.70" transform="rotate(-13 690.3 1424.3)"/><ellipse cx="144.4" cy="1529.1" rx="8.6" ry="4.4" fill="rgb(198,198,198)" opacity="0.59" transform="rotate(14 144.4 1529.1)"/><ellipse cx="233.3" cy="1438.4" rx="5.7" ry="3.2" fill="rgb(150,150,150)" opacity="0.91" transform="rotate(15 233.3 1438.4)"/><ellipse cx="465.5" cy="1468.0" rx="3.9" ry="2.4" fill="rgb(186,186,186)" opacity="0.75" transform="rotate(18 465.5 1468.0)"/><ellipse cx="241.6" cy="1421.3" rx="2.4" ry="1.7" fill="rgb(155,155,155)" opacity="0.60" transform="rotate(-12 241.6 1421.3)"/><ellipse cx="270.1" cy="1557.7" rx="4.8" ry="2.3" fill="rgb(178,178,178)" opacity="0.86" transform="rotate(-24 270.1 1557.7)"/><ellipse cx="58.2" cy="1519.9" rx="6.2" ry="3.3" fill="rgb(179,179,179)" opacity="0.61" transform="rotate(-24 58.2 1519.9)"/><ellipse cx="138.9" cy="1453.4" rx="3.1" ry="2.0" fill="rgb(180,180,180)" opacity="0.73" transform="rotate(-1 138.9 1453.4)"/><ellipse cx="876.9" cy="1513.6" rx="7.2" ry="4.8" fill="rgb(216,216,216)" opacity="0.69" transform="rotate(-18 876.9 1513.6)"/><ellipse cx="430.4" cy="1476.2" rx="4.2" ry="2.1" fill="rgb(160,160,160)" opacity="0.89" transform="rotate(14 430.4 1476.2)"/><ellipse cx="257.2" cy="1488.5" rx="4.4" ry="2.2" fill="rgb(191,191,191)" opacity="0.66" transform="rotate(-18 257.2 1488.5)"/><ellipse cx="187.0" cy="1516.4" rx="6.0" ry="4.5" fill="rgb(189,189,189)" opacity="0.88" transform="rotate(-16 187.0 1516.4)"/><ellipse cx="1003.8" cy="1490.1" rx="5.7" ry="2.8" fill="rgb(191,191,191)" opacity="0.65" transform="rotate(-0 1003.8 1490.1)"/><ellipse cx="622.7" cy="1570.2" rx="8.3" ry="6.0" fill="rgb(183,183,183)" opacity="0.60" transform="rotate(22 622.7 1570.2)"/><ellipse cx="892.4" cy="1429.8" rx="2.7" ry="1.7" fill="rgb(228,228,228)" opacity="0.83" transform="rotate(-11 892.4 1429.8)"/><ellipse cx="141.0" cy="1486.8" rx="3.0" ry="1.4" fill="rgb(174,174,174)" opacity="0.88" transform="rotate(8 141.0 1486.8)"/><ellipse cx="448.3" cy="1536.0" rx="7.5" ry="3.5" fill="rgb(190,190,190)" opacity="0.60" transform="rotate(-23 448.3 1536.0)"/><ellipse cx="133.8" cy="1467.1" rx="7.3" ry="4.0" fill="rgb(205,205,205)" opacity="0.85" transform="rotate(13 133.8 1467.1)"/><ellipse cx="980.6" cy="1418.8" rx="5.0" ry="3.1" fill="rgb(206,206,206)" opacity="0.71" transform="rotate(-4 980.6 1418.8)"/><ellipse cx="400.2" cy="1496.3" rx="7.8" ry="5.5" fill="rgb(211,211,211)" opacity="0.57" transform="rotate(-20 400.2 1496.3)"/><ellipse cx="172.7" cy="1428.7" rx="2.8" ry="1.9" fill="rgb(164,164,164)" opacity="0.63" transform="rotate(-16 172.7 1428.7)"/><ellipse cx="643.7" cy="1506.9" rx="8.5" ry="5.6" fill="rgb(219,219,219)" opacity="0.81" transform="rotate(-8 643.7 1506.9)"/><ellipse cx="244.9" cy="1493.4" rx="6.7" ry="4.2" fill="rgb(162,162,162)" opacity="0.57" transform="rotate(11 244.9 1493.4)"/><ellipse cx="1043.1" cy="1575.0" rx="7.2" ry="3.7" fill="rgb(212,212,212)" opacity="0.85" transform="rotate(-22 1043.1 1575.0)"/><ellipse cx="731.5" cy="1483.3" rx="7.8" ry="3.8" fill="rgb(198,198,198)" opacity="0.79" transform="rotate(-20 731.5 1483.3)"/><ellipse cx="777.6" cy="1454.9" rx="5.1" ry="3.4" fill="rgb(196,196,196)" opacity="0.65" transform="rotate(16 777.6 1454.9)"/><ellipse cx="76.6" cy="1522.0" rx="8.0" ry="3.6" fill="rgb(166,166,166)" opacity="0.64" transform="rotate(-9 76.6 1522.0)"/><ellipse cx="272.7" cy="1451.6" rx="3.4" ry="2.3" fill="rgb(204,204,204)" opacity="0.93" transform="rotate(17 272.7 1451.6)"/><ellipse cx="431.1" cy="1423.5" rx="2.6" ry="2.0" fill="rgb(207,207,207)" opacity="0.65" transform="rotate(-21 431.1 1423.5)"/><ellipse cx="1048.3" cy="1424.7" rx="2.0" ry="1.0" fill="rgb(164,164,164)" opacity="0.79" transform="rotate(14 1048.3 1424.7)"/><ellipse cx="1045.7" cy="1536.9" rx="5.0" ry="2.8" fill="rgb(150,150,150)" opacity="0.71" transform="rotate(11 1045.7 1536.9)"/><ellipse cx="868.8" cy="1500.1" rx="3.7" ry="2.1" fill="rgb(220,220,220)" opacity="0.55" transform="rotate(-2 868.8 1500.1)"/><ellipse cx="56.8" cy="1426.0" rx="2.5" ry="1.4" fill="rgb(219,219,219)" opacity="0.72" transform="rotate(-19 56.8 1426.0)"/><ellipse cx="152.3" cy="1545.6" rx="9.2" ry="7.3" fill="rgb(200,200,200)" opacity="0.59" transform="rotate(15 152.3 1545.6)"/><ellipse cx="698.8" cy="1467.4" rx="4.4" ry="3.2" fill="rgb(188,188,188)" opacity="0.65" transform="rotate(-6 698.8 1467.4)"/><ellipse cx="7.4" cy="1427.0" rx="2.6" ry="1.5" fill="rgb(226,226,226)" opacity="0.74" transform="rotate(-17 7.4 1427.0)"/><ellipse cx="618.9" cy="1497.3" rx="7.0" ry="3.6" fill="rgb(200,200,200)" opacity="0.63" transform="rotate(-21 618.9 1497.3)"/><ellipse cx="592.4" cy="1443.5" rx="4.2" ry="2.5" fill="rgb(158,158,158)" opacity="0.93" transform="rotate(-2 592.4 1443.5)"/><ellipse cx="748.7" cy="1566.0" rx="4.8" ry="2.6" fill="rgb(198,198,198)" opacity="0.94" transform="rotate(-2 748.7 1566.0)"/><ellipse cx="402.1" cy="1417.1" rx="4.1" ry="2.9" fill="rgb(225,225,225)" opacity="0.92" transform="rotate(21 402.1 1417.1)"/><ellipse cx="694.1" cy="1543.4" rx="9.9" ry="7.2" fill="rgb(175,175,175)" opacity="0.93" transform="rotate(-24 694.1 1543.4)"/><ellipse cx="548.6" cy="1462.8" rx="5.5" ry="3.4" fill="rgb(161,161,161)" opacity="0.79" transform="rotate(-5 548.6 1462.8)"/><ellipse cx="626.1" cy="1563.5" rx="5.5" ry="3.0" fill="rgb(185,185,185)" opacity="0.87" transform="rotate(-5 626.1 1563.5)"/><ellipse cx="323.8" cy="1493.6" rx="3.3" ry="2.3" fill="rgb(153,153,153)" opacity="0.77" transform="rotate(-20 323.8 1493.6)"/><ellipse cx="918.6" cy="1509.0" rx="8.8" ry="4.4" fill="rgb(219,219,219)" opacity="0.57" transform="rotate(-21 918.6 1509.0)"/><ellipse cx="427.8" cy="1428.8" rx="4.6" ry="2.9" fill="rgb(189,189,189)" opacity="0.80" transform="rotate(-4 427.8 1428.8)"/><ellipse cx="423.5" cy="1499.5" rx="4.0" ry="3.2" fill="rgb(201,201,201)" opacity="0.83" transform="rotate(-4 423.5 1499.5)"/><ellipse cx="46.6" cy="1486.5" rx="5.5" ry="3.7" fill="rgb(211,211,211)" opacity="0.84" transform="rotate(17 46.6 1486.5)"/><ellipse cx="653.2" cy="1470.2" rx="2.8" ry="1.2" fill="rgb(202,202,202)" opacity="0.88" transform="rotate(-14 653.2 1470.2)"/><ellipse cx="993.2" cy="1557.0" rx="5.2" ry="2.5" fill="rgb(186,186,186)" opacity="0.73" transform="rotate(7 993.2 1557.0)"/><ellipse cx="611.7" cy="1505.5" rx="5.2" ry="2.5" fill="rgb(181,181,181)" opacity="0.92" transform="rotate(-3 611.7 1505.5)"/><ellipse cx="839.5" cy="1539.1" rx="9.8" ry="7.0" fill="rgb(209,209,209)" opacity="0.90" transform="rotate(-3 839.5 1539.1)"/><ellipse cx="94.6" cy="1453.6" rx="4.7" ry="2.4" fill="rgb(177,177,177)" opacity="0.57" transform="rotate(-21 94.6 1453.6)"/><ellipse cx="261.9" cy="1546.7" rx="6.0" ry="4.2" fill="rgb(181,181,181)" opacity="0.67" transform="rotate(6 261.9 1546.7)"/><ellipse cx="466.7" cy="1525.7" rx="7.2" ry="5.4" fill="rgb(166,166,166)" opacity="0.85" transform="rotate(4 466.7 1525.7)"/><ellipse cx="910.3" cy="1500.9" rx="8.6" ry="6.0" fill="rgb(225,225,225)" opacity="0.59" transform="rotate(13 910.3 1500.9)"/><ellipse cx="54.3" cy="1437.8" rx="4.9" ry="3.4" fill="rgb(177,177,177)" opacity="0.94" transform="rotate(-19 54.3 1437.8)"/><ellipse cx="171.0" cy="1437.5" rx="3.2" ry="2.1" fill="rgb(203,203,203)" opacity="0.77" transform="rotate(10 171.0 1437.5)"/><ellipse cx="342.7" cy="1448.6" rx="3.3" ry="2.3" fill="rgb(150,150,150)" opacity="0.94" transform="rotate(1 342.7 1448.6)"/><ellipse cx="723.5" cy="1489.9" rx="3.5" ry="1.9" fill="rgb(209,209,209)" opacity="0.71" transform="rotate(2 723.5 1489.9)"/><ellipse cx="711.3" cy="1498.8" rx="5.8" ry="3.2" fill="rgb(152,152,152)" opacity="0.92" transform="rotate(4 711.3 1498.8)"/><ellipse cx="603.4" cy="1537.3" rx="9.5" ry="5.6" fill="rgb(177,177,177)" opacity="0.73" transform="rotate(23 603.4 1537.3)"/><ellipse cx="203.1" cy="1541.9" rx="6.8" ry="4.5" fill="rgb(220,220,220)" opacity="0.86" transform="rotate(24 203.1 1541.9)"/><ellipse cx="1003.5" cy="1471.4" rx="5.8" ry="4.4" fill="rgb(211,211,211)" opacity="0.84" transform="rotate(13 1003.5 1471.4)"/><ellipse cx="835.4" cy="1552.7" rx="6.6" ry="4.3" fill="rgb(154,154,154)" opacity="0.60" transform="rotate(14 835.4 1552.7)"/><ellipse cx="122.4" cy="1571.8" rx="8.8" ry="6.1" fill="rgb(181,181,181)" opacity="0.87" transform="rotate(-21 122.4 1571.8)"/><ellipse cx="273.4" cy="1524.1" rx="5.3" ry="3.3" fill="rgb(223,223,223)" opacity="0.63" transform="rotate(-5 273.4 1524.1)"/><ellipse cx="448.5" cy="1497.6" rx="4.7" ry="2.2" fill="rgb(202,202,202)" opacity="0.74" transform="rotate(-12 448.5 1497.6)"/><ellipse cx="492.0" cy="1551.7" rx="11.6" ry="5.6" fill="rgb(199,199,199)" opacity="0.80" transform="rotate(16 492.0 1551.7)"/><ellipse cx="203.7" cy="1546.2" rx="8.8" ry="6.1" fill="rgb(216,216,216)" opacity="0.91" transform="rotate(-0 203.7 1546.2)"/><ellipse cx="314.0" cy="1502.1" rx="4.2" ry="3.3" fill="rgb(174,174,174)" opacity="0.61" transform="rotate(-1 314.0 1502.1)"/><ellipse cx="464.6" cy="1528.8" rx="9.0" ry="5.5" fill="rgb(204,204,204)" opacity="0.60" transform="rotate(3 464.6 1528.8)"/><ellipse cx="412.7" cy="1498.3" rx="6.8" ry="4.7" fill="rgb(213,213,213)" opacity="0.75" transform="rotate(22 412.7 1498.3)"/><ellipse cx="106.7" cy="1502.8" rx="6.4" ry="4.0" fill="rgb(214,214,214)" opacity="0.92" transform="rotate(-21 106.7 1502.8)"/><ellipse cx="294.3" cy="1519.3" rx="10.0" ry="5.5" fill="rgb(154,154,154)" opacity="0.72" transform="rotate(-14 294.3 1519.3)"/><ellipse cx="203.5" cy="1560.9" rx="14.4" ry="7.4" fill="rgb(171,171,171)" opacity="0.92" transform="rotate(-5 203.5 1560.9)"/><ellipse cx="460.1" cy="1492.2" rx="7.3" ry="3.7" fill="rgb(198,198,198)" opacity="0.69" transform="rotate(-19 460.1 1492.2)"/><ellipse cx="91.9" cy="1527.0" rx="6.7" ry="4.0" fill="rgb(203,203,203)" opacity="0.58" transform="rotate(-3 91.9 1527.0)"/><ellipse cx="37.8" cy="1550.9" rx="6.8" ry="4.6" fill="rgb(217,217,217)" opacity="0.69" transform="rotate(13 37.8 1550.9)"/><ellipse cx="436.2" cy="1532.9" rx="10.2" ry="8.1" fill="rgb(152,152,152)" opacity="0.92" transform="rotate(-22 436.2 1532.9)"/><ellipse cx="184.0" cy="1545.9" rx="7.1" ry="4.0" fill="rgb(196,196,196)" opacity="0.55" transform="rotate(-9 184.0 1545.9)"/><ellipse cx="451.3" cy="1507.9" rx="8.6" ry="4.0" fill="rgb(224,224,224)" opacity="0.62" transform="rotate(23 451.3 1507.9)"/><ellipse cx="182.3" cy="1526.6" rx="6.0" ry="3.1" fill="rgb(210,210,210)" opacity="0.87" transform="rotate(-14 182.3 1526.6)"/><ellipse cx="205.8" cy="1499.2" rx="7.0" ry="4.7" fill="rgb(215,215,215)" opacity="0.84" transform="rotate(11 205.8 1499.2)"/><ellipse cx="386.4" cy="1530.1" rx="7.9" ry="4.6" fill="rgb(175,175,175)" opacity="0.57" transform="rotate(-14 386.4 1530.1)"/><ellipse cx="60.2" cy="1508.0" rx="4.3" ry="2.8" fill="rgb(196,196,196)" opacity="0.88" transform="rotate(20 60.2 1508.0)"/><ellipse cx="285.1" cy="1573.2" rx="14.4" ry="9.5" fill="rgb(222,222,222)" opacity="0.63" transform="rotate(16 285.1 1573.2)"/><ellipse cx="123.9" cy="1534.7" rx="10.6" ry="7.2" fill="rgb(228,228,228)" opacity="0.67" transform="rotate(-25 123.9 1534.7)"/><ellipse cx="43.1" cy="1517.3" rx="9.8" ry="5.8" fill="rgb(160,160,160)" opacity="0.77" transform="rotate(7 43.1 1517.3)"/><ellipse cx="527.5" cy="1521.4" rx="10.4" ry="7.8" fill="rgb(195,195,195)" opacity="0.86" transform="rotate(1 527.5 1521.4)"/><ellipse cx="159.7" cy="1561.9" rx="8.7" ry="5.1" fill="rgb(189,189,189)" opacity="0.63" transform="rotate(23 159.7 1561.9)"/><ellipse cx="214.4" cy="1522.6" rx="10.4" ry="6.6" fill="rgb(195,195,195)" opacity="0.88" transform="rotate(10 214.4 1522.6)"/><ellipse cx="326.7" cy="1520.8" rx="7.4" ry="4.6" fill="rgb(160,160,160)" opacity="0.66" transform="rotate(1 326.7 1520.8)"/><ellipse cx="37.1" cy="1552.3" rx="8.7" ry="5.2" fill="rgb(185,185,185)" opacity="0.94" transform="rotate(-19 37.1 1552.3)"/><ellipse cx="148.0" cy="1560.2" rx="9.2" ry="7.4" fill="rgb(181,181,181)" opacity="0.69" transform="rotate(7 148.0 1560.2)"/><ellipse cx="521.3" cy="1557.2" rx="12.8" ry="6.9" fill="rgb(226,226,226)" opacity="0.76" transform="rotate(16 521.3 1557.2)"/><ellipse cx="105.5" cy="1532.2" rx="6.2" ry="3.0" fill="rgb(171,171,171)" opacity="0.86" transform="rotate(-21 105.5 1532.2)"/><ellipse cx="536.3" cy="1568.2" rx="14.3" ry="7.1" fill="rgb(183,183,183)" opacity="0.58" transform="rotate(6 536.3 1568.2)"/><ellipse cx="249.9" cy="1563.8" rx="14.8" ry="11.5" fill="rgb(227,227,227)" opacity="0.69" transform="rotate(-20 249.9 1563.8)"/><ellipse cx="529.6" cy="1495.6" rx="6.9" ry="5.1" fill="rgb(167,167,167)" opacity="0.81" transform="rotate(-21 529.6 1495.6)"/><ellipse cx="197.8" cy="1560.4" rx="13.7" ry="9.6" fill="rgb(190,190,190)" opacity="0.64" transform="rotate(5 197.8 1560.4)"/><ellipse cx="401.8" cy="1572.2" rx="8.2" ry="6.3" fill="rgb(228,228,228)" opacity="0.69" transform="rotate(21 401.8 1572.2)"/><ellipse cx="86.3" cy="1511.7" rx="6.5" ry="3.9" fill="rgb(162,162,162)" opacity="0.76" transform="rotate(14 86.3 1511.7)"/><ellipse cx="44.4" cy="1568.6" rx="10.4" ry="5.4" fill="rgb(157,157,157)" opacity="0.77" transform="rotate(22 44.4 1568.6)"/><ellipse cx="397.5" cy="1560.1" rx="11.6" ry="6.5" fill="rgb(214,214,214)" opacity="0.74" transform="rotate(19 397.5 1560.1)"/><ellipse cx="303.9" cy="1569.6" rx="16.3" ry="12.6" fill="rgb(191,191,191)" opacity="0.64" transform="rotate(-18 303.9 1569.6)"/><ellipse cx="93.9" cy="1501.5" rx="5.9" ry="4.1" fill="rgb(228,228,228)" opacity="0.66" transform="rotate(-3 93.9 1501.5)"/><ellipse cx="439.8" cy="1527.1" rx="9.5" ry="6.7" fill="rgb(222,222,222)" opacity="0.94" transform="rotate(-6 439.8 1527.1)"/><ellipse cx="264.4" cy="1521.2" rx="9.8" ry="6.2" fill="rgb(210,210,210)" opacity="0.88" transform="rotate(-10 264.4 1521.2)"/><ellipse cx="453.0" cy="1513.5" rx="7.9" ry="5.0" fill="rgb(215,215,215)" opacity="0.67" transform="rotate(14 453.0 1513.5)"/><ellipse cx="117.4" cy="1534.8" rx="10.7" ry="7.9" fill="rgb(165,165,165)" opacity="0.67" transform="rotate(7 117.4 1534.8)"/><ellipse cx="17.3" cy="1563.9" rx="11.5" ry="6.4" fill="rgb(153,153,153)" opacity="0.80" transform="rotate(-6 17.3 1563.9)"/><ellipse cx="77.3" cy="1548.5" rx="7.0" ry="3.6" fill="rgb(166,166,166)" opacity="0.86" transform="rotate(4 77.3 1548.5)"/><ellipse cx="454.5" cy="1537.9" rx="9.8" ry="7.4" fill="rgb(214,214,214)" opacity="0.57" transform="rotate(-6 454.5 1537.9)"/><ellipse cx="324.7" cy="1545.8" rx="13.4" ry="7.7" fill="rgb(163,163,163)" opacity="0.74" transform="rotate(22 324.7 1545.8)"/><ellipse cx="91.7" cy="1510.0" rx="6.2" ry="3.6" fill="rgb(204,204,204)" opacity="0.70" transform="rotate(-6 91.7 1510.0)"/><ellipse cx="339.5" cy="1493.3" rx="4.0" ry="2.8" fill="rgb(190,190,190)" opacity="0.57" transform="rotate(20 339.5 1493.3)"/><ellipse cx="518.0" cy="1533.3" rx="8.8" ry="5.4" fill="rgb(167,167,167)" opacity="0.81" transform="rotate(-16 518.0 1533.3)"/><ellipse cx="424.4" cy="1556.6" rx="12.7" ry="8.3" fill="rgb(187,187,187)" opacity="0.67" transform="rotate(-12 424.4 1556.6)"/><ellipse cx="464.4" cy="1528.0" rx="9.2" ry="5.8" fill="rgb(193,193,193)" opacity="0.60" transform="rotate(8 464.4 1528.0)"/><ellipse cx="524.2" cy="1499.2" rx="7.0" ry="4.8" fill="rgb(223,223,223)" opacity="0.70" transform="rotate(-7 524.2 1499.2)"/><ellipse cx="295.2" cy="1550.3" rx="7.8" ry="3.9" fill="rgb(161,161,161)" opacity="0.77" transform="rotate(16 295.2 1550.3)"/><ellipse cx="359.2" cy="1516.5" rx="5.5" ry="3.3" fill="rgb(175,175,175)" opacity="0.93" transform="rotate(22 359.2 1516.5)"/><ellipse cx="7.5" cy="1527.7" rx="10.4" ry="5.8" fill="rgb(150,150,150)" opacity="0.84" transform="rotate(-24 7.5 1527.7)"/><ellipse cx="398.3" cy="1539.0" rx="10.3" ry="4.7" fill="rgb(192,192,192)" opacity="0.68" transform="rotate(16 398.3 1539.0)"/><ellipse cx="50.5" cy="1509.9" rx="8.7" ry="6.5" fill="rgb(216,216,216)" opacity="0.75" transform="rotate(9 50.5 1509.9)"/><ellipse cx="260.0" cy="1573.8" rx="14.2" ry="11.3" fill="rgb(204,204,204)" opacity="0.75" transform="rotate(20 260.0 1573.8)"/><ellipse cx="40.3" cy="1545.9" rx="11.9" ry="8.7" fill="rgb(226,226,226)" opacity="0.72" transform="rotate(10 40.3 1545.9)"/><ellipse cx="26.9" cy="1524.8" rx="9.1" ry="7.3" fill="rgb(212,212,212)" opacity="0.68" transform="rotate(-11 26.9 1524.8)"/><ellipse cx="87.1" cy="1494.7" rx="7.0" ry="3.9" fill="rgb(185,185,185)" opacity="0.79" transform="rotate(-10 87.1 1494.7)"/><ellipse cx="219.3" cy="1507.7" rx="7.7" ry="5.3" fill="rgb(213,213,213)" opacity="0.61" transform="rotate(-16 219.3 1507.7)"/><ellipse cx="445.4" cy="1510.3" rx="9.0" ry="5.4" fill="rgb(220,220,220)" opacity="0.82" transform="rotate(20 445.4 1510.3)"/><ellipse cx="490.9" cy="1563.9" rx="15.4" ry="10.2" fill="rgb(210,210,210)" opacity="0.59" transform="rotate(6 490.9 1563.9)"/><ellipse cx="280.1" cy="1518.6" rx="10.1" ry="6.5" fill="rgb(204,204,204)" opacity="0.84" transform="rotate(22 280.1 1518.6)"/><ellipse cx="322.6" cy="1507.1" rx="7.6" ry="4.9" fill="rgb(206,206,206)" opacity="0.68" transform="rotate(-12 322.6 1507.1)"/><ellipse cx="487.1" cy="1515.5" rx="5.8" ry="4.4" fill="rgb(56,56,56)" opacity="0.69" transform="rotate(-25 487.1 1515.5)"/><ellipse cx="636.1" cy="1511.7" rx="10.1" ry="7.0" fill="rgb(34,34,34)" opacity="0.78" transform="rotate(11 636.1 1511.7)"/><ellipse cx="475.5" cy="1548.9" rx="7.8" ry="4.1" fill="rgb(56,56,56)" opacity="0.85" transform="rotate(-19 475.5 1548.9)"/><ellipse cx="1042.5" cy="1486.0" rx="6.5" ry="4.7" fill="rgb(42,42,42)" opacity="0.58" transform="rotate(19 1042.5 1486.0)"/><ellipse cx="236.0" cy="1555.3" rx="14.0" ry="10.1" fill="rgb(49,49,49)" opacity="0.61" transform="rotate(21 236.0 1555.3)"/><ellipse cx="851.6" cy="1499.0" rx="8.5" ry="6.5" fill="rgb(48,48,48)" opacity="0.84" transform="rotate(-22 851.6 1499.0)"/><ellipse cx="146.4" cy="1502.5" rx="8.1" ry="6.1" fill="rgb(24,24,24)" opacity="0.55" transform="rotate(23 146.4 1502.5)"/><ellipse cx="608.8" cy="1565.1" rx="9.1" ry="4.1" fill="rgb(58,58,58)" opacity="0.87" transform="rotate(-21 608.8 1565.1)"/><ellipse cx="526.8" cy="1534.4" rx="9.6" ry="5.0" fill="rgb(36,36,36)" opacity="0.76" transform="rotate(-22 526.8 1534.4)"/><ellipse cx="98.3" cy="1535.1" rx="7.1" ry="4.7" fill="rgb(27,27,27)" opacity="0.61" transform="rotate(23 98.3 1535.1)"/><ellipse cx="718.8" cy="1560.9" rx="13.3" ry="9.4" fill="rgb(26,26,26)" opacity="0.55" transform="rotate(4 718.8 1560.9)"/><ellipse cx="742.2" cy="1570.3" rx="9.7" ry="6.4" fill="rgb(47,47,47)" opacity="0.84" transform="rotate(-23 742.2 1570.3)"/><ellipse cx="549.2" cy="1533.7" rx="10.5" ry="7.9" fill="rgb(61,61,61)" opacity="0.65" transform="rotate(-20 549.2 1533.7)"/><ellipse cx="221.0" cy="1498.9" rx="8.8" ry="6.3" fill="rgb(62,62,62)" opacity="0.63" transform="rotate(-6 221.0 1498.9)"/><ellipse cx="456.1" cy="1500.3" rx="6.5" ry="3.6" fill="rgb(64,64,64)" opacity="0.61" transform="rotate(-21 456.1 1500.3)"/><ellipse cx="544.4" cy="1485.2" rx="5.1" ry="3.3" fill="rgb(46,46,46)" opacity="0.78" transform="rotate(-4 544.4 1485.2)"/><ellipse cx="261.2" cy="1550.1" rx="9.9" ry="5.3" fill="rgb(49,49,49)" opacity="0.70" transform="rotate(23 261.2 1550.1)"/><ellipse cx="1005.5" cy="1533.2" rx="6.8" ry="3.7" fill="rgb(40,40,40)" opacity="0.51" transform="rotate(10 1005.5 1533.2)"/><ellipse cx="988.3" cy="1556.9" rx="9.1" ry="4.6" fill="rgb(33,33,33)" opacity="0.50" transform="rotate(-19 988.3 1556.9)"/><ellipse cx="64.1" cy="1499.8" rx="6.2" ry="4.1" fill="rgb(46,46,46)" opacity="0.61" transform="rotate(23 64.1 1499.8)"/><ellipse cx="505.9" cy="1506.4" rx="9.7" ry="6.9" fill="rgb(31,31,31)" opacity="0.53" transform="rotate(-10 505.9 1506.4)"/><ellipse cx="474.9" cy="1546.9" rx="12.2" ry="7.1" fill="rgb(34,34,34)" opacity="0.77" transform="rotate(19 474.9 1546.9)"/><ellipse cx="288.4" cy="1536.7" rx="10.2" ry="5.9" fill="rgb(41,41,41)" opacity="0.71" transform="rotate(21 288.4 1536.7)"/><ellipse cx="182.3" cy="1539.8" rx="6.7" ry="4.9" fill="rgb(24,24,24)" opacity="0.58" transform="rotate(-14 182.3 1539.8)"/><ellipse cx="498.3" cy="1536.2" rx="9.8" ry="4.7" fill="rgb(61,61,61)" opacity="0.88" transform="rotate(2 498.3 1536.2)"/><ellipse cx="563.3" cy="1569.4" rx="7.8" ry="6.2" fill="rgb(58,58,58)" opacity="0.62" transform="rotate(19 563.3 1569.4)"/><ellipse cx="554.4" cy="1541.0" rx="11.9" ry="9.0" fill="rgb(43,43,43)" opacity="0.53" transform="rotate(4 554.4 1541.0)"/><ellipse cx="236.0" cy="1493.1" rx="4.4" ry="2.7" fill="rgb(64,64,64)" opacity="0.79" transform="rotate(-22 236.0 1493.1)"/><ellipse cx="714.1" cy="1482.8" rx="4.4" ry="2.7" fill="rgb(60,60,60)" opacity="0.75" transform="rotate(-6 714.1 1482.8)"/><ellipse cx="921.4" cy="1483.4" rx="5.9" ry="3.9" fill="rgb(50,50,50)" opacity="0.74" transform="rotate(9 921.4 1483.4)"/><ellipse cx="84.9" cy="1483.2" rx="6.5" ry="3.1" fill="rgb(63,63,63)" opacity="0.69" transform="rotate(-24 84.9 1483.2)"/><ellipse cx="563.4" cy="1482.5" rx="6.5" ry="3.7" fill="rgb(24,24,24)" opacity="0.69" transform="rotate(14 563.4 1482.5)"/><ellipse cx="472.5" cy="1494.1" rx="5.8" ry="3.6" fill="rgb(46,46,46)" opacity="0.77" transform="rotate(-18 472.5 1494.1)"/><ellipse cx="475.0" cy="1492.3" rx="8.3" ry="4.0" fill="rgb(28,28,28)" opacity="0.88" transform="rotate(-22 475.0 1492.3)"/><ellipse cx="1027.0" cy="1515.4" rx="9.3" ry="5.7" fill="rgb(47,47,47)" opacity="0.85" transform="rotate(1 1027.0 1515.4)"/><ellipse cx="85.4" cy="1480.5" rx="6.3" ry="4.3" fill="rgb(40,40,40)" opacity="0.88" transform="rotate(-24 85.4 1480.5)"/><ellipse cx="23.4" cy="1489.8" rx="7.3" ry="3.4" fill="rgb(44,44,44)" opacity="0.74" transform="rotate(-12 23.4 1489.8)"/><ellipse cx="232.2" cy="1485.6" rx="4.7" ry="2.6" fill="rgb(46,46,46)" opacity="0.81" transform="rotate(15 232.2 1485.6)"/><ellipse cx="948.6" cy="1568.4" rx="15.1" ry="11.7" fill="rgb(30,30,30)" opacity="0.51" transform="rotate(23 948.6 1568.4)"/><ellipse cx="462.2" cy="1519.6" rx="7.1" ry="4.6" fill="rgb(49,49,49)" opacity="0.67" transform="rotate(19 462.2 1519.6)"/></g></g><path d="M702.700 1303L710 1301 733 1303 760 1318 800 1340 848 1352 853 1380 850 1414 830 1417 780 1409 740 1401 700 1397 686 1393 690 1360 697 1330Z" fill="url(#brockg)"/><path d="M702.700 1303L710 1301 733 1303 760 1318 800 1340 848 1352 853 1380 850 1414 830 1417 780 1409 740 1401 700 1397 686 1393 690 1360 697 1330Z" fill="#000" filter="url(#nzRockF)"/><path d="M702.700 1303L710 1301 733 1303 760 1318 800 1340 848 1352 853 1380 850 1414 830 1417 780 1409 740 1401 700 1397 686 1393 690 1360 697 1330Z" fill="#000" filter="url(#nzRock)" opacity=".6"/><rect x="0" y="0" width="1052" height="1575" fill="url(#vig)"/></g></symbol><use href="#photo" x="0" y="0" width="1052" height="1575"/></svg>
<!-- right -->
<div class="a" style="left:3580px;top:164px;width:2px;height:1956px;background:#1b1b1b;"></div>
<div class="a" style="left:3582px;top:164px;width:511px;height:1956px;background:#dfe0e4;"></div>
<div class="a" style="left:3582px;top:164px;width:511px;height:50px;background:#e1e2e6;"></div>
<div class="a" style="left:3582px;top:214px;width:511px;height:2px;background:#222;"></div>
<div class="a" style="left:3582px;top:276px;width:511px;height:2px;background:#2a2a2a;"></div>
<div class="a" style="left:3590px;top:228.8px;width:229.7px;height:36.2px;box-sizing:border-box;border:1.500px solid #9e9e9e;background:linear-gradient(#f2f2f2,#e6e6e6 50%,#dadada);box-shadow:inset 0 0 0 1px #f6f6f6;"></div>
<div class="a" style="left:3779px;top:231px;width:1px;height:32px;background:#d0d0d0;"></div>
<div class="t" style="left:3607.0px;top:235.5px;font-size:24.45px;line-height:24.45px;font-weight:400;color:#3a3a3a;letter-spacing:0.00px;">Normal</div>
<svg class="a" style="left:3788.4px;top:244px;" width="19.2" height="9.6" viewBox="0 0 19.2 9.6"><path d="M0 0h19.200l-9.600 9.600z" fill="#5a5a5a"/></svg>
<div class="t" style="left:3851.0px;top:237.0px;font-size:25.00px;line-height:25.00px;font-weight:400;color:#4a4a4a;letter-spacing:-0.00px;">Opacity:</div>
<div class="a" style="left:3960.3px;top:224.3px;width:76.3px;height:45px;box-sizing:border-box;border:3px solid #b4b4b4;background:#fff;"></div>
<div class="a" style="left:3965px;top:230.5px;width:68.6px;height:36px;background:#dadada;"></div>
<div class="t" style="left:3968.4px;top:237.6px;font-size:23.69px;line-height:23.69px;font-weight:400;color:#a2a2a2;letter-spacing:0.00px;">100%</div>
<div class="a" style="left:4036.6px;top:224.3px;width:45px;height:45px;box-sizing:border-box;border:2px solid #b6b6b6;background:linear-gradient(#f3f3f3,#dcdcdc);"></div>
<svg class="a" style="left:4047px;top:243.4px;" width="23" height="10.5" viewBox="0 0 23 10.5"><path d="M0 0h23l-11.500 10.500z" fill="#a4a4a4"/></svg>
<div class="a" style="left:3642px;top:278px;width:432.6px;height:123.7px;background:linear-gradient(#769cd4,#6d8fc4 70%,#6a89bb);"></div>
<div class="a" style="left:4074.6px;top:278px;width:18.4px;height:1842px;background:#c1c1c3;"></div>
<div class="a" style="left:4074.3px;top:278px;width:1.7px;height:1842px;background:#8e8e8e;"></div>
<div class="a" style="left:3704px;top:284px;width:76px;height:112px;background:#2e2e2e;"></div>
<svg class="a" style="left:3706px;top:286px" width="72" height="108" viewBox="0 0 72 108"><use href="#photo" x="0" y="0" width="72" height="108"/></svg>
<div class="t" style="left:3807.0px;top:333.2px;font-size:25.07px;line-height:25.07px;font-weight:400;color:#fff;letter-spacing:-0.00px;">Background</div>
<svg class="a" style="left:3580px;top:164px;" width="516" height="260" viewBox="3580 164 516 260"><defs><linearGradient id="rpg" x1="0" y1="0" x2="0" y2="1"><stop offset="0" stop-color="#9cc0f1"/><stop offset="1" stop-color="#5e8fd6"/></linearGradient><linearGradient id="rpw" x1="0" y1="0" x2="1" y2="1"><stop offset="0" stop-color="#ffffff"/><stop offset="1" stop-color="#cfdcf2"/></linearGradient></defs><path d="M3600.500 174.800h27v26.500h-13.500l-13.500-13.500z" fill="url(#rpw)" stroke="#5b8ad3" stroke-width="1.500"/><path d="M3600.500 187.800h13.500v13.500z" fill="#f8fafe" stroke="#1f3f78" stroke-width="1.600" stroke-linejoin="round"/><path d="M3614 201.800h14M3628 188v14" stroke="#27498a" stroke-width="1.400"/><rect x="3661" y="173.3" width="23" height="23" rx="1.500" fill="#fafcff" stroke="#2c559f" stroke-width="1.500"/><rect x="3657" y="176.8" width="23" height="23" rx="1.500" fill="#fafcff" stroke="#2c559f" stroke-width="1.500"/><path d="M3653 180.300h22.500v22.500h-13l-9.500-9.500z" fill="#fafcff" stroke="#1e3a70" stroke-width="1.600"/><path d="M3653 193.300h9.500v9.500z" fill="#fff" stroke="#14274f" stroke-width="1.800" stroke-linejoin="round"/><circle cx="3716.500" cy="185.800" r="14.800" fill="#fdfeff" stroke="#5f90d8" stroke-width="2.200"/><path d="M3706 196.300a14.800 14.800 0 0 1 21-21z" fill="#5585c4"/><circle cx="3716.500" cy="185.800" r="14.800" fill="none" stroke="#5f90d8" stroke-width="2.200"/><path d="M3727.700 197.600h17.800l-8.900 9.400z" fill="#7a7a7a"/><rect x="3760" y="174" width="32" height="28" fill="url(#rpg)" stroke="#3d6cb8" stroke-width="1"/><path d="M3760 202h32" stroke="#23427e" stroke-width="1.600"/><circle cx="3776" cy="188" r="7.600" fill="#e9ebef" stroke="#3563ad" stroke-width="1.500"/><path d="M3821.2 188.2v-5.4a7.8 7.8 0 0 1 15.6 0v5.4" fill="none" stroke="#9db1d2" stroke-width="4.42"/><rect x="3816" y="187.2" width="26" height="16.8" rx="3.64" fill="#9db1d2"/><path d="M3827.18 192.576h3.64v6.72h-3.64z" fill="#e4e6ea"/><rect x="3868.5" y="174.5" width="7" height="7" fill="#a9bcdc"/><rect x="3875.5" y="174.5" width="7" height="7" fill="#eef1f6"/><rect x="3882.5" y="174.5" width="7" height="7" fill="#a9bcdc"/><rect x="3868.5" y="181.5" width="7" height="7" fill="#eef1f6"/><rect x="3875.5" y="181.5" width="7" height="7" fill="#a9bcdc"/><rect x="3882.5" y="181.5" width="7" height="7" fill="#eef1f6"/><rect x="3868.5" y="188.5" width="7" height="7" fill="#a9bcdc"/><rect x="3875.5" y="188.5" width="7" height="7" fill="#eef1f6"/><rect x="3882.5" y="188.5" width="7" height="7" fill="#a9bcdc"/><rect x="3868.500" y="174.500" width="21" height="21" fill="none" stroke="#b3c3de" stroke-width="1"/><path d="M3887.3 196.14v-3.19a4.95 4.95 0 0 1 9.9 0v3.19" fill="none" stroke="#9db1d2" stroke-width="2.805"/><rect x="3884" y="195.14" width="16.5" height="10.36" rx="2.31" fill="#9db1d2"/><path d="M3891.09 198.455h2.31v4.144h-2.31z" fill="#e4e6ea"/><path d="M3983 178.500h30M3992 174h12v4.500" fill="none" stroke="#8eaad4" stroke-width="2.600"/><path d="M3986.500 182h23l-1.200 21h-20.600z" fill="#9bb5de"/><path d="M3993 186v13.500M3998 186v13.500M4003 186v13.500" stroke="#4a73b8" stroke-width="1.700"/><path d="M4046 182h9.500l-4.750 6z" fill="#3e74c8"/><path d="M4059 181h17M4059 187h17M4059 193h17M4059 199h17" stroke="#274d93" stroke-width="1.700"/><path d="M3598.500 341c7-11.500 20-11.500 27 0-7 11-20 11-27 0z" fill="#f6f6f6" stroke="#111" stroke-width="2.300"/><circle cx="3612" cy="339.800" r="6" fill="#111"/><circle cx="3612.500" cy="338.300" r="2.300" fill="#f2f2f2"/><rect x="3660" y="327" width="12" height="12" rx="5" fill="none" stroke="#6285c0" stroke-width="2.200" stroke-dasharray="3 1.200"/><rect x="3660" y="341" width="12" height="12" rx="5" fill="none" stroke="#6285c0" stroke-width="2.200" stroke-dasharray="3 1.200"/><rect x="3664.500" y="332.500" width="3" height="15" fill="#5f82bd"/><rect x="4010.5" y="325" width="7" height="7" fill="#dfe9f8"/><rect x="4017.5" y="325" width="7" height="7" fill="#89aade"/><rect x="4024.5" y="325" width="7" height="7" fill="#dfe9f8"/><rect x="4010.5" y="332" width="7" height="7" fill="#89aade"/><rect x="4017.5" y="332" width="7" height="7" fill="#dfe9f8"/><rect x="4024.5" y="332" width="7" height="7" fill="#89aade"/><rect x="4010.5" y="339" width="7" height="7" fill="#dfe9f8"/><rect x="4017.5" y="339" width="7" height="7" fill="#89aade"/><rect x="4024.5" y="339" width="7" height="7" fill="#dfe9f8"/><path d="M4010.500 325h21" stroke="#a8c3ea" stroke-width="2"/><path d="M4029.3 347.58v-3.63a4.95 4.95 0 0 1 9.9 0v3.63" fill="none" stroke="#4f79bd" stroke-width="2.805"/><rect x="4026" y="346.58" width="16.5" height="10.92" rx="2.31" fill="#4f79bd"/><path d="M4033.09 350.074h2.31v4.368h-2.31z" fill="#6f95d0"/></svg>
<!-- bottom -->
<div class="a" style="left:164px;top:1832px;width:117px;height:26px;background:#bdbdbd;overflow:hidden;"></div>
<div class="a" style="left:281px;top:1832px;width:3px;height:26px;background:#9c9c9c;"></div>
<div class="a" style="left:284px;top:1832px;width:341px;height:26px;background:#bdbdbd;"></div>
<div class="a" style="left:625px;top:1832px;width:26px;height:26px;background:#d2d2d2;"></div>
<div class="a" style="left:164px;top:1832px;width:500px;height:26px;overflow:hidden;"><div class="t" style="left:18.4px;top:7.4px;font-size:23.40px;line-height:23.40px;font-weight:400;color:#111;letter-spacing:-0.23px;">18.14%</div><div class="t" style="left:173.6px;top:3.8px;font-size:24.97px;line-height:24.97px;font-weight:400;color:#111;letter-spacing:0.00px;">Doc: 144.0M/144.0M</div></div>
<svg class="a" style="left:631px;top:1838px;" width="10" height="16" viewBox="0 0 10 16"><path d="M2 1l6 7-6 7" fill="none" stroke="#111" stroke-width="2"/></svg>
<div class="a" style="left:164px;top:1859px;width:3416px;height:261px;background:#bebebe;"></div>
<div class="t" style="left:184.8px;top:1877.8px;font-size:26.40px;line-height:26.40px;font-weight:400;color:#111;letter-spacing:0.00px;">Dodge</div>
<svg class="a" style="left:192px;top:1929px;" width="45" height="41" viewBox="0 0 45 41"><path d="M4 18c0-9 8-15.500 19-15.500S41 8 41 17c1 9-6 17-15 19-4 1-6 3-9 1.500C9 36 3 29 4 18z" fill="#e0a777" stroke="#c88e60" stroke-width="1"/><g fill="#fff"><rect x="10" y="10" width="2.500" height="2.500"/><rect x="17" y="7" width="3" height="2"/><rect x="25" y="9" width="2.500" height="3"/><rect x="32" y="12" width="3" height="2.500"/><rect x="13" y="17" width="3" height="2.500"/><rect x="21" y="15" width="2.500" height="2.500"/><rect x="28" y="18" width="3" height="3"/><rect x="35" y="20" width="2" height="2.500"/><rect x="9" y="24" width="2.500" height="3"/><rect x="17" y="24" width="3" height="2.500"/><rect x="24" y="26" width="2.500" height="2.500"/><rect x="31" y="27" width="2.500" height="2"/><rect x="14" y="31" width="2.500" height="2.500"/><rect x="22" y="32" width="3" height="2"/></g></svg>
<div class="a" style="left:250px;top:1918px;width:66px;height:61.5px;box-sizing:border-box;border-radius:8px;border:2.500px solid #181818;background:#a3a3a3;box-shadow:0 2px 0 #d4d4d4;"></div>
<svg class="a" style="left:250px;top:1918px;" width="66" height="62" viewBox="0 0 66 62"><path d="M34 34l17.500 17" stroke="#6a6a6a" stroke-width="4" stroke-linecap="round"/><circle cx="26" cy="26" r="13.500" fill="#8c8c8c" stroke="#7a7a7a" stroke-width="1.500"/></svg>
<svg class="a" style="left:192px;top:1993px;" width="46" height="41" viewBox="0 0 46 41"><path d="M6 12c4-6 12-9 19-6l17 9v22l-12-3c-6 2-14 1-20-3C4 27 2 18 6 12z" fill="#f2f2f2" stroke="#555" stroke-width="2"/><ellipse cx="15" cy="20" rx="8" ry="7" fill="#b9b9b9" stroke="#555" stroke-width="1.800"/><path d="M7 9c5-5 12-6 18-4" fill="none" stroke="#555" stroke-width="1.500"/></svg>
<svg class="a" style="left:334px;top:1899.8px;" width="2.2" height="200" viewBox="0 0 2.2 200"><path d="M1.100 0V200" stroke="#000" stroke-width="2.200" stroke-dasharray="4 8.100"/><path d="M1.100 4V200" stroke="#fff" stroke-width="2.200" stroke-dasharray="2 10.100"/></svg>
<svg class="a" style="left:774px;top:1899.8px;" width="2.2" height="200" viewBox="0 0 2.2 200"><path d="M1.100 0V200" stroke="#000" stroke-width="2.200" stroke-dasharray="4 8.100"/><path d="M1.100 4V200" stroke="#fff" stroke-width="2.200" stroke-dasharray="2 10.100"/></svg>
<div class="t" style="left:356.0px;top:1942.8px;font-size:23.72px;line-height:23.72px;font-weight:400;color:#111;letter-spacing:0.00px;">Range:</div>
<div class="a" style="left:454.4px;top:1931px;width:299px;height:44.5px;box-sizing:border-box;border:1.500px solid #a8a8a8;background:linear-gradient(#ffffff,#f0f0f0 50%,#d9d9d9);box-shadow:0 1px 0 #d8d8d8;"></div>
<div class="t" style="left:470.6px;top:1940.6px;font-size:25.60px;line-height:25.60px;font-weight:400;color:#111;letter-spacing:0.00px;">Highlights</div>
<svg class="a" style="left:722.5px;top:1949px;" width="19" height="11.5" viewBox="0 0 19 11.5"><path d="M0 0h19l-9.500 11.500z" fill="#555"/></svg>
<div class="t" style="left:362.5px;top:2024.0px;font-size:24.22px;line-height:24.22px;font-weight:400;color:#111;letter-spacing:0.00px;">Brush:</div>
<div class="a" style="left:446px;top:2004px;width:255px;height:61px;background:#c2c2c2;"></div>
<svg class="a" style="left:446px;top:2004px;" width="255" height="61" viewBox="0 0 255 61"><defs><filter id="bb" filterUnits="userSpaceOnUse" x="-20" y="-30" width="300" height="120"><feGaussianBlur stdDeviation="5.500"/></filter><filter id="bb2" filterUnits="userSpaceOnUse" x="-20" y="-30" width="300" height="120"><feGaussianBlur stdDeviation="4"/></filter></defs><path d="M30 28C58 15 90 14 120 27S178 47 232 32" fill="none" stroke="#000" stroke-width="5" stroke-linecap="round" filter="url(#bb)" opacity=".8"/><path d="M54 21C78 14 98 17 120 27S170 44 208 38" fill="none" stroke="#000" stroke-width="13" stroke-linecap="round" filter="url(#bb)" opacity=".95"/><path d="M78 19C96 17 108 21 122 28S158 42 184 42" fill="none" stroke="#000" stroke-width="17" stroke-linecap="round" filter="url(#bb2)"/></svg>
<svg class="a" style="left:712px;top:2029.5px;" width="18" height="9.5" viewBox="0 0 18 9.5"><path d="M0 0h18l-9 9.500z" fill="#111"/></svg>
<div class="t" style="left:851.7px;top:1942.9px;font-size:23.80px;line-height:23.80px;font-weight:400;color:#111;letter-spacing:-0.00px;">Size:</div>
<div class="a" style="left:926.3px;top:1950px;width:237.7px;height:10px;box-sizing:border-box;border-radius:5px;background:linear-gradient(#6c6c6c,#8d8d8d 45%,#909090);border:1px solid #5e5e5e;box-shadow:0 1.500px 0 #e6e6e6;"></div><div class="a" style="left:1150.3px;top:1941px;width:25px;height:25px;box-sizing:border-box;border-radius:50%;background:linear-gradient(#f4f4f4,#c4c4c4);border:2px solid #1e1e1e;"></div>
<div class="t" style="left:1197.0px;top:1943.0px;font-size:25.57px;line-height:25.57px;font-weight:400;color:#111;letter-spacing:0.00px;">2400 px</div>
<div class="t" style="left:795.0px;top:1990.5px;font-size:24.34px;line-height:24.34px;font-weight:400;color:#111;letter-spacing:0.00px;">Exposure:</div>
<div class="a" style="left:919.8px;top:1998px;width:245.6px;height:10px;box-sizing:border-box;border-radius:5px;background:linear-gradient(#6c6c6c,#8d8d8d 45%,#909090);border:1px solid #5e5e5e;box-shadow:0 1.500px 0 #e6e6e6;"></div><div class="a" style="left:918.2px;top:1989px;width:25px;height:25px;box-sizing:border-box;border-radius:50%;background:linear-gradient(#f4f4f4,#c4c4c4);border:2px solid #1e1e1e;"></div>
<div class="t" style="left:1197.0px;top:1992.3px;font-size:23.32px;line-height:23.32px;font-weight:400;color:#111;letter-spacing:0.00px;">3%</div>
<svg class="a" style="left:3432.5px;top:1874px;" width="26" height="26" viewBox="0 0 26 26"><circle cx="13" cy="13" r="12.500" fill="#6e6e6e"/><text x="13" y="20.500" font-family="Liberation Sans" font-weight="700" font-size="20" fill="#f4f4f4" text-anchor="middle">?</text></svg>
<svg class="a" style="left:3477px;top:1876px;" width="34" height="22" viewBox="0 0 34 22"><path d="M1 5h9l-4.500 5.500z" fill="#3c6fc0"/><path d="M15 2.500h17M15 8.500h17M15 14.500h17M15 20.500h17" stroke="#2d5aa6" stroke-width="1.800"/></svg>
<svg class="a" style="left:3530px;top:1880px;" width="23" height="14" viewBox="0 0 23 14"><path d="M2.500 2.500l9 9 9-9" fill="none" stroke="#222" stroke-width="3.200"/></svg>
<div class="a" style="left:0px;top:2120px;width:4093px;height:2px;background:#4f4f4f;"></div>
<div class="a" style="left:3px;top:2122px;width:4089px;height:116px;background:#dddddd;"></div>
<div class="a" style="left:4092px;top:2120px;width:4px;height:120px;background:#5a5a5a;"></div>
<div class="a" style="left:0px;top:2122px;width:3px;height:118px;background:#6c6c6c;"></div>
<div class="a" style="left:0px;top:2237.5px;width:4096px;height:2.5px;background:#6a6a6a;"></div>
<div class="a" style="left:178.3px;top:2126.3px;width:87.4px;height:72px;box-sizing:border-box;border-radius:4px;background:#c9c9c9;border:1px solid #b4b4b4;"></div>
<div class="a" style="left:3370px;top:2126.3px;width:73.6px;height:72px;box-sizing:border-box;border-radius:4px;background:#c9c9c9;border:1px solid #b4b4b4;"></div>
<svg class="a" style="left:143.9px;top:2138px;" width="2.2" height="84" viewBox="0 0 2.2 84"><path d="M1.100 0V84" stroke="#111" stroke-width="2.200" stroke-dasharray="2 6"/><path d="M1.100 2V84" stroke="#fff" stroke-width="2.200" stroke-dasharray="2 6"/></svg>
<svg class="a" style="left:299.9px;top:2138px;" width="2.2" height="84" viewBox="0 0 2.2 84"><path d="M1.100 0V84" stroke="#111" stroke-width="2.200" stroke-dasharray="2 6"/><path d="M1.100 2V84" stroke="#fff" stroke-width="2.200" stroke-dasharray="2 6"/></svg>
<svg class="a" style="left:0px;top:2122px;" width="4096" height="118" viewBox="0 2122 4096 118"><defs><linearGradient id="tbg" x1="0" y1="0" x2="0" y2="1"><stop offset="0" stop-color="#8fb6ec"/><stop offset="1" stop-color="#5a8ad2"/></linearGradient><linearGradient id="tbd" x1="0" y1="0" x2="0" y2="1"><stop offset="0" stop-color="#4a7ac6"/><stop offset="1" stop-color="#2f5da8"/></linearGradient><linearGradient id="tbl" x1="0" y1="0" x2="0" y2="1"><stop offset="0" stop-color="#dbe8fb"/><stop offset="1" stop-color="#a9c6f0"/></linearGradient></defs><path d="M50 2143.500c0-3 2-5.500 5-5.500h18c2.500 0 3.500 1.500 4.500 4h-27.500z" fill="#4c7cc8"/><rect x="48.500" y="2144" width="55.500" height="39.500" rx="6" fill="url(#tbg)" stroke="#5583c8" stroke-width="1.200"/><path d="M54 2177l14-14.500 8 8 9-9 13 15.500z" fill="#3767b4"/><circle cx="91" cy="2154" r="4" fill="#3767b4"/><g fill="#7aa3e0" stroke="#4d7cc5" stroke-width="1"><circle cx="197.500" cy="2146" r="3.600"/><circle cx="197.500" cy="2156" r="3.600"/><circle cx="197.500" cy="2166" r="3.600"/></g><path d="M205 2144.500h23M205 2155h18M205 2165.500h7" stroke="#3f6fb8" stroke-width="2.800"/><path d="M216 2167l21.500-22c3-3 7-3 9 0s2 6-1 9l-21 21.500z" fill="#4a7dcb" stroke="#3a69b3" stroke-width="1"/><path d="M214.500 2169l9 9-15.500 6z" fill="#5b8cd6" stroke="#3a69b3" stroke-width="1"/><path d="M215.200 2168l9.300 9.300" stroke="#e9eef8" stroke-width="1.600"/><path d="M352 2153h14c9 0 16 6 16 14.500s-7 14.500-16 14.500h-8" fill="none" stroke="#4f80cc" stroke-width="7.500" stroke-linecap="round"/><path d="M338 2152.500l15-15.500v31z" fill="#4f80cc"/><path d="M500 2153h-14c-9 0-16 6-16 14.500s7 14.500 16 14.500h8" fill="none" stroke="#a9c1e6" stroke-width="7.500" stroke-linecap="round"/><path d="M514.500 2152.500l-15-15.500v31z" fill="#a9c1e6"/><path d="M601 2150c8-10 24-12 34-3s11 24 2 34c-1.500 1.800-3.400 3.300-5 4.400" fill="none" stroke="#5384cf" stroke-width="8" stroke-linecap="round"/><path d="M586 2152l2-19 17.500 14.500z" fill="#5384cf"/><g fill="#5384cf"><ellipse cx="587.500" cy="2165" rx="4" ry="4.500"/><ellipse cx="592" cy="2177.500" rx="3.500" ry="4" transform="rotate(-30 592 2177.500)"/><ellipse cx="603" cy="2187" rx="4.300" ry="3.300" transform="rotate(25 603 2187)"/><ellipse cx="618.500" cy="2190" rx="4.500" ry="3.300" transform="rotate(-8 618.500 2190)"/></g><path d="M653 2158.500h14l-7 8.500z" fill="#333"/><rect x="708.800" y="2140.800" width="52.400" height="40.400" fill="#f4f7fc" stroke="#2e5aa3" stroke-width="1.600"/><rect x="712.500" y="2144.500" width="16.500" height="33" fill="url(#tbg)" stroke="#3f6db8" stroke-width="1"/><rect x="733" y="2144.500" width="24.500" height="14.500" fill="url(#tbg)" stroke="#3f6db8" stroke-width="1"/><rect x="733" y="2163" width="24.500" height="14.500" fill="url(#tbd)" stroke="#274f96" stroke-width="1"/><path d="M755.500 2186.500h12.500l-6.250 6.500z" fill="#333"/><rect x="830" y="2142" width="54" height="41.500" fill="#3f6fbb"/><rect x="830" y="2142" width="54" height="10" fill="#4678c4"/><rect x="832.500" y="2153" width="49" height="28" fill="#eef3fb"/><rect x="834.3" y="2154.8" width="13.500" height="11" fill="url(#tbg)" stroke="#4f7fc8" stroke-width=".8"/><rect x="850.3" y="2154.8" width="13.500" height="11" fill="url(#tbg)" stroke="#4f7fc8" stroke-width=".8"/><rect x="866.3" y="2154.8" width="13.500" height="11" fill="url(#tbg)" stroke="#4f7fc8" stroke-width=".8"/><rect x="834.3" y="2168" width="13.500" height="11" fill="url(#tbg)" stroke="#4f7fc8" stroke-width=".8"/><rect x="850.3" y="2168" width="13.500" height="11" fill="url(#tbg)" stroke="#4f7fc8" stroke-width=".8"/><rect x="866.3" y="2168" width="13.500" height="11" fill="url(#tbg)" stroke="#4f7fc8" stroke-width=".8"/><rect x="977.500" y="2158" width="39" height="34.500" fill="url(#tbl)" stroke="#5a86c9" stroke-width="1.500"/><path d="M996.500 2132.500l29.500 25.500h-59z" fill="url(#tbg)" stroke="#4f7ec8" stroke-width="1"/><rect x="990" y="2168.500" width="13.500" height="24" fill="url(#tbg)" stroke="#4f7ec8" stroke-width="1"/><path d="M977 2193.500h40" stroke="#4a76bb" stroke-width="2"/><path d="M3406 2159.500l25.500 10.500-25.500 16-25.500-16z" fill="#3f6fbc" stroke="#2f5ea9" stroke-width="1"/><path d="M3406 2136l26 13.500-26 15.500-26-15.500z" fill="url(#tbl)" stroke="#6d98d9" stroke-width="1.300"/><path d="M3380.500 2163.500l25.500 15.500 25.500-15.500" fill="none" stroke="#e4ebf6" stroke-width="2"/><text x="3504" y="2177" font-family="Liberation Serif" font-style="italic" font-size="62" fill="#4b7cc7" textLength="52" lengthAdjust="spacingAndGlyphs">fx</text><circle cx="3650.500" cy="2152.500" r="16.200" fill="url(#tbl)" stroke="#5f8bd0" stroke-width="1.300"/><circle cx="3641" cy="2171.500" r="16.200" fill="#86aee8" fill-opacity=".92" stroke="#3e6db8" stroke-width="1.300"/><circle cx="3661.500" cy="2171.500" r="16.200" fill="#3465b4" fill-opacity=".9" stroke="#2a559e" stroke-width="1.300"/><g stroke="#5a86c9" stroke-width="1.300"><rect x="3771" y="2151.500" width="25" height="32.500" fill="#eaf1fc" transform="rotate(9 3783 2168)"/><rect x="3760" y="2143.500" width="26" height="33" fill="#eaf1fc" transform="rotate(4 3773 2160)"/><rect x="3747.500" y="2139" width="27.500" height="34.500" fill="#f2f6fd" transform="rotate(-7 3761 2156)"/></g><rect x="3752.500" y="2144" width="17.500" height="24.500" fill="#4678c6" transform="rotate(-7 3761 2156)"/><rect x="3780" y="2152" width="5" height="20" fill="#8db3ea" transform="rotate(4 3773 2160)"/><rect x="3789.500" y="2160" width="5" height="18" fill="#9dbdee" transform="rotate(9 3783 2168)"/><path d="M3889 2140h11.500v17.500H3918v11.500h-17.500v17H3889v-17h-17.200v-11.500H3889z" fill="url(#tbg)" stroke="#3f6fba" stroke-width="1.200"/><rect x="3994" y="2142" width="48.400" height="41.500" fill="url(#tbg)" stroke="#4f7fc8" stroke-width="1"/><rect x="4012" y="2142" width="30.400" height="11" fill="#2f5fad"/><path d="M3994.500 2145.500h17" stroke="#aac4ee" stroke-width="1.500"/><path d="M4054.700 2158.500h14.600l-7.300 8z" fill="#333"/></svg>
<div class="t" style="left:23.5px;top:2207.8px;font-size:24.00px;line-height:24.00px;font-weight:400;color:#0c0c0c;letter-spacing:0.35px;">Photo Bin</div>
<div class="t" style="left:153.3px;top:2207.8px;font-size:24.00px;line-height:24.00px;font-weight:400;color:#0c0c0c;letter-spacing:0.62px;">Tool Options</div>
<div class="t" style="left:334.8px;top:2207.8px;font-size:24.00px;line-height:24.00px;font-weight:400;color:#0c0c0c;letter-spacing:0.44px;">Undo</div>
<div class="t" style="left:464.0px;top:2207.8px;font-size:24.00px;line-height:24.00px;font-weight:400;color:#0c0c0c;letter-spacing:-0.46px;">Redo</div>
<div class="t" style="left:578.5px;top:2207.8px;font-size:24.00px;line-height:24.00px;font-weight:400;color:#0c0c0c;letter-spacing:0.12px;">Rotate</div>
<div class="t" style="left:699.0px;top:2207.8px;font-size:24.00px;line-height:24.00px;font-weight:400;color:#0c0c0c;letter-spacing:0.39px;">Layout</div>
<div class="t" style="left:803.5px;top:2207.8px;font-size:24.00px;line-height:24.00px;font-weight:400;color:#0c0c0c;letter-spacing:0.39px;">Organizer</div>
<div class="t" style="left:922.0px;top:2207.8px;font-size:24.00px;line-height:24.00px;font-weight:400;color:#0c0c0c;letter-spacing:0.48px;">Home Screen</div>
<div class="t" style="left:3371.4px;top:2207.8px;font-size:24.00px;line-height:24.00px;font-weight:400;color:#0c0c0c;letter-spacing:0.11px;">Layers</div>
<div class="t" style="left:3490.6px;top:2207.8px;font-size:24.00px;line-height:24.00px;font-weight:400;color:#0c0c0c;letter-spacing:0.91px;">Effects</div>
<div class="t" style="left:3618.0px;top:2207.8px;font-size:24.00px;line-height:24.00px;font-weight:400;color:#0c0c0c;letter-spacing:0.49px;">Filters</div>
<div class="t" style="left:3739.8px;top:2207.8px;font-size:24.00px;line-height:24.00px;font-weight:400;color:#0c0c0c;letter-spacing:0.57px;">Styles</div>
<div class="t" style="left:3845.4px;top:2207.8px;font-size:24.00px;line-height:24.00px;font-weight:400;color:#0c0c0c;letter-spacing:0.58px;">Graphics</div>
<div class="t" style="left:3990.0px;top:2207.8px;font-size:24.00px;line-height:24.00px;font-weight:400;color:#0c0c0c;letter-spacing:0.44px;">More</div>
</body></html>
